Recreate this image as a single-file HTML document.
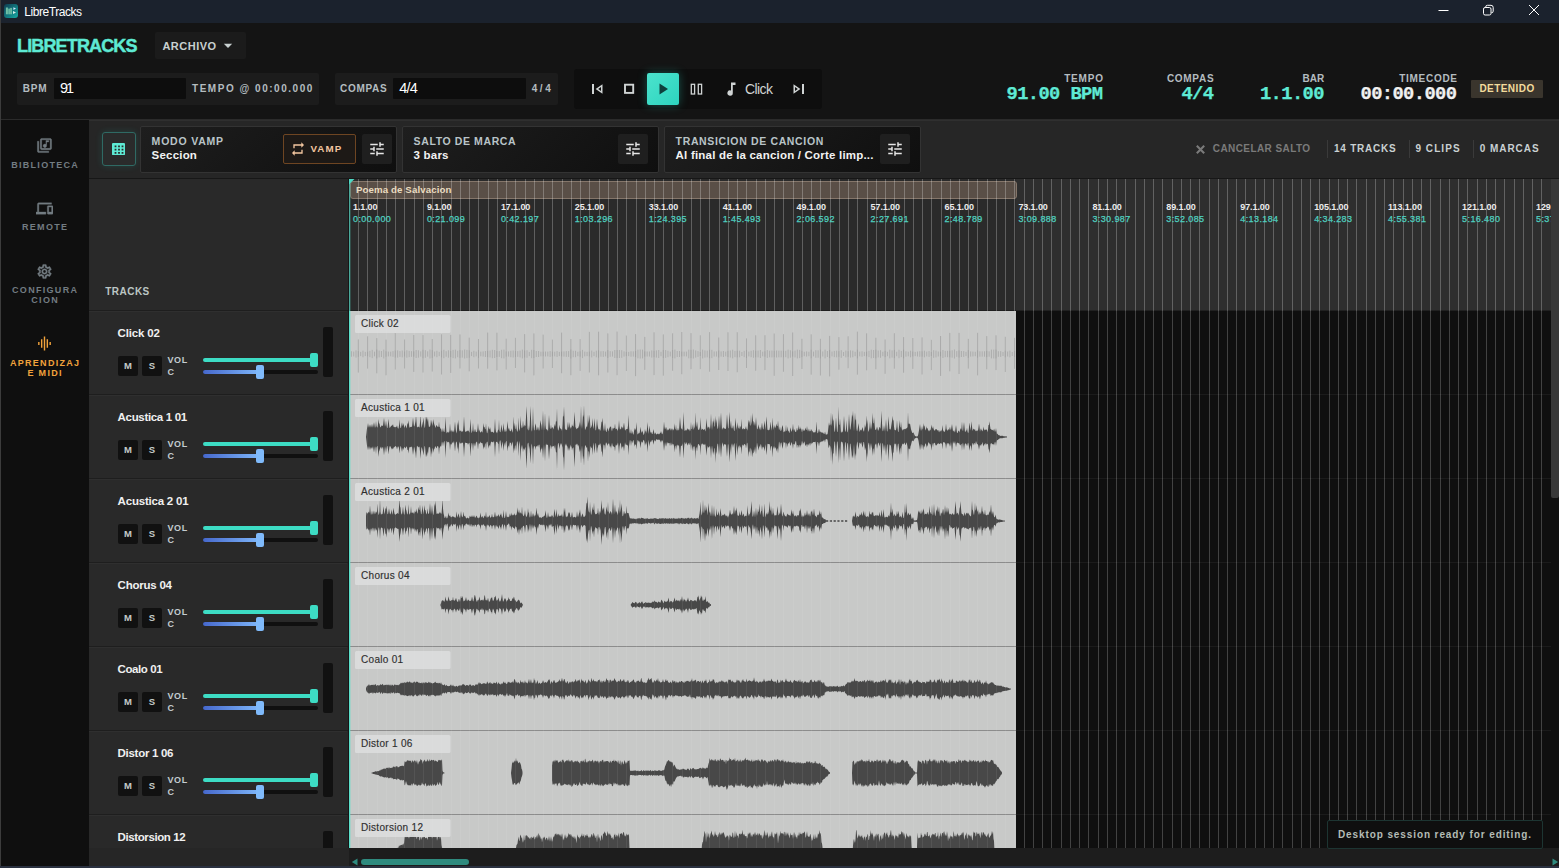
<!DOCTYPE html>
<html lang="es"><head><meta charset="utf-8"><title>LibreTracks</title>
<style>
*{box-sizing:border-box;margin:0;padding:0}
html,body{width:1559px;height:868px;overflow:hidden;background:#141414}
body{position:relative;font-family:"Liberation Sans", sans-serif;color:#e8e8e8}
div,span.t,svg{position:absolute}
span.t{white-space:nowrap;display:block}
.s{font-family:"Liberation Sans", sans-serif}
.m{font-family:"Liberation Mono", monospace}
</style></head>
<body>
<div style="left:0px;top:0px;width:1559px;height:23px;background:#1b222d"></div>
<svg style="left:4px;top:4px" width="14" height="14" viewBox="0 0 14 14"><defs><linearGradient id="ig" x1="0" y1="0" x2="1" y2="1"><stop offset="0" stop-color="#0f3b50"/><stop offset="0.55" stop-color="#127a80"/><stop offset="1" stop-color="#17aba3"/></linearGradient></defs><rect x="0" y="0" width="14" height="14" rx="3" fill="url(#ig)"/><rect x="1.900" y="3.500" width="2" height="6.800" fill="#6fc0a6"/><rect x="4.300" y="4.600" width="1.600" height="5.700" fill="#6fc0a6"/><rect x="6.200" y="3.900" width="1.700" height="6.400" fill="#6fc0a6"/><path d="M9.400 3.200 L12 4.600 L9.400 6Z" fill="#cfe4ff"/><path d="M9 7 L12 8.500 L9 10Z" fill="#d8f0ea"/></svg>
<span class="t s" style="top:5.64px;font-size:12px;line-height:12px;color:#ffffff;font-weight:400;letter-spacing:-0.453px;left:24.3px;">LibreTracks</span>
<svg style="left:1430px;top:0" width="129" height="23" viewBox="0 0 129 23" fill="none" stroke="#ffffff" stroke-width="1"><path d="M8.5 10.5 H18.5"/><rect x="53.500" y="7.500" width="7.500" height="7.500" rx="1.600"/><path d="M55.700 7.300 V7 a1.700 1.700 0 0 1 1.700 -1.700 H61 a2.200 2.200 0 0 1 2.200 2.200 V11.100 a1.700 1.700 0 0 1 -1.700 1.700 H61.300" fill="none"/><path d="M99 5 L109 15 M109 5 L99 15"/></svg>
<span class="t s" style="top:36.96px;font-size:18px;line-height:18px;color:#5eead4;font-weight:700;letter-spacing:-0.85px;left:17px;-webkit-text-stroke:0.45px #5eead4;">LIBRETRACKS</span>
<div style="left:155px;top:32px;width:91px;height:27px;background:#1b1b1b;border-radius:2px"></div>
<span class="t s" style="top:40.69px;font-size:11px;line-height:11px;color:#c8d0d0;font-weight:700;letter-spacing:0.496px;left:162.4px;">ARCHIVO</span>
<svg style="left:223px;top:43px" width="10" height="6" viewBox="0 0 10 6"><path d="M0.8 0.8 H9.2 L5 5Z" fill="#c8d0d0"/></svg>
<div style="left:17px;top:73px;width:302px;height:32px;background:#1c1c1c;border-radius:2px"></div>
<span class="t s" style="top:83.83px;font-size:10px;line-height:10px;color:#b4bcc0;font-weight:700;letter-spacing:0.889px;left:22.7px;">BPM</span>
<div style="left:54px;top:78px;width:132px;height:21px;background:#0d0d0d;border-radius:1px"></div>
<span class="t s" style="top:81.13px;font-size:14.5px;line-height:14.5px;color:#ffffff;font-weight:400;letter-spacing:-2.127px;left:60px;">91</span>
<span class="t s" style="top:83.83px;font-size:10px;line-height:10px;color:#b4bcc0;font-weight:700;letter-spacing:1.525px;left:192px;">TEMPO @ 00:00.000</span>
<div style="left:335px;top:73px;width:223px;height:32px;background:#1c1c1c;border-radius:2px"></div>
<span class="t s" style="top:83.83px;font-size:10px;line-height:10px;color:#b4bcc0;font-weight:700;letter-spacing:0.71px;left:340px;">COMPAS</span>
<div style="left:393px;top:78px;width:133px;height:21px;background:#0d0d0d;border-radius:1px"></div>
<span class="t s" style="top:81.13px;font-size:14.5px;line-height:14.5px;color:#ffffff;font-weight:400;letter-spacing:-0.878px;left:399.3px;">4/4</span>
<span class="t s" style="top:83.83px;font-size:10px;line-height:10px;color:#b4bcc0;font-weight:700;letter-spacing:2.55px;left:531.7px;">4/4</span>
<div style="left:574px;top:69px;width:248px;height:40px;background:#0e0e0e;border-radius:3px"></div>
<div style="left:647px;top:73px;width:32px;height:32px;background:linear-gradient(135deg,#4be3cd,#2dd4bf);border-radius:2px;box-shadow:0 0 10px rgba(45,212,191,.35)"></div>
<svg style="left:574px;top:69px" width="248" height="40" viewBox="0 0 248 40"><rect x="18" y="15" width="2" height="10" fill="#d0d4d4"/><path d="M28.5 15.2 V24.8 L21.6 20Z M27 18 L24.2 20 L27 22Z" fill="#d0d4d4" fill-rule="evenodd"/><rect x="51" y="15.700" width="8.200" height="8.200" fill="none" stroke="#d0d4d4" stroke-width="1.900"/><path d="M85.5 14.5 V25.5 L94 20Z" fill="#0e3f3c"/><rect x="117.300" y="15.300" width="3.300" height="9.700" fill="none" stroke="#d0d4d4" stroke-width="1.300"/><rect x="124.300" y="15.300" width="3.300" height="9.700" fill="none" stroke="#d0d4d4" stroke-width="1.300"/><path d="M157 13.5 V21.4 a2.7 2.7 0 1 0 1.8 2.5 V16 H161.5 V13.5Z" fill="#d0d4d4"/><rect x="228" y="15" width="2" height="10" fill="#d0d4d4"/><path d="M219.5 15.2 V24.8 L226.4 20Z M221 18 L223.8 20 L221 22Z" fill="#d0d4d4" fill-rule="evenodd"/></svg>
<span class="t s" style="top:81.65px;font-size:14px;line-height:14px;color:#d0d4d4;font-weight:400;letter-spacing:-0.583px;left:745px;">Click</span>
<span class="t s" style="top:73.53px;font-size:10px;line-height:10px;color:#b4bcc0;font-weight:700;letter-spacing:0.811px;right:455.19px;text-align:right;">TEMPO</span>
<span class="t m" style="top:84.79px;font-size:18.8px;line-height:18.8px;color:#5eead4;font-weight:700;letter-spacing:-0.613px;right:456.61px;text-align:right;-webkit-text-stroke:0.25px #5eead4;">91.00 BPM</span>
<span class="t s" style="top:73.53px;font-size:10px;line-height:10px;color:#b4bcc0;font-weight:700;letter-spacing:0.71px;right:344.69px;text-align:right;">COMPAS</span>
<span class="t m" style="top:84.79px;font-size:18.8px;line-height:18.8px;color:#5eead4;font-weight:700;letter-spacing:-0.613px;right:345.61px;text-align:right;-webkit-text-stroke:0.25px #5eead4;">4/4</span>
<span class="t s" style="top:73.53px;font-size:10px;line-height:10px;color:#b4bcc0;font-weight:700;letter-spacing:0.117px;right:234.58px;text-align:right;">BAR</span>
<span class="t m" style="top:84.79px;font-size:18.8px;line-height:18.8px;color:#5eead4;font-weight:700;letter-spacing:-0.613px;right:235.11px;text-align:right;-webkit-text-stroke:0.25px #5eead4;">1.1.00</span>
<span class="t s" style="top:73.53px;font-size:10px;line-height:10px;color:#b4bcc0;font-weight:700;letter-spacing:0.717px;right:101.28px;text-align:right;">TIMECODE</span>
<span class="t m" style="top:84.79px;font-size:18.8px;line-height:18.8px;color:#f0f0f0;font-weight:700;letter-spacing:-0.613px;right:102.61px;text-align:right;-webkit-text-stroke:0.25px #f0f0f0;">00:00.000</span>
<div style="left:1471px;top:80px;width:72px;height:18px;background:#3a352d;border-radius:1px"></div>
<span class="t s" style="top:83.83px;font-size:10px;line-height:10px;color:#f3dc9c;font-weight:700;letter-spacing:0.447px;left:1479.4px;">DETENIDO</span>
<div style="left:0px;top:119px;width:1559px;height:1px;background:#2b2b2b"></div>
<div style="left:0px;top:120px;width:89px;height:748px;background:#0f0f0f"></div>
<svg style="left:36px;top:137px" width="17" height="17" viewBox="0 0 24 24" fill="#737c82" stroke="#737c82" stroke-width="0.5"><path d="M20 2H8c-1.1 0-2 .9-2 2v12c0 1.1.9 2 2 2h12c1.1 0 2-.9 2-2V4c0-1.1-.9-2-2-2zm0 14H8V4h12v12zm-7.500-1c1.380 0 2.500-1.120 2.500-2.500V7h3V5h-4v5.510c-.420-.320-.930-.510-1.500-.510-1.380 0-2.500 1.120-2.500 2.500s1.120 2.500 2.500 2.500zM4 6H2v14c0 1.100.900 2 2 2h14v-2H4V6z"/></svg>
<span class="t s" style="top:160.58px;font-size:9px;line-height:9px;color:#737c82;font-weight:700;letter-spacing:1.3px;left:-54.85px;width:200px;text-align:center;">BIBLIOTECA</span>
<svg style="left:36px;top:200px" width="17" height="17" viewBox="0 0 24 24" fill="#737c82" stroke="#737c82" stroke-width="0.5"><path d="M4 6h18V4H4c-1.100 0-2 .900-2 2v11H0v3h14v-3H4V6zm19 2h-6c-.550 0-1 .450-1 1v10c0 .550.450 1 1 1h6c.550 0 1-.450 1-1V9c0-.550-.450-1-1-1zm-1 9h-4v-7h4v7z"/></svg>
<span class="t s" style="top:222.78px;font-size:9px;line-height:9px;color:#737c82;font-weight:700;letter-spacing:1.3px;left:-54.85px;width:200px;text-align:center;">REMOTE</span>
<svg style="left:36px;top:262.5px" width="17" height="17" viewBox="0 0 24 24" fill="#737c82" stroke="#737c82" stroke-width="0.5"><path d="M19.430 12.980c.040-.320.070-.640.070-.980 0-.340-.030-.660-.070-.980l2.110-1.650c.190-.150.240-.420.120-.640l-2-3.460c-.090-.160-.260-.250-.440-.250-.060 0-.120.010-.170.030l-2.490 1c-.520-.400-1.080-.730-1.690-.980l-.380-2.650C14.460 2.180 14.250 2 14 2h-4c-.250 0-.460.180-.490.420l-.380 2.650c-.610.250-1.170.590-1.690.980l-2.490-1c-.060-.020-.120-.030-.180-.030-.170 0-.340.090-.430.250l-2 3.460c-.130.220-.070.490.12.640l2.110 1.650c-.040.320-.070.650-.070.980 0 .330.030.660.070.980l-2.110 1.650c-.190.150-.240.420-.120.640l2 3.460c.090.160.260.250.440.250.060 0 .120-.010.170-.030l2.490-1c.520.400 1.080.730 1.690.980l.380 2.650c.030.240.240.420.490.420h4c.250 0 .460-.180.490-.420l.380-2.650c.610-.250 1.170-.590 1.690-.980l2.490 1c.060.020.120.030.180.030.170 0 .340-.090.430-.250l2-3.460c.120-.220.070-.490-.12-.640l-2.110-1.650zm-1.980-1.710c.040.310.050.520.050.730 0 .210-.020.430-.050.730l-.140 1.130.890.700 1.080.840-.700 1.210-1.270-.510-1.040-.420-.900.680c-.430.320-.840.560-1.250.730l-1.060.430-.160 1.130-.200 1.350h-1.400l-.190-1.350-.160-1.130-1.060-.430c-.430-.180-.830-.410-1.230-.710l-.910-.700-1.060.430-1.270.510-.700-1.210 1.080-.840.890-.700-.140-1.130c-.030-.310-.050-.540-.050-.740s.020-.430.050-.730l.140-1.130-.890-.700-1.080-.840.700-1.210 1.270.510 1.040.420.900-.680c.430-.320.840-.560 1.250-.730l1.060-.430.160-1.130.200-1.350h1.390l.190 1.350.160 1.130 1.060.430c.430.180.830.410 1.230.710l.910.700 1.060-.430 1.270-.510.700 1.210-1.070.850-.890.700.140 1.130zM12 8c-2.210 0-4 1.790-4 4s1.790 4 4 4 4-1.790 4-4-1.790-4-4-4zm0 6c-1.100 0-2-.900-2-2s.900-2 2-2 2 .900 2 2-.900 2-2 2z"/></svg>
<span class="t s" style="top:285.78px;font-size:9px;line-height:9px;color:#737c82;font-weight:700;letter-spacing:1.3px;left:-54.85px;width:200px;text-align:center;">CONFIGURA</span>
<span class="t s" style="top:296.38px;font-size:9px;line-height:9px;color:#737c82;font-weight:700;letter-spacing:1.3px;left:-54.85px;width:200px;text-align:center;">CION</span>
<svg style="left:36px;top:335px" width="17" height="17" viewBox="0 0 24 24" fill="#f2a33c"><path d="M7 18h2V6H7v12zm4 4h2V2h-2v20zm-8-8h2v-4H3v4zm12 4h2V6h-2v12zm4-8v4h2v-4h-2z"/></svg>
<span class="t s" style="top:358.78px;font-size:9px;line-height:9px;color:#f2a33c;font-weight:700;letter-spacing:1.3px;left:-54.85px;width:200px;text-align:center;">APRENDIZAJ</span>
<span class="t s" style="top:369.38px;font-size:9px;line-height:9px;color:#f2a33c;font-weight:700;letter-spacing:1.3px;left:-54.85px;width:200px;text-align:center;">E MIDI</span>
<div style="left:0px;top:0px;width:1px;height:868px;background:#3c3c3c"></div>
<div style="left:89px;top:120px;width:1470px;height:58px;background:#262626"></div>
<div style="left:89px;top:120px;width:1470px;height:1px;background:#2f2f2f"></div>
<div style="left:89px;top:178px;width:1470px;height:1px;background:#171717"></div>
<div style="left:102px;top:132px;width:34px;height:34px;background:#2a2b2b;border:1px solid #2f6a64;border-radius:3px;box-shadow:0 0 7px rgba(45,212,191,.16)"></div>
<svg style="left:112px;top:143px" width="13" height="12.200" viewBox="0 0 13 12.200" fill="#5eead4"><path d="M1 0h11a1 1 0 0 1 1 1v10.200a1 1 0 0 1 -1 1h-11a1 1 0 0 1 -1 -1v-10.200a1 1 0 0 1 1 -1z M2.60 2.50h1.800v1.700h-1.800zM2.60 5.80h1.800v1.700h-1.800zM2.60 9.10h1.800v1.700h-1.800zM6.10 2.50h1.800v1.700h-1.800zM6.10 5.80h1.800v1.700h-1.800zM6.10 9.10h1.800v1.700h-1.800zM9.60 2.50h1.800v1.700h-1.800zM9.60 5.80h1.800v1.700h-1.800zM9.60 9.10h1.800v1.700h-1.800z" fill-rule="evenodd"/></svg>
<div style="left:140px;top:126px;width:257px;height:47px;background:linear-gradient(135deg,#1e1e1e 0%,#0f0f0f 100%);border:1px solid #333;border-radius:2px"></div>
<span class="t s" style="top:136.41px;font-size:10.5px;line-height:10.5px;color:#b9c4c8;font-weight:700;letter-spacing:0.795px;left:151.6px;">MODO VAMP</span>
<span class="t s" style="top:149.57px;font-size:11.5px;line-height:11.5px;color:#f2f2f2;font-weight:700;letter-spacing:0.2px;left:151.6px;">Seccion</span>
<div style="left:362px;top:134px;width:30px;height:30px;background:#1f1f1f;border-radius:2px"></div>
<svg style="left:368px;top:140px" width="18" height="18" viewBox="0 0 24 24" fill="#e6e6e6"><path d="M3 17v2h6v-2H3zM3 5v2h10V5H3zm10 16v-2h8v-2h-8v-2h-2v6h2zM7 9v2H3v2h4v2h2V9H7zm14 4v-2H11v2h10zm-6-4h2V7h4V5h-4V3h-2v6z"/></svg>
<div style="left:283px;top:134px;width:73px;height:30px;background:#1d1916;border:1px solid #6e4522;border-radius:2px"></div>
<svg style="left:290px;top:141px" width="16" height="16" viewBox="0 0 24 24" fill="#f3c6a0"><path d="M7 7h10v3l4-4-4-4v3H5v6h2V7zm10 10H7v-3l-4 4 4 4v-3h12v-6h-2v4z"/></svg>
<span class="t s" style="top:143.80px;font-size:9.8px;line-height:9.8px;color:#f3c6a0;font-weight:700;letter-spacing:1.071px;left:310.4px;">VAMP</span>
<div style="left:402px;top:126px;width:257px;height:47px;background:linear-gradient(135deg,#1e1e1e 0%,#0f0f0f 100%);border:1px solid #333;border-radius:2px"></div>
<span class="t s" style="top:136.41px;font-size:10.5px;line-height:10.5px;color:#b9c4c8;font-weight:700;letter-spacing:0.607px;left:413.6px;">SALTO DE MARCA</span>
<span class="t s" style="top:149.57px;font-size:11.5px;line-height:11.5px;color:#f2f2f2;font-weight:700;letter-spacing:0.2px;left:413.6px;">3 bars</span>
<div style="left:618px;top:134px;width:30px;height:30px;background:#1f1f1f;border-radius:2px"></div>
<svg style="left:624px;top:140px" width="18" height="18" viewBox="0 0 24 24" fill="#e6e6e6"><path d="M3 17v2h6v-2H3zM3 5v2h10V5H3zm10 16v-2h8v-2h-8v-2h-2v6h2zM7 9v2H3v2h4v2h2V9H7zm14 4v-2H11v2h10zm-6-4h2V7h4V5h-4V3h-2v6z"/></svg>
<div style="left:664px;top:126px;width:257px;height:47px;background:linear-gradient(135deg,#1e1e1e 0%,#0f0f0f 100%);border:1px solid #333;border-radius:2px"></div>
<span class="t s" style="top:136.41px;font-size:10.5px;line-height:10.5px;color:#b9c4c8;font-weight:700;letter-spacing:0.647px;left:675.6px;">TRANSICION DE CANCION</span>
<span class="t s" style="top:149.57px;font-size:11.5px;line-height:11.5px;color:#f2f2f2;font-weight:700;letter-spacing:0.2px;left:675.6px;">Al final de la cancion / Corte limp...</span>
<div style="left:880px;top:134px;width:30px;height:30px;background:#1f1f1f;border-radius:2px"></div>
<svg style="left:886px;top:140px" width="18" height="18" viewBox="0 0 24 24" fill="#e6e6e6"><path d="M3 17v2h6v-2H3zM3 5v2h10V5H3zm10 16v-2h8v-2h-8v-2h-2v6h2zM7 9v2H3v2h4v2h2V9H7zm14 4v-2H11v2h10zm-6-4h2V7h4V5h-4V3h-2v6z"/></svg>
<svg style="left:1195px;top:144px" width="11" height="11" viewBox="0 0 11 11" stroke="#7a7a7a" stroke-width="2.1" fill="none"><path d="M1.800 1.800 L9.200 9.200 M9.200 1.800 L1.800 9.200"/></svg>
<span class="t s" style="top:143.94px;font-size:10px;line-height:10px;color:#7a7a7a;font-weight:700;letter-spacing:0.419px;left:1212.8px;">CANCELAR SALTO</span>
<div style="left:1327px;top:140px;width:1px;height:18px;background:#3a3a3a"></div>
<span class="t s" style="top:143.94px;font-size:10px;line-height:10px;color:#c9d0d2;font-weight:700;letter-spacing:0.779px;left:1333.9px;">14 TRACKS</span>
<div style="left:1409px;top:140px;width:1px;height:18px;background:#3a3a3a"></div>
<span class="t s" style="top:143.94px;font-size:10px;line-height:10px;color:#c9d0d2;font-weight:700;letter-spacing:1.069px;left:1415.4px;">9 CLIPS</span>
<div style="left:1473px;top:140px;width:1px;height:18px;background:#3a3a3a"></div>
<span class="t s" style="top:143.94px;font-size:10px;line-height:10px;color:#c9d0d2;font-weight:700;letter-spacing:0.939px;left:1479.8px;">0 MARCAS</span>
<div style="left:89px;top:179px;width:260px;height:689px;background:#292929"></div>
<div style="left:348px;top:179px;width:1px;height:669px;background:#161616"></div>
<span class="t s" style="top:286.84px;font-size:10px;line-height:10px;color:#bcc6c4;font-weight:700;letter-spacing:0.487px;left:105.2px;">TRACKS</span>
<div style="left:89px;top:310px;width:259px;height:1px;background:#1e1e1e"></div>
<div style="left:89px;top:311px;width:258px;height:1px;background:#2f2f2f"></div>
<span class="t s" style="top:327.57px;font-size:11.5px;line-height:11.5px;color:#f0f0f0;font-weight:700;letter-spacing:-0.153px;left:117.6px;">Click 02</span>
<div style="left:323px;top:327px;width:10px;height:50px;background:#111;border-radius:2px"></div>
<div style="left:118px;top:356px;width:20px;height:20px;background:#111;border-radius:2px"></div>
<span class="t s" style="top:361.46px;font-size:9.5px;line-height:9.5px;color:#c6ccc9;font-weight:700;left:118.00px;width:20px;text-align:center;">M</span>
<div style="left:142px;top:356px;width:20px;height:20px;background:#111;border-radius:2px"></div>
<span class="t s" style="top:361.46px;font-size:9.5px;line-height:9.5px;color:#c6ccc9;font-weight:700;left:142.00px;width:20px;text-align:center;">S</span>
<span class="t s" style="top:355.78px;font-size:9px;line-height:9px;color:#c4ccd0;font-weight:700;letter-spacing:0.6px;left:167.5px;">VOL</span>
<span class="t s" style="top:367.78px;font-size:9px;line-height:9px;color:#c4ccd0;font-weight:700;letter-spacing:0.6px;left:167.5px;">C</span>
<div style="left:202.5px;top:357.8px;width:115.5px;height:4.6px;background:#3ddcc4;border-radius:2.300px"></div>
<div style="left:310px;top:353px;width:8px;height:14px;background:#3ddcc4;border-radius:2px"></div>
<div style="left:202.5px;top:370px;width:115.5px;height:4.2px;background:#101010;border-radius:2.100px"></div>
<div style="left:202.5px;top:370px;width:58px;height:4.2px;background:linear-gradient(90deg,#4668cc,#7fb8fb);border-radius:2.100px"></div>
<div style="left:255.5px;top:365px;width:8.5px;height:14px;background:#7fbafb;border-radius:2px"></div>
<div style="left:89px;top:394px;width:259px;height:1px;background:#1e1e1e"></div>
<div style="left:89px;top:395px;width:258px;height:1px;background:#2f2f2f"></div>
<span class="t s" style="top:411.57px;font-size:11.5px;line-height:11.5px;color:#f0f0f0;font-weight:700;letter-spacing:-0.326px;left:117.6px;">Acustica 1 01</span>
<div style="left:323px;top:411px;width:10px;height:50px;background:#111;border-radius:2px"></div>
<div style="left:118px;top:440px;width:20px;height:20px;background:#111;border-radius:2px"></div>
<span class="t s" style="top:445.46px;font-size:9.5px;line-height:9.5px;color:#c6ccc9;font-weight:700;left:118.00px;width:20px;text-align:center;">M</span>
<div style="left:142px;top:440px;width:20px;height:20px;background:#111;border-radius:2px"></div>
<span class="t s" style="top:445.46px;font-size:9.5px;line-height:9.5px;color:#c6ccc9;font-weight:700;left:142.00px;width:20px;text-align:center;">S</span>
<span class="t s" style="top:439.78px;font-size:9px;line-height:9px;color:#c4ccd0;font-weight:700;letter-spacing:0.6px;left:167.5px;">VOL</span>
<span class="t s" style="top:451.78px;font-size:9px;line-height:9px;color:#c4ccd0;font-weight:700;letter-spacing:0.6px;left:167.5px;">C</span>
<div style="left:202.5px;top:441.8px;width:115.5px;height:4.6px;background:#3ddcc4;border-radius:2.300px"></div>
<div style="left:310px;top:437px;width:8px;height:14px;background:#3ddcc4;border-radius:2px"></div>
<div style="left:202.5px;top:454px;width:115.5px;height:4.2px;background:#101010;border-radius:2.100px"></div>
<div style="left:202.5px;top:454px;width:58px;height:4.2px;background:linear-gradient(90deg,#4668cc,#7fb8fb);border-radius:2.100px"></div>
<div style="left:255.5px;top:449px;width:8.5px;height:14px;background:#7fbafb;border-radius:2px"></div>
<div style="left:89px;top:478px;width:259px;height:1px;background:#1e1e1e"></div>
<div style="left:89px;top:479px;width:258px;height:1px;background:#2f2f2f"></div>
<span class="t s" style="top:495.57px;font-size:11.5px;line-height:11.5px;color:#f0f0f0;font-weight:700;letter-spacing:-0.209px;left:117.6px;">Acustica 2 01</span>
<div style="left:323px;top:495px;width:10px;height:50px;background:#111;border-radius:2px"></div>
<div style="left:118px;top:524px;width:20px;height:20px;background:#111;border-radius:2px"></div>
<span class="t s" style="top:529.46px;font-size:9.5px;line-height:9.5px;color:#c6ccc9;font-weight:700;left:118.00px;width:20px;text-align:center;">M</span>
<div style="left:142px;top:524px;width:20px;height:20px;background:#111;border-radius:2px"></div>
<span class="t s" style="top:529.46px;font-size:9.5px;line-height:9.5px;color:#c6ccc9;font-weight:700;left:142.00px;width:20px;text-align:center;">S</span>
<span class="t s" style="top:523.78px;font-size:9px;line-height:9px;color:#c4ccd0;font-weight:700;letter-spacing:0.6px;left:167.5px;">VOL</span>
<span class="t s" style="top:535.78px;font-size:9px;line-height:9px;color:#c4ccd0;font-weight:700;letter-spacing:0.6px;left:167.5px;">C</span>
<div style="left:202.5px;top:525.8px;width:115.5px;height:4.6px;background:#3ddcc4;border-radius:2.300px"></div>
<div style="left:310px;top:521px;width:8px;height:14px;background:#3ddcc4;border-radius:2px"></div>
<div style="left:202.5px;top:538px;width:115.5px;height:4.2px;background:#101010;border-radius:2.100px"></div>
<div style="left:202.5px;top:538px;width:58px;height:4.2px;background:linear-gradient(90deg,#4668cc,#7fb8fb);border-radius:2.100px"></div>
<div style="left:255.5px;top:533px;width:8.5px;height:14px;background:#7fbafb;border-radius:2px"></div>
<div style="left:89px;top:562px;width:259px;height:1px;background:#1e1e1e"></div>
<div style="left:89px;top:563px;width:258px;height:1px;background:#2f2f2f"></div>
<span class="t s" style="top:579.57px;font-size:11.5px;line-height:11.5px;color:#f0f0f0;font-weight:700;letter-spacing:-0.229px;left:117.6px;">Chorus 04</span>
<div style="left:323px;top:579px;width:10px;height:50px;background:#111;border-radius:2px"></div>
<div style="left:118px;top:608px;width:20px;height:20px;background:#111;border-radius:2px"></div>
<span class="t s" style="top:613.46px;font-size:9.5px;line-height:9.5px;color:#c6ccc9;font-weight:700;left:118.00px;width:20px;text-align:center;">M</span>
<div style="left:142px;top:608px;width:20px;height:20px;background:#111;border-radius:2px"></div>
<span class="t s" style="top:613.46px;font-size:9.5px;line-height:9.5px;color:#c6ccc9;font-weight:700;left:142.00px;width:20px;text-align:center;">S</span>
<span class="t s" style="top:607.78px;font-size:9px;line-height:9px;color:#c4ccd0;font-weight:700;letter-spacing:0.6px;left:167.5px;">VOL</span>
<span class="t s" style="top:619.78px;font-size:9px;line-height:9px;color:#c4ccd0;font-weight:700;letter-spacing:0.6px;left:167.5px;">C</span>
<div style="left:202.5px;top:609.8px;width:115.5px;height:4.6px;background:#3ddcc4;border-radius:2.300px"></div>
<div style="left:310px;top:605px;width:8px;height:14px;background:#3ddcc4;border-radius:2px"></div>
<div style="left:202.5px;top:622px;width:115.5px;height:4.2px;background:#101010;border-radius:2.100px"></div>
<div style="left:202.5px;top:622px;width:58px;height:4.2px;background:linear-gradient(90deg,#4668cc,#7fb8fb);border-radius:2.100px"></div>
<div style="left:255.5px;top:617px;width:8.5px;height:14px;background:#7fbafb;border-radius:2px"></div>
<div style="left:89px;top:646px;width:259px;height:1px;background:#1e1e1e"></div>
<div style="left:89px;top:647px;width:258px;height:1px;background:#2f2f2f"></div>
<span class="t s" style="top:663.57px;font-size:11.5px;line-height:11.5px;color:#f0f0f0;font-weight:700;letter-spacing:-0.418px;left:117.6px;">Coalo 01</span>
<div style="left:323px;top:663px;width:10px;height:50px;background:#111;border-radius:2px"></div>
<div style="left:118px;top:692px;width:20px;height:20px;background:#111;border-radius:2px"></div>
<span class="t s" style="top:697.46px;font-size:9.5px;line-height:9.5px;color:#c6ccc9;font-weight:700;left:118.00px;width:20px;text-align:center;">M</span>
<div style="left:142px;top:692px;width:20px;height:20px;background:#111;border-radius:2px"></div>
<span class="t s" style="top:697.46px;font-size:9.5px;line-height:9.5px;color:#c6ccc9;font-weight:700;left:142.00px;width:20px;text-align:center;">S</span>
<span class="t s" style="top:691.78px;font-size:9px;line-height:9px;color:#c4ccd0;font-weight:700;letter-spacing:0.6px;left:167.5px;">VOL</span>
<span class="t s" style="top:703.78px;font-size:9px;line-height:9px;color:#c4ccd0;font-weight:700;letter-spacing:0.6px;left:167.5px;">C</span>
<div style="left:202.5px;top:693.8px;width:115.5px;height:4.6px;background:#3ddcc4;border-radius:2.300px"></div>
<div style="left:310px;top:689px;width:8px;height:14px;background:#3ddcc4;border-radius:2px"></div>
<div style="left:202.5px;top:706px;width:115.5px;height:4.2px;background:#101010;border-radius:2.100px"></div>
<div style="left:202.5px;top:706px;width:58px;height:4.2px;background:linear-gradient(90deg,#4668cc,#7fb8fb);border-radius:2.100px"></div>
<div style="left:255.5px;top:701px;width:8.5px;height:14px;background:#7fbafb;border-radius:2px"></div>
<div style="left:89px;top:730px;width:259px;height:1px;background:#1e1e1e"></div>
<div style="left:89px;top:731px;width:258px;height:1px;background:#2f2f2f"></div>
<span class="t s" style="top:747.57px;font-size:11.5px;line-height:11.5px;color:#f0f0f0;font-weight:700;letter-spacing:-0.29px;left:117.6px;">Distor 1 06</span>
<div style="left:323px;top:747px;width:10px;height:50px;background:#111;border-radius:2px"></div>
<div style="left:118px;top:776px;width:20px;height:20px;background:#111;border-radius:2px"></div>
<span class="t s" style="top:781.46px;font-size:9.5px;line-height:9.5px;color:#c6ccc9;font-weight:700;left:118.00px;width:20px;text-align:center;">M</span>
<div style="left:142px;top:776px;width:20px;height:20px;background:#111;border-radius:2px"></div>
<span class="t s" style="top:781.46px;font-size:9.5px;line-height:9.5px;color:#c6ccc9;font-weight:700;left:142.00px;width:20px;text-align:center;">S</span>
<span class="t s" style="top:775.78px;font-size:9px;line-height:9px;color:#c4ccd0;font-weight:700;letter-spacing:0.6px;left:167.5px;">VOL</span>
<span class="t s" style="top:787.78px;font-size:9px;line-height:9px;color:#c4ccd0;font-weight:700;letter-spacing:0.6px;left:167.5px;">C</span>
<div style="left:202.5px;top:777.8px;width:115.5px;height:4.6px;background:#3ddcc4;border-radius:2.300px"></div>
<div style="left:310px;top:773px;width:8px;height:14px;background:#3ddcc4;border-radius:2px"></div>
<div style="left:202.5px;top:790px;width:115.5px;height:4.2px;background:#101010;border-radius:2.100px"></div>
<div style="left:202.5px;top:790px;width:58px;height:4.2px;background:linear-gradient(90deg,#4668cc,#7fb8fb);border-radius:2.100px"></div>
<div style="left:255.5px;top:785px;width:8.5px;height:14px;background:#7fbafb;border-radius:2px"></div>
<div style="left:89px;top:814px;width:259px;height:1px;background:#1e1e1e"></div>
<div style="left:89px;top:815px;width:258px;height:1px;background:#2f2f2f"></div>
<span class="t s" style="top:831.57px;font-size:11.5px;line-height:11.5px;color:#f0f0f0;font-weight:700;letter-spacing:-0.404px;left:117.6px;">Distorsion 12</span>
<div style="left:323px;top:831px;width:10px;height:50px;background:#111;border-radius:2px"></div>
<div style="left:118px;top:860px;width:20px;height:20px;background:#111;border-radius:2px"></div>
<span class="t s" style="top:865.46px;font-size:9.5px;line-height:9.5px;color:#c6ccc9;font-weight:700;left:118.00px;width:20px;text-align:center;">M</span>
<div style="left:142px;top:860px;width:20px;height:20px;background:#111;border-radius:2px"></div>
<span class="t s" style="top:865.46px;font-size:9.5px;line-height:9.5px;color:#c6ccc9;font-weight:700;left:142.00px;width:20px;text-align:center;">S</span>
<span class="t s" style="top:859.78px;font-size:9px;line-height:9px;color:#c4ccd0;font-weight:700;letter-spacing:0.6px;left:167.5px;">VOL</span>
<span class="t s" style="top:871.78px;font-size:9px;line-height:9px;color:#c4ccd0;font-weight:700;letter-spacing:0.6px;left:167.5px;">C</span>
<div style="left:202.5px;top:861.8px;width:115.5px;height:4.6px;background:#3ddcc4;border-radius:2.300px"></div>
<div style="left:310px;top:857px;width:8px;height:14px;background:#3ddcc4;border-radius:2px"></div>
<div style="left:202.5px;top:874px;width:115.5px;height:4.2px;background:#101010;border-radius:2.100px"></div>
<div style="left:202.5px;top:874px;width:58px;height:4.2px;background:linear-gradient(90deg,#4668cc,#7fb8fb);border-radius:2.100px"></div>
<div style="left:255.5px;top:869px;width:8.5px;height:14px;background:#7fbafb;border-radius:2px"></div>
<div style="left:349px;top:179px;width:1202px;height:132px;background:#2a2a2a"></div>
<div style="left:1016px;top:179px;width:535px;height:132px;background:#2e2e2e"></div>
<div style="left:349px;top:310px;width:1202px;height:1px;background:rgba(0,0,0,.28)"></div>
<div style="left:1016px;top:311px;width:535px;height:537px;background:#0f0f0f"></div>
<div style="left:1016px;top:394px;width:535px;height:1px;background:#1b1b1b"></div>
<div style="left:1016px;top:478px;width:535px;height:1px;background:#1b1b1b"></div>
<div style="left:1016px;top:562px;width:535px;height:1px;background:#1b1b1b"></div>
<div style="left:1016px;top:646px;width:535px;height:1px;background:#1b1b1b"></div>
<div style="left:1016px;top:730px;width:535px;height:1px;background:#1b1b1b"></div>
<div style="left:1016px;top:814px;width:535px;height:1px;background:#1b1b1b"></div>
<div style="left:350px;top:181px;width:667px;height:18px;background:#5a4f47;border:1px solid #85766a;border-radius:3px"></div>
<svg style="left:349px;top:179px" width="1202" height="669" viewBox="349 179 1202 669"><rect x="350" y="311" width="666" height="83" fill="#c8c9c8"/><rect x="350" y="394" width="666" height="1.300" fill="#8c8c8c"/><rect x="350" y="395" width="666" height="83" fill="#c8c9c8"/><rect x="350" y="478" width="666" height="1.300" fill="#8c8c8c"/><rect x="350" y="479" width="666" height="83" fill="#c8c9c8"/><rect x="350" y="562" width="666" height="1.300" fill="#8c8c8c"/><rect x="350" y="563" width="666" height="83" fill="#c8c9c8"/><rect x="350" y="646" width="666" height="1.300" fill="#8c8c8c"/><rect x="350" y="647" width="666" height="83" fill="#c8c9c8"/><rect x="350" y="730" width="666" height="1.300" fill="#8c8c8c"/><rect x="350" y="731" width="666" height="83" fill="#c8c9c8"/><rect x="350" y="814" width="666" height="1.300" fill="#8c8c8c"/><rect x="350" y="815" width="666" height="33" fill="#c8c9c8"/><path d="M351.41 351.2V356.8M353.72 351.6V356.4M356.03 350.4V357.6M358.34 351.1V356.9M360.65 351.9V356.1M362.96 350.7V357.3M365.27 351.9V356.1M367.58 351.8V356.2M369.89 350.9V357.1M372.21 349.9V358.1M374.52 351.7V356.3M376.83 349.6V358.4M379.14 350.6V357.4M381.45 351.0V357.0M383.76 349.6V358.4M386.07 351.3V356.7M388.38 351.6V356.4M390.69 351.7V356.3M393.00 351.2V356.8M395.31 350.5V357.5M397.62 350.4V357.6M399.93 351.1V356.9M402.24 350.6V357.4M404.55 351.5V356.5M406.86 350.3V357.7M409.17 350.9V357.1M411.48 351.2V356.8M413.80 351.3V356.7M416.11 350.0V358.0M418.42 350.3V357.7M420.73 351.4V356.6M423.04 349.8V358.2M425.35 350.2V357.8M427.66 351.3V356.7M429.97 349.5V358.5M432.28 350.1V357.9M434.59 351.6V356.4M436.90 350.8V357.2M439.21 351.9V356.1M441.52 350.6V357.4M443.83 349.8V358.2M446.14 351.2V356.8M448.45 350.3V357.7M450.76 350.9V357.1M453.07 349.9V358.1M455.39 349.6V358.4M457.70 350.8V357.2M460.01 350.2V357.8M462.32 350.4V357.6M464.63 349.5V358.5M466.94 349.9V358.1M469.25 350.3V357.7M471.56 351.9V356.1M473.87 350.8V357.2M476.18 351.6V356.4M478.49 350.1V357.9M480.80 351.7V356.3M483.11 351.4V356.6M485.42 351.0V357.0M487.73 350.9V357.1M490.04 350.6V357.4M492.35 349.8V358.2M494.66 350.0V358.0M496.98 351.0V357.0M499.29 351.1V356.9M501.60 349.8V358.2M503.91 349.6V358.4M506.22 351.4V356.6M508.53 351.4V356.6M510.84 350.8V357.2M513.15 350.5V357.5M515.46 351.0V357.0M517.77 351.1V356.9M520.08 350.6V357.4M522.39 349.6V358.4M524.70 350.5V357.5M527.01 350.3V357.7M529.32 351.9V356.1M531.63 349.8V358.2M533.94 350.0V358.0M536.25 351.0V357.0M538.57 351.0V357.0M540.88 351.7V356.3M543.19 351.8V356.2M545.50 351.5V356.5M547.81 351.6V356.4M550.12 351.1V356.9M552.43 351.6V356.4M554.74 351.7V356.3M557.05 351.1V356.9M559.36 351.9V356.1M561.67 351.6V356.4M563.98 351.4V356.6M566.29 351.1V356.9M568.60 351.1V356.9M570.91 349.5V358.5M573.22 350.8V357.2M575.53 350.8V357.2M577.84 351.8V356.2M580.16 351.3V356.7M582.47 349.9V358.1M584.78 351.6V356.4M587.09 351.9V356.1M589.40 351.6V356.4M591.71 350.6V357.4M594.02 351.9V356.1M596.33 350.7V357.3M598.64 350.3V357.7M600.95 351.3V356.7M603.26 351.1V356.9M605.57 351.6V356.4M607.88 350.1V357.9M610.19 351.2V356.8M612.50 351.4V356.6M614.81 350.0V358.0M617.12 350.0V358.0M619.43 350.0V358.0M621.74 350.2V357.8M624.06 351.4V356.6M626.37 351.9V356.1M628.68 351.9V356.1M630.99 351.3V356.7M633.30 351.4V356.6M635.61 350.9V357.1M637.92 349.7V358.3M640.23 349.5V358.5M642.54 349.6V358.4M644.85 351.4V356.6M647.16 351.5V356.5M649.47 351.5V356.5M651.78 350.4V357.6M654.09 350.8V357.2M656.40 350.4V357.6M658.71 350.0V358.0M661.02 351.8V356.2M663.33 350.0V358.0M665.65 350.1V357.9M667.96 350.8V357.2M670.27 351.6V356.4M672.58 350.0V358.0M674.89 349.6V358.4M677.20 351.0V357.0M679.51 351.0V357.0M681.82 351.6V356.4M684.13 351.7V356.3M686.44 351.6V356.4M688.75 349.7V358.3M691.06 349.9V358.1M693.37 349.5V358.5M695.68 350.4V357.6M697.99 351.1V356.9M700.30 352.0V356.0M702.61 349.6V358.4M704.92 350.4V357.6M707.24 350.7V357.3M709.55 349.8V358.2M711.86 349.9V358.1M714.17 351.5V356.5M716.48 351.4V356.6M718.79 350.5V357.5M721.10 351.4V356.6M723.41 351.0V357.0M725.72 351.7V356.3M728.03 350.9V357.1M730.34 350.5V357.5M732.65 349.7V358.3M734.96 350.9V357.1M737.27 350.7V357.3M739.58 350.7V357.3M741.89 352.0V356.0M744.20 350.9V357.1M746.51 350.0V358.0M748.83 351.6V356.4M751.14 350.8V357.2M753.45 350.2V357.8M755.76 350.7V357.3M758.07 350.6V357.4M760.38 350.0V358.0M762.69 351.7V356.3M765.00 351.3V356.7M767.31 350.1V357.9M769.62 350.7V357.3M771.93 350.6V357.4M774.24 350.9V357.1M776.55 350.5V357.5M778.86 350.7V357.3M781.17 350.7V357.3M783.48 350.7V357.3M785.79 350.8V357.2M788.10 349.6V358.4M790.42 350.3V357.7M792.73 351.4V356.6M795.04 350.6V357.4M797.35 349.6V358.4M799.66 349.9V358.1M801.97 350.9V357.1M804.28 351.8V356.2M806.59 351.4V356.6M808.90 351.8V356.2M811.21 349.8V358.2M813.52 351.6V356.4M815.83 350.2V357.8M818.14 350.3V357.7M820.45 349.6V358.4M822.76 351.5V356.5M825.07 349.6V358.4M827.38 351.0V357.0M829.69 349.9V358.1M832.00 351.6V356.4M834.32 350.9V357.1M836.63 350.7V357.3M838.94 351.2V356.8M841.25 350.2V357.8M843.56 352.0V356.0M845.87 350.6V357.4M848.18 351.2V356.8M850.49 350.4V357.6M852.80 350.7V357.3M855.11 351.8V356.2M857.42 349.6V358.4M859.73 351.7V356.3M862.04 351.3V356.7M864.35 351.9V356.1M866.66 351.7V356.3M868.97 350.9V357.1M871.28 349.7V358.3M873.59 350.0V358.0M875.91 349.7V358.3M878.22 350.6V357.4M880.53 350.2V357.8M882.84 351.8V356.2M885.15 350.9V357.1M887.46 351.8V356.2M889.77 349.7V358.3M892.08 350.4V357.6M894.39 349.9V358.1M896.70 351.8V356.2M899.01 349.8V358.2M901.32 350.9V357.1M903.63 349.7V358.3M905.94 351.3V356.7M908.25 351.7V356.3M910.56 350.7V357.3M912.87 351.6V356.4M915.18 351.9V356.1M917.50 351.5V356.5M919.81 351.2V356.8M922.12 351.3V356.7M924.43 350.7V357.3M926.74 351.6V356.4M929.05 351.1V356.9M931.36 352.0V356.0M933.67 350.2V357.8M935.98 350.6V357.4M938.29 351.5V356.5M940.60 351.7V356.3M942.91 350.0V358.0M945.22 350.9V357.1M947.53 350.8V357.2M949.84 350.7V357.3M952.15 350.3V357.7M954.46 349.5V358.5M956.77 351.1V356.9M959.09 350.4V357.6M961.40 351.0V357.0M963.71 351.1V356.9M966.02 351.9V356.1M968.33 350.1V357.9M970.64 351.4V356.6M972.95 351.6V356.4M975.26 351.8V356.2M977.57 350.3V357.7M979.88 351.3V356.7M982.19 351.4V356.6M984.50 351.3V356.7M986.81 350.9V357.1M989.12 351.3V356.7M991.43 349.6V358.4M993.74 349.6V358.4M996.05 349.6V358.4M998.36 351.2V356.8M1000.68 351.1V356.9M1002.99 352.0V356.0M1005.30 350.7V357.3M1007.61 351.5V356.5M1009.92 350.7V357.3M1012.23 352.0V356.0M1014.54 351.0V357.0" stroke="#909090" stroke-width="0.8" opacity="0.6" fill="none"/><path d="M358.34 339.4V372.6M367.58 336.3V368.6M376.83 338.1V373.3M386.07 339.6V375.3M395.31 333.1V369.5M404.55 339.5V368.5M413.80 335.0V371.9M423.04 335.1V372.5M432.28 339.0V371.6M441.52 334.3V374.5M450.76 334.9V372.9M460.01 334.4V368.5M469.25 337.6V371.3M478.49 339.0V368.5M487.73 332.6V368.7M496.98 332.7V370.4M506.22 338.7V369.5M515.46 337.8V368.0M524.70 334.1V372.4M533.94 333.4V375.4M543.19 334.6V368.5M552.43 339.6V368.0M561.67 332.6V373.2M570.91 339.0V375.2M580.16 339.1V370.9M589.40 331.9V372.5M598.64 331.7V375.3M607.88 333.4V372.5M617.12 331.6V375.2M626.37 335.6V371.0M635.61 334.1V376.1M644.85 336.9V369.9M654.09 332.3V375.1M663.33 334.4V375.7M672.58 333.3V370.8M681.82 332.0V374.2M691.06 333.1V369.2M700.30 335.3V369.1M709.55 332.1V371.7M718.79 337.5V370.0M728.03 332.3V371.0M737.27 332.2V372.3M746.51 338.4V368.0M755.76 335.3V370.8M765.00 335.2V370.1M774.24 333.5V375.8M783.48 334.1V371.8M792.73 332.5V376.0M801.97 338.8V369.0M811.21 334.3V374.7M820.45 338.8V375.5M829.69 335.9V376.4M838.94 337.1V369.7M848.18 336.3V368.2M857.42 331.6V374.7M866.66 333.4V370.3M875.91 337.8V369.3M885.15 339.5V373.8M894.39 333.2V368.7M903.63 337.1V372.7M912.87 338.0V368.9M922.12 337.4V374.5M931.36 339.8V370.1M940.60 336.0V375.9M949.84 332.9V371.3M959.09 332.9V374.0M968.33 338.9V368.6M977.57 332.8V375.4M986.81 336.1V369.3M996.05 335.3V370.1M1005.30 336.8V372.0M1014.54 337.8V368.8" stroke="#8e8e8e" stroke-width="0.7" opacity="0.8" fill="none"/><path d="M366,437 366.5,432.8 367,428.3 367.5,426 368,422.9 368.5,426.1 369,427.8 369.5,425.9 370,424.3 370.5,426 371,427.8 371.5,425.9 372,423.8 372.5,426.1 373,427.7 373.5,424.8 374,422.2 374.5,424.9 375,428 375.5,426.4 376,421 376.5,425.8 377,427.3 377.5,427.6 378,423.8 378.5,418.9 379,423.5 379.5,423.5 380,426.5 380.5,427.4 381,426.6 381.5,425.8 382,424.9 382.5,425.9 383,426 383.5,422 384,417.7 384.5,422.4 385,426.7 385.5,424.8 386,420.5 386.5,424.2 387,427.8 387.5,427.9 388,423.6 388.5,418.8 389,423.7 389.5,428 390,427.4 390.5,426.9 391,426 391.5,426 392,424.9 392.5,425.4 393,424.1 393.5,426.5 394,427.3 394.5,426.8 395,427.6 395.5,427 396,427 396.5,426.8 397,425.3 397.5,427.2 398,428.4 398.5,428.5 399,425.6 399.5,419.2 400,425.8 400.5,427.9 401,428 401.5,424.6 402,422.2 402.5,425.2 403,426 403.5,423.1 404,425.7 404.5,428.1 405,426.6 405.5,424.7 406,426.7 406.5,428.6 407,426 407.5,423.1 408,423.9 408.5,420.3 409,424.8 409.5,427.9 410,426.7 410.5,427.3 411,426.7 411.5,426.7 412,427 412.5,422.3 413,417.5 413.5,422.1 414,426.5 414.5,426.1 415,423.9 415.5,421.2 416,415.2 416.5,421.4 417,427.7 417.5,426.9 418,426.7 418.5,426.4 419,427.3 419.5,427.4 420,422.7 420.5,414.6 421,422.9 421.5,428.1 422,426 422.5,423.8 423,421.6 423.5,417.4 424,422.6 424.5,427.4 425,427.8 425.5,421.3 426,415.6 426.5,420.1 427,416.8 427.5,422.1 428,418.3 428.5,424.1 429,427.2 429.5,426.6 430,426.7 430.5,424.4 431,419.2 431.5,423.9 432,420 432.5,425.9 433,423.4 433.5,419 434,423.2 434.5,424.9 435,426.2 435.5,428.1 436,426.2 436.5,424.8 437,426.1 437.5,426.7 438,426.7 438.5,426.7 439,421.4 439.5,426.8 440,427.3 440.5,429.1 441,428.2 441.5,430.4 442,432.4 442.5,430.3 443,427.7 443.5,431.3 444,431.7 444.5,432 445,427.2 445.5,416.9 446,426.8 446.5,433.4 447,432.3 447.5,432.6 448,431.5 448.5,432.5 449,432.8 449.5,430.6 450,423.3 450.5,430.1 451,431.9 451.5,429.5 452,431.9 452.5,431.4 453,430.1 453.5,431.5 454,432.5 454.5,427 455,421.5 455.5,427 456,431.5 456.5,433.5 457,430 457.5,422 458,425.8 458.5,419.5 459,428.5 459.5,431.5 460,430.5 460.5,430.9 461,430.5 461.5,431.7 462,431.8 462.5,431.2 463,431.6 463.5,425.7 464,416.1 464.5,425.2 465,431.3 465.5,431.7 466,431.9 466.5,431.1 467,431.3 467.5,430.9 468,430 468.5,430.9 469,431.6 469.5,432.8 470,426.8 470.5,418.8 471,427.9 471.5,433.2 472,431.9 472.5,430.3 473,422.4 473.5,430.1 474,432.4 474.5,430.8 475,428.7 475.5,430.5 476,432.4 476.5,431.7 477,432.1 477.5,428.4 478,423 478.5,428 479,431.7 479.5,429.2 480,431.9 480.5,432.4 481,432.2 481.5,431.1 482,431.8 482.5,432.8 483,428 483.5,423.1 484,427.3 484.5,426.7 485,429.1 485.5,429.2 486,423.1 486.5,430 487,433.4 487.5,432.5 488,429.2 488.5,425.8 489,428.9 489.5,429.4 490,427.1 490.5,429.3 491,432.6 491.5,431.7 492,431.8 492.5,431.9 493,431.7 493.5,432.8 494,433.1 494.5,427.8 495,418.2 495.5,428.3 496,431.9 496.5,432.2 497,433.4 497.5,431.7 498,430 498.5,429.6 499,419.7 499.5,430.3 500,432.3 500.5,432 501,428.3 501.5,424.2 502,428.7 502.5,432.1 503,428.7 503.5,423 504,428.4 504.5,432.5 505,428.4 505.5,431.6 506,431.8 506.5,430.8 507,426.5 507.5,421.1 508,426.8 508.5,429.8 509,427.8 509.5,430.1 510,431.2 510.5,431.2 511,430.8 511.5,428.2 512,431.1 512.5,432.8 513,429.3 513.5,416.3 514,426.8 514.5,422.4 515,429 515.5,428.7 516,423.7 516.5,427.9 517,431.3 517.5,431.8 518,428.9 518.5,417.2 519,428.8 519.5,431.2 520,427.9 520.5,415.8 521,424.6 521.5,427.5 522,428.6 522.5,426.4 523,420.2 523.5,425.7 524,427.2 524.5,424.4 525,426 525.5,425.4 526,417.2 526.5,406 527,416.1 527.5,428.2 528,430.1 528.5,430.5 529,424.9 529.5,430.5 530,419.1 530.5,406 531,418.2 531.5,429.9 532,431.8 532.5,424.4 533,406.7 533.5,424.5 534,430.1 534.5,430.4 535,426.3 535.5,423.3 536,425.7 536.5,429.6 537,430.4 537.5,428.3 538,426.6 538.5,428.7 539,431 539.5,429.4 540,424.3 540.5,420.1 541,423.6 541.5,425.9 542,430.4 542.5,422.2 543,410.5 543.5,422.3 544,430.8 544.5,425.4 545,412.7 545.5,425.1 546,429.6 546.5,428.7 547,430.2 547.5,429.6 548,431.7 548.5,422.9 549,414.8 549.5,422.4 550,428.8 550.5,428.8 551,424.6 551.5,428.9 552,427.3 552.5,427.2 553,428 553.5,429.5 554,426.9 554.5,423.7 555,426.9 555.5,424.7 556,420.5 556.5,421.9 557,408.3 557.5,426.5 558,430.3 558.5,430.4 559,428.1 559.5,424.7 560,428 560.5,428.6 561,428.9 561.5,429.3 562,431 562.5,425.1 563,415.6 563.5,417 564,406.2 564.5,418.8 565,429.9 565.5,428.4 566,430.3 566.5,429.6 567,430.2 567.5,425.2 568,421.4 568.5,426.6 569,428.1 569.5,421.9 570,426.5 570.5,428.9 571,426.4 571.5,428 572,424.1 572.5,426.3 573,425.4 573.5,427.4 574,420.5 574.5,411.8 575,419.8 575.5,427.4 576,427.5 576.5,429.2 577,428.9 577.5,428 578,427.9 578.5,427.3 579,425.5 579.5,421.3 580,427.3 580.5,422.2 581,405.2 581.5,423.9 582,429.1 582.5,422.3 583,414.8 583.5,417.3 584,405.1 584.5,422.1 585,430.1 585.5,429.3 586,427.7 586.5,425.9 587,427.6 587.5,423.9 588,414.6 588.5,423.7 589,420.5 589.5,414.5 590,421.5 590.5,428.5 591,427.4 591.5,426.6 592,424.8 592.5,418 593,425.4 593.5,429.3 594,424.7 594.5,418 595,425 595.5,430.1 596,430.4 596.5,424.8 597,418.5 597.5,424.6 598,427.6 598.5,429.4 599,429.2 599.5,429 600,430.8 600.5,430.2 601,426.3 601.5,421.2 602,422.5 602.5,417.8 603,424.4 603.5,429 604,431.3 604.5,428.6 605,422.8 605.5,429.6 606,431.6 606.5,432.2 607,429.4 607.5,427.6 608,429.9 608.5,431.6 609,428.7 609.5,428.3 610,426.6 610.5,427.1 611,426.3 611.5,429.7 612,431.5 612.5,428.7 613,427.4 613.5,429 614,427.9 614.5,428 615,423.3 615.5,428.5 616,429.5 616.5,428.4 617,429.1 617.5,431.1 618,429.5 618.5,426.4 619,420 619.5,426.1 620,430.1 620.5,428.6 621,429.2 621.5,426.1 622,427.5 622.5,427.2 623,429.1 623.5,425.6 624,422.5 624.5,426.5 625,430.5 625.5,430.2 626,429.1 626.5,429.3 627,429.1 627.5,429.1 628,425.5 628.5,414.8 629,425.9 629.5,431.7 630,433.8 630.5,432.5 631,429.1 631.5,432.8 632,434 632.5,430.8 633,434 633.5,434.7 634,431.5 634.5,427.8 635,430.4 635.5,429.2 636,428.2 636.5,422.1 637,429.9 637.5,434.5 638,434.1 638.5,433.4 639,432.5 639.5,433.4 640,430.8 640.5,426.8 641,430.5 641.5,432.5 642,432.5 642.5,430.5 643,432.4 643.5,434.9 644,434.5 644.5,432.5 645,428.7 645.5,431.9 646,430.4 646.5,433.4 647,428.7 647.5,422.1 648,428.6 648.5,434 649,429.7 649.5,425.4 650,429.8 650.5,433 651,431.7 651.5,432.8 652,433.9 652.5,434.1 653,431.6 653.5,428.9 654,431.9 654.5,433.8 655,433.8 655.5,432.2 656,434.3 656.5,434.5 657,433.9 657.5,433.8 658,433.5 658.5,434 659,434.5 659.5,433.7 660,433.2 660.5,432.7 661,431.1 661.5,432.7 662,434.3 662.5,433.9 663,432.3 663.5,427.6 664,421.6 664.5,426.4 665,429.6 665.5,428.6 666,426.7 666.5,428.3 667,431 667.5,429 668,430.4 668.5,429.4 669,429.5 669.5,428.8 670,427.8 670.5,429.5 671,430.8 671.5,429 672,428.3 672.5,429.3 673,430.8 673.5,429.5 674,429.2 674.5,423.3 675,428.4 675.5,429.8 676,424.5 676.5,429.7 677,430.7 677.5,430 678,427.8 678.5,430 679,430.4 679.5,423.8 680,416.9 680.5,423.1 681,428.2 681.5,428.5 682,429.6 682.5,429.4 683,424 683.5,412.1 684,423.9 684.5,430.6 685,430.9 685.5,429.5 686,430.9 686.5,429.9 687,429.5 687.5,428.1 688,430.1 688.5,429.6 689,428.8 689.5,430.1 690,431.6 690.5,429.3 691,421.5 691.5,429 692,429 692.5,423.9 693,429.9 693.5,428.7 694,422.7 694.5,428.8 695,426.7 695.5,412 696,427.2 696.5,425.4 697,421.3 697.5,425 698,429.6 698.5,429.8 699,430 699.5,428.7 700,427 700.5,416.9 701,427.1 701.5,430.3 702,429 702.5,428.7 703,429.5 703.5,429.9 704,429.6 704.5,428.8 705,430.2 705.5,431.6 706,425.1 706.5,418.3 707,425 707.5,428.8 708,426.3 708.5,427.7 709,426.6 709.5,428 710,429.4 710.5,424.3 711,413.4 711.5,423.4 712,430.2 712.5,424.9 713,420.2 713.5,422.9 714,417.8 714.5,426.5 715,426.5 715.5,415.7 716,423.3 716.5,419.1 717,425.6 717.5,428.7 718,428.7 718.5,422.6 719,415.5 719.5,421.9 720,429.5 720.5,420.1 721,412.5 721.5,421.4 722,429.9 722.5,428.6 723,428.2 723.5,426.9 724,429.1 724.5,428.3 725,428.5 725.5,429.1 726,428.7 726.5,422.1 727,414 727.5,420.7 728,427.7 728.5,428.4 729,420.8 729.5,411.8 730,420.4 730.5,428 731,420.5 731.5,427.6 732,428.8 732.5,427.8 733,425.1 733.5,427 734,430.6 734.5,431.2 735,424.3 735.5,417.7 736,424.5 736.5,429.9 737,426.4 737.5,421.9 738,427.4 738.5,428.8 739,425.1 739.5,428 740,429.2 740.5,426.1 741,427.1 741.5,418.7 742,428.7 742.5,428.8 743,429.7 743.5,427.8 744,429 744.5,428.9 745,429.6 745.5,428 746,425.9 746.5,429.1 747,428.7 747.5,430.8 748,424.7 748.5,419.4 749,423 749.5,420.2 750,425.8 750.5,425.2 751,414.7 751.5,424.9 752,421.4 752.5,412.7 753,421.2 753.5,421.5 754,425.7 754.5,421.5 755,426.3 755.5,423.1 756,416.9 756.5,423.1 757,428.9 757.5,429.3 758,427.1 758.5,424.3 759,427.6 759.5,429.8 760,426.5 760.5,428.7 761,430.4 761.5,426.1 762,422.4 762.5,426.5 763,429 763.5,429.4 764,425 764.5,420.8 765,425.4 765.5,430.1 766,422.6 766.5,416.3 767,423.2 767.5,430.3 768,429.4 768.5,430.4 769,430 769.5,429.7 770,427.1 770.5,421.5 771,426.1 771.5,430.7 772,426.5 772.5,417.6 773,426.6 773.5,430.1 774,424.3 774.5,427.9 775,425.2 775.5,428.5 776,426.5 776.5,423.6 777,426.1 777.5,426.2 778,420.6 778.5,425.4 779,430.1 779.5,429.2 780,426.2 780.5,430.7 781,431.1 781.5,429.7 782,427.1 782.5,424.9 783,427.2 783.5,432.3 784,431.9 784.5,431 785,432.1 785.5,430.3 786,424.8 786.5,430.7 787,430.9 787.5,426.3 788,430.8 788.5,430.7 789,431.9 789.5,433.2 790,430.2 790.5,427.2 791,430 791.5,431.9 792,430.5 792.5,428.5 793,423.4 793.5,428.8 794,430.9 794.5,428.7 795,431.6 795.5,431.7 796,432.3 796.5,429.7 797,427.5 797.5,430.6 798,429.9 798.5,424.6 799,429.6 799.5,429.1 800,426.3 800.5,428.9 801,428.3 801.5,430.1 802,432.5 802.5,430 803,428.6 803.5,430.6 804,431.1 804.5,430.4 805,429.6 805.5,427.5 806,429.7 806.5,429.9 807,426 807.5,429.6 808,431.7 808.5,428.4 809,431.4 809.5,431.1 810,428.7 810.5,431.3 811,431 811.5,428.8 812,431.1 812.5,430.8 813,432.6 813.5,432.4 814,431.7 814.5,432.5 815,432.4 815.5,431.9 816,429.4 816.5,421.3 817,430.1 817.5,433.2 818,433 818.5,431.1 819,428.5 819.5,430.9 820,432.5 820.5,431.3 821,432.3 821.5,432.6 822,432.5 822.5,432.7 823,432.6 823.5,433.2 824,434.2 824.5,433.7 825,431.4 825.5,433.5 826,435.1 826.5,434.6 827,434.1 827.5,434.4 828,430.9 828.5,426.3 829,422.2 829.5,425.3 830,425.6 830.5,423.9 831,412 831.5,426.2 832,423.3 832.5,413.2 833,421.5 833.5,419.1 834,427.1 834.5,432.3 835,431 835.5,424.1 836,417.2 836.5,424 837,431.4 837.5,432.3 838,425.8 838.5,406.5 839,424.8 839.5,424.8 840,418.3 840.5,425.8 841,433.2 841.5,431.9 842,431.4 842.5,432.4 843,430.6 843.5,423.8 844,415.8 844.5,423.1 845,431 845.5,432 846,428.8 846.5,419.9 847,429 847.5,432.5 848,431.4 848.5,422.1 849,413.7 849.5,422 850,430 850.5,428.8 851,425 851.5,421.1 852,414.4 852.5,416.9 853,410.7 853.5,421.4 854,431.3 854.5,421.6 855,412.6 855.5,420.7 856,418.7 856.5,428.8 857,431.5 857.5,430.1 858,426.7 858.5,423.1 859,427.6 859.5,432 860,431 860.5,429.8 861,429.7 861.5,430.8 862,428.6 862.5,427.1 863,429.4 863.5,431.1 864,431.8 864.5,428 865,423.9 865.5,428.1 866,425.6 866.5,415.3 867,424.3 867.5,419.2 868,429.2 868.5,432 869,430.6 869.5,427.1 870,420.9 870.5,426.9 871,429.8 871.5,426.9 872,422.8 872.5,412.7 873,423.1 873.5,423.5 874,416.9 874.5,422.8 875,428.8 875.5,429.9 876,430.1 876.5,428.6 877,426.4 877.5,428.3 878,430.7 878.5,430.2 879,428.7 879.5,426.7 880,427.6 880.5,429.1 881,421.5 881.5,410.7 882,423.1 882.5,430.3 883,431.4 883.5,428.8 884,424.9 884.5,428.2 885,431.8 885.5,425.3 886,419.1 886.5,425.7 887,431.7 887.5,431 888,424.3 888.5,416.2 889,423.4 889.5,429.4 890,428.7 890.5,429.9 891,427.7 891.5,424.3 892,421 892.5,415.8 893,421 893.5,419.5 894,426.5 894.5,429.7 895,430.1 895.5,430.5 896,429.8 896.5,426.9 897,420.1 897.5,427 898,431.6 898.5,432.3 899,426.5 899.5,420.1 900,426.7 900.5,427.8 901,421.6 901.5,427.1 902,429.8 902.5,430.8 903,428.7 903.5,429.7 904,429.5 904.5,428.7 905,429.3 905.5,428.5 906,429.4 906.5,428.1 907,427.9 907.5,426.9 908,412 908.5,424.6 909,423.1 909.5,424.6 910,423.5 910.5,426.6 911,429.2 911.5,430.8 912,432.2 912.5,432.9 913,433 913.5,432.2 914,433.8 914.5,435.1 915,435.9 915.5,436.3 916,436.3 916.5,436.4 917,436.5 917.5,436.2 918,435.5 918.5,433.1 919,430.3 919.5,427.1 920,423.9 920.5,427.9 921,431.1 921.5,429.2 922,425.9 922.5,428.8 923,429.7 923.5,423 924,426.8 924.5,425.2 925,428.2 925.5,430.5 926,429.3 926.5,426.3 927,428.5 927.5,427.9 928,429.8 928.5,430.6 929,431.4 929.5,430.7 930,429.6 930.5,430.4 931,427.8 931.5,424.6 932,427.5 932.5,428.7 933,426 933.5,428.5 934,430 934.5,430.5 935,430.7 935.5,428.7 936,429.4 936.5,428.9 937,429.8 937.5,430.8 938,430.1 938.5,430.4 939,432.5 939.5,431.6 940,430 940.5,431.2 941,431.5 941.5,430.4 942,429.4 942.5,425 943,429.9 943.5,431 944,431.7 944.5,431.9 945,430.9 945.5,428.7 946,423.4 946.5,428.4 947,430.2 947.5,430.8 948,429.5 948.5,429 949,430.5 949.5,428.6 950,426.7 950.5,429.3 951,430 951.5,426.9 952,423.9 952.5,427.8 953,431.2 953.5,431.2 954,430.1 954.5,431.5 955,432.5 955.5,428.6 956,424.9 956.5,428.6 957,433.1 957.5,432.9 958,431.8 958.5,430.4 959,430.9 959.5,432.4 960,430 960.5,428.1 961,430.1 961.5,428 962,421.4 962.5,429.6 963,431.4 963.5,426.3 964,422.1 964.5,427 965,432 965.5,431.7 966,430.4 966.5,430.6 967,427.8 967.5,431.2 968,433.1 968.5,432.5 969,426.9 969.5,422.4 970,426.6 970.5,430.6 971,426.8 971.5,421.3 972,426.4 972.5,430.9 973,429.6 973.5,428.5 974,429.4 974.5,429.7 975,429 975.5,430.9 976,431.2 976.5,430.9 977,429.8 977.5,431 978,430.4 978.5,427.5 979,423.5 979.5,427.1 980,431.7 980.5,429.4 981,428.3 981.5,430.1 982,430.6 982.5,431.4 983,429.6 983.5,426.6 984,429.7 984.5,430.5 985,428.8 985.5,430 986,430 986.5,429.2 987,429.9 987.5,432.2 988,429.7 988.5,424.9 989,424.9 989.5,421.3 990,425.8 990.5,429 991,428.9 991.5,430.1 992,429.5 992.5,430.3 993,429.9 993.5,430.9 994,428.5 994.5,430.1 995,432 995.5,430.9 996,427.9 996.5,431.2 997,434.2 997.5,433.5 998,434.4 998.5,435.2 999,434.9 999.5,435.4 1000,435.6 1000.5,436 1001,435.9 1001.5,435.7 1002,435.8 1002.5,435.7 1003,435.9 1003.5,436.2 1004,436.2 1004.5,436.3 1005,436.4 1005.5,436.3 1006,436.3 1006.5,436.5 1007,436.5 1007,437.4 1006.5,437.5 1006,437.6 1005.5,437.7 1005,437.6 1004.5,437.8 1004,438 1003.5,437.7 1003,438 1002.5,438.3 1002,438.2 1001.5,438.3 1001,438.2 1000.5,438.3 1000,438.2 999.5,438.6 999,439 998.5,439.2 998,439.8 997.5,440.2 997,439.9 996.5,442.4 996,446.1 995.5,442.8 995,441.6 994.5,443.4 994,445.4 993.5,444.1 993,444.2 992.5,443.9 992,444.4 991.5,443 991,443.2 990.5,443.9 990,448.8 989.5,453.3 989,449.9 988.5,448.7 988,444.5 987.5,443.7 987,443.9 986.5,444.7 986,443.1 985.5,443.4 985,445.5 984.5,443.7 984,444.5 983.5,446.6 983,445 982.5,442.1 982,443.8 981.5,444.2 981,445.9 980.5,445.2 980,444.5 979.5,447.1 979,449.7 978.5,446.9 978,444.5 977.5,444.2 977,444.1 976.5,442.7 976,441 975.5,443.3 975,445 974.5,443 974,442.9 973.5,445.6 973,443.6 972.5,443.1 972,445.8 971.5,451.3 971,446.2 970.5,445 970,447.1 969.5,450.8 969,447.1 968.5,443.7 968,442.6 967.5,444.6 967,446.3 966.5,444.5 966,443.7 965.5,443.4 965,443.4 964.5,445.9 964,450.3 963.5,446 963,442.5 962.5,444.3 962,450.9 961.5,444.2 961,444 960.5,445.6 960,444.9 959.5,444.3 959,442.7 958.5,443.5 958,443.1 957.5,442.8 957,442.4 956.5,444.6 956,447.2 955.5,444 955,441 954.5,443.1 954,443.7 953.5,442.7 953,441.1 952.5,447.7 952,452.1 951.5,446.8 951,442.1 950.5,445.1 950,446.8 949.5,444.8 949,443.4 948.5,443.1 948,444.7 947.5,443.2 947,442.8 946.5,445.6 946,448.9 945.5,444.3 945,443 944.5,442.4 944,442 943.5,441.9 943,442.9 942.5,449.5 942,444.2 941.5,443.6 941,443.1 940.5,443.3 940,443.8 939.5,444.2 939,443.7 938.5,443 938,444 937.5,443.6 937,444.8 936.5,445.7 936,444.4 935.5,445.7 935,442.9 934.5,442.8 934,443.4 933.5,443.3 933,447.5 932.5,442.7 932,445.8 931.5,450.7 931,446.8 930.5,443.7 930,444.7 929.5,443.5 929,443.1 928.5,442.1 928,443.8 927.5,446.8 927,445 926.5,448 926,444.1 925.5,443.3 925,444.7 924.5,447.5 924,445.6 923.5,450.6 923,444.4 922.5,445.6 922,449.5 921.5,445.5 921,443.4 920.5,447.7 920,450.2 919.5,446.5 919,444.1 918.5,440.8 918,438.8 917.5,437.9 917,437.8 916.5,437.7 916,437.7 915.5,438.2 915,438.3 914.5,439.1 914,440.1 913.5,441.6 913,440.7 912.5,440.8 912,440.8 911.5,442.8 911,445.1 910.5,446.2 910,449.8 909.5,448.2 909,449.4 908.5,448 908,462.2 907.5,447.1 907,443.9 906.5,442.2 906,444 905.5,445.2 905,444.2 904.5,442.4 904,443.2 903.5,444.5 903,444 902.5,443.6 902,445.3 901.5,446.8 901,454.9 900.5,447.3 900,449 899.5,455.1 899,448.6 898.5,443.9 898,443.4 897.5,446.9 897,453 896.5,447.4 896,443 895.5,444.4 895,443.9 894.5,443.4 894,446.8 893.5,452.4 893,452.8 892.5,461.9 892,454.3 891.5,450.4 891,446.3 890.5,444.8 890,445.6 889.5,444.1 889,450.8 888.5,461.2 888,450.8 887.5,444.1 887,445.1 886.5,450.3 886,456 885.5,449.9 885,444.2 884.5,447.2 884,451.3 883.5,447.2 883,443.9 882.5,442.7 882,451.3 881.5,462.3 881,451 880.5,442.4 880,444.1 879.5,446.4 879,444.2 878.5,442.4 878,443.3 877.5,446.2 877,449.1 876.5,445.1 876,443.3 875.5,444.6 875,444.7 874.5,449.6 874,455.1 873.5,449.1 873,448.3 872.5,456 872,448.6 871.5,446.1 871,443 870.5,445.8 870,450.9 869.5,447.1 869,442.6 868.5,443.3 868,445.3 867.5,457.7 867,452.5 866.5,462.3 866,450.7 865.5,447.3 865,450.8 864.5,446.2 864,442 863.5,441.9 863,445.6 862.5,447.8 862,445.6 861.5,443.2 861,441.9 860.5,444.3 860,442.9 859.5,442.6 859,446 858.5,449.6 858,446.2 857.5,441.4 857,443.1 856.5,446.6 856,456.3 855.5,453.1 855,460.2 854.5,452.8 854,444 853.5,451.4 853,458.8 852.5,455 852,458.2 851.5,452 851,448 850.5,444 850,443.5 849.5,451.9 849,460.5 848.5,452.5 848,443.7 847.5,442.7 847,446 846.5,454.4 846,446.2 845.5,441.7 845,443.1 844.5,452.7 844,461.8 843.5,452.3 843,444.7 842.5,441.9 842,442.4 841.5,441.7 841,441.6 840.5,450.8 840,461.1 839.5,450.8 839,446.9 838.5,463.4 838,446.4 837.5,441.6 837,441.7 836.5,450 836,457.2 835.5,450 835,442.1 834.5,441.3 834,446.8 833.5,453.9 833,453.1 832.5,465 832,452.7 831.5,447.2 831,462 830.5,447.5 830,445.6 829.5,445 829,447.4 828.5,447.7 828,443.1 827.5,439.4 827,439.6 826.5,439 826,438.9 825.5,439.8 825,442.6 824.5,440.4 824,439.4 823.5,440.7 823,441.4 822.5,441.6 822,440.7 821.5,442 821,441.6 820.5,442.6 820,441.7 819.5,443.4 819,446.4 818.5,443.8 818,442.1 817.5,442 817,445.2 816.5,454.3 816,444.9 815.5,441.6 815,442.1 814.5,441.9 814,442.3 813.5,441.9 813,442.1 812.5,443.6 812,442.7 811.5,444.5 811,442.5 810.5,443.8 810,446 809.5,443.6 809,443.2 808.5,445.8 808,444 807.5,444.7 807,447.4 806.5,444.2 806,444.5 805.5,446.2 805,444.4 804.5,441.3 804,442.8 803.5,442.7 803,445 802.5,442.5 802,440.8 801.5,443.9 801,445.6 800.5,445.3 800,447.9 799.5,445.3 799,444.6 798.5,448.1 798,445.1 797.5,444.9 797,448.4 796.5,444.8 796,440.8 795.5,441.5 795,443.2 794.5,444.9 794,443.7 793.5,444.3 793,448.9 792.5,445.2 792,443.3 791.5,442 791,444.3 790.5,446 790,444.6 789.5,441.6 789,442.9 788.5,443.4 788,443.4 787.5,447.3 787,443.8 786.5,442.9 786,449.1 785.5,443.8 785,442 784.5,443 784,442.3 783.5,442.3 783,446.3 782.5,449 782,446.1 781.5,442.7 781,442.5 780.5,444.1 780,447.9 779.5,442.8 779,441.6 778.5,447.7 778,453.5 777.5,448.8 777,448.3 776.5,451.7 776,448.8 775.5,447.1 775,448.8 774.5,446 774,449.6 773.5,445.9 773,448.7 772.5,457.4 772,447.7 771.5,445.7 771,446.4 770.5,451.5 770,445.8 769.5,444 769,444 768.5,444.1 768,444.2 767.5,443.6 767,449.9 766.5,455.3 766,449.2 765.5,444.3 765,447.7 764.5,451.2 764,448.2 763.5,446.9 763,446.5 762.5,447.5 762,450.1 761.5,447.1 761,444.3 760.5,444.5 760,448.1 759.5,445.5 759,447.5 758.5,450.4 758,447.4 757.5,445.2 757,442.6 756.5,448.6 756,454.4 755.5,449.5 755,446.2 754.5,452.4 754,448.9 753.5,453.5 753,452.4 752.5,457.6 752,451.6 751.5,448.6 751,456.7 750.5,449.1 750,447.4 749.5,452.7 749,451.1 748.5,457.2 748,450 747.5,443.6 747,442.6 746.5,445.7 746,448.5 745.5,445 745,444.6 744.5,444 744,444.2 743.5,446.1 743,445.1 742.5,444.4 742,447.1 741.5,454.5 741,446.7 740.5,447.7 740,445.2 739.5,445.7 739,448.9 738.5,445.6 738,447.7 737.5,455.4 737,448.6 736.5,442.7 736,451.8 735.5,460.9 735,452 734.5,443 734,444 733.5,445.3 733,448.1 732.5,445.2 732,443.3 731.5,445.2 731,455.3 730.5,445.9 730,452.6 729.5,462.4 729,453.3 728.5,445.4 728,443.5 727.5,450.3 727,457 726.5,450.9 726,443.9 725.5,444.6 725,445.2 724.5,444.1 724,444.1 723.5,447.1 723,444.7 722.5,442.3 722,444.8 721.5,451 721,457.8 720.5,450.9 720,442.7 719.5,449.9 719,455.3 718.5,450.1 718,443.4 717.5,444 717,446.9 716.5,454.2 716,451.2 715.5,463 715,449.1 714.5,447.7 714,455.7 713.5,451.1 713,454.1 712.5,449.2 712,445.6 711.5,449.8 711,458.6 710.5,449.7 710,445.8 709.5,446.5 709,447.6 708.5,447.1 708,447.9 707.5,445.6 707,449.8 706.5,455.7 706,450 705.5,445.2 705,443.4 704.5,445.1 704,444.6 703.5,444.8 703,444 702.5,443.3 702,444.7 701.5,443.4 701,446.2 700.5,455.5 700,446 699.5,445.4 699,444.5 698.5,444 698,444.2 697.5,447.4 697,451.8 696.5,447.5 696,447.3 695.5,460.1 695,447.2 694.5,445.7 694,451.4 693.5,446.3 693,446.9 692.5,451.3 692,445.8 691.5,444.2 691,450.4 690.5,444.2 690,442.3 689.5,444.2 689,445.2 688.5,443 688,443.6 687.5,445.8 687,444.4 686.5,441.9 686,443.6 685.5,444.4 685,442.1 684.5,443 684,449 683.5,458.8 683,448.4 682.5,443.3 682,445.7 681.5,445.9 681,445.2 680.5,450.5 680,457.7 679.5,451.3 679,445.8 678.5,444.9 678,446.6 677.5,444.9 677,444.4 676.5,447 676,449.9 675.5,445.5 675,445.9 674.5,452.5 674,446 673.5,444.5 673,443.8 672.5,443.8 672,445.8 671.5,444.6 671,442.3 670.5,443.7 670,446.3 669.5,443.1 669,443.1 668.5,442.7 668,443.7 667.5,442.9 667,441.7 666.5,444.7 666,446.8 665.5,444.5 665,442.1 664.5,446.8 664,450.9 663.5,445.9 663,441.7 662.5,440.7 662,440 661.5,440.9 661,442.7 660.5,441.4 660,440.2 659.5,439.9 659,439.2 658.5,439.9 658,439.5 657.5,440 657,439.6 656.5,438.9 656,440 655.5,441.8 655,440.2 654.5,440.3 654,441.8 653.5,444.7 653,441.9 652.5,439.9 652,439.8 651.5,441.2 651,442.1 650.5,441.2 650,443 649.5,446.4 649,442.7 648.5,439.8 648,445.3 647.5,452.2 647,445.4 646.5,441.3 646,444.8 645.5,442.8 645,446.1 644.5,442.1 644,440.2 643.5,439.8 643,441.3 642.5,443 642,441.7 641.5,441.6 641,444.1 640.5,448.2 640,444 639.5,441.1 639,441.9 638.5,440.9 638,440.2 637.5,440.3 637,444 636.5,449.5 636,445.1 635.5,444.8 635,444 634.5,446.7 634,443.2 633.5,439.7 633,440.7 632.5,443.4 632,440.6 631.5,441.7 631,446 630.5,441.6 630,439.5 629.5,442.9 629,446.2 628.5,455.2 628,445.7 627.5,445.6 627,444.5 626.5,444.8 626,445.1 625.5,444.2 625,442.3 624.5,446.9 624,451.4 623.5,447.8 623,445.6 622.5,447.7 622,446.6 621.5,449.6 621,444.1 620.5,442.5 620,444.2 619.5,446.7 619,454.3 618.5,447.6 618,442.6 617.5,444.1 617,445.5 616.5,445.5 616,444.3 615.5,446.3 615,451.5 614.5,447.1 614,446.9 613.5,446.1 613,446.8 612.5,445 612,442.8 611.5,445.4 611,448.8 610.5,445.5 610,447.3 609.5,445.1 609,443 608.5,443.8 608,444.1 607.5,445.9 607,444.1 606.5,442.9 606,442.3 605.5,445 605,450.3 604.5,445 604,445.4 603.5,444.1 603,450 602.5,457.6 602,452.1 601.5,451.2 601,446.6 600.5,443.9 600,443.3 599.5,444.7 599,445.3 598.5,444.4 598,446.7 597.5,448.6 597,453.5 596.5,449.6 596,443.7 595.5,443.1 595,448.5 594.5,453.8 594,447.9 593.5,442.5 593,445.9 592.5,455.2 592,447.9 591.5,448.2 591,446.4 590.5,446.4 590,451.1 589.5,458 589,451.2 588.5,451.5 588,462 587.5,451.4 587,446.6 586.5,448.3 586,446.5 585.5,444.9 585,445.9 584.5,450.4 584,466.2 583.5,455.4 583,459.7 582.5,451.9 582,445.3 581.5,451.5 581,464.3 580.5,451.8 580,448.9 579.5,452.5 579,447.5 578.5,444.7 578,446.3 577.5,444.6 577,443.4 576.5,444.3 576,445.3 575.5,444.3 575,456.5 574.5,467.3 574,456.6 573.5,446.8 573,448.5 572.5,448 572,450.7 571.5,445.8 571,447.8 570.5,444.4 570,447 569.5,451 569,447.3 568.5,449 568,451 567.5,447.1 567,445.8 566.5,445.2 566,443.3 565.5,445.9 565,443.8 564.5,457 564,470.4 563.5,457.9 563,456 562.5,447.6 562,445.8 561.5,443 561,445.1 560.5,442.9 560,446.1 559.5,449.2 559,445.3 558.5,443.1 558,443.2 557.5,448.5 557,470.1 556.5,452 556,452.7 555.5,448.5 555,444.5 554.5,449.1 554,445.8 553.5,446.4 553,445.8 552.5,447.1 552,445.9 551.5,447 551,449.5 550.5,444.8 550,446.5 549.5,451.9 549,459.6 548.5,451.7 548,445 547.5,444.9 547,444.2 546.5,445.2 546,443.3 545.5,449.9 545,461.4 544.5,450.8 544,444.6 543.5,451.6 543,458.5 542.5,451.1 542,446.9 541.5,448.9 541,449.4 540.5,453.2 540,448.8 539.5,444.9 539,444.5 538.5,445.5 538,447.5 537.5,444.9 537,446.2 536.5,446.3 536,446.8 535.5,450.1 535,446.3 534.5,446.4 534,445.9 533.5,449.5 533,465.2 532.5,450 532,445.2 531.5,443.4 531,453.3 530.5,463.4 530,454.1 529.5,445.8 529,449.4 528.5,443.2 528,442.5 527.5,444.7 527,457.3 526.5,468.7 526,457.4 525.5,447 525,448 524.5,450.4 524,448.2 523.5,449.1 523,452.3 522.5,447.6 522,444.7 521.5,446.7 521,449.5 520.5,460.9 520,446.5 519.5,441 519,444.3 518.5,456.2 518,444.3 517.5,441.5 517,441.4 516.5,446.3 516,451.2 515.5,445.8 515,445.3 514.5,451.3 514,447.6 513.5,453.4 513,444.9 512.5,441.6 512,443.4 511.5,446.6 511,443 510.5,442.9 510,442.1 509.5,444.6 509,448 508.5,445.3 508,446.5 507.5,451.4 507,446.4 506.5,440.7 506,441.4 505.5,443.2 505,447 504.5,442.5 504,445.6 503.5,450.9 503,445.2 502.5,441.6 502,444.6 501.5,448.9 501,444.7 500.5,440.8 500,440.2 499.5,442.5 499,454.4 498.5,443.9 498,443.5 497.5,442.4 497,441.6 496.5,442 496,442.1 495.5,446.8 495,457.2 494.5,446.8 494,440.8 493.5,442.1 493,442.4 492.5,441.9 492,442.3 491.5,441.4 491,442.1 490.5,444.3 490,447 489.5,444.9 489,445.5 488.5,448.7 488,445.5 487.5,441.7 487,441.7 486.5,442.9 486,450.2 485.5,443.1 485,444.3 484.5,447.9 484,446.6 483.5,449.6 483,446 482.5,443.5 482,442.8 481.5,443 481,443.3 480.5,441.6 480,443 479.5,444.3 479,442.4 478.5,444.8 478,449.7 477.5,445 477,441.3 476.5,442.3 476,442.3 475.5,444.4 475,446.7 474.5,444.9 474,442.4 473.5,445.3 473,451.1 472.5,445.2 472,442.7 471.5,443.4 471,448 470.5,456.8 470,447.6 469.5,442.8 469,443.3 468.5,443.4 468,444.9 467.5,443.2 467,443 466.5,443.1 466,442.9 465.5,442.4 465,442.9 464.5,448.8 464,457.3 463.5,448.1 463,442.9 462.5,442.7 462,442.6 461.5,442.9 461,443.8 460.5,443 460,443.7 459.5,441.4 459,444.8 458.5,454 458,446.7 457.5,449.5 457,443.2 456.5,441.6 456,441.9 455.5,446.4 455,451.7 454.5,446.5 454,441.1 453.5,442.2 453,443.6 452.5,441.9 452,443.2 451.5,445.1 451,443.6 450.5,445 450,450.3 449.5,443.9 449,441.7 448.5,441.9 448,442.4 447.5,442.2 447,441.4 446.5,441 446,446.6 445.5,458 445,446.9 444.5,440.9 444,441.6 443.5,443 443,446.5 442.5,443.1 442,441.4 441.5,445 441,446.9 440.5,445.6 440,447.2 439.5,448.2 439,454.8 438.5,447.7 438,446 437.5,445.9 437,447.3 436.5,448.6 436,447.6 435.5,446.1 435,447.1 434.5,448.8 434,449.3 433.5,452.7 433,449.2 432.5,447.7 432,454.5 431.5,450.7 431,457.8 430.5,450.3 430,447 429.5,447.5 429,446.6 428.5,449 428,453.9 427.5,451.3 427,456.8 426.5,453.9 426,457.6 425.5,452.5 425,446.3 424.5,446.3 424,451.4 423.5,455.6 423,452.1 422.5,450.1 422,448 421.5,446.9 421,451.6 420.5,459 420,451.5 419.5,446.5 419,446.9 418.5,447.5 418,446.4 417.5,446.5 417,445.6 416.5,451.6 416,458.8 415.5,452.9 415,450.7 414.5,447.9 414,446.8 413.5,451.5 413,455.1 412.5,450.8 412,446.5 411.5,446.8 411,447.5 410.5,447.1 410,446.8 409.5,447.2 409,449.1 408.5,453.5 408,450 407.5,449.9 407,447.1 406.5,446.2 406,447.4 405.5,448.6 405,447.4 404.5,446.7 404,447.8 403.5,450.3 403,447.5 402.5,449.3 402,452.1 401.5,449.5 401,446.8 400.5,446.1 400,448.9 399.5,453.5 399,448.1 398.5,446.8 398,446.3 397.5,447.5 397,449.4 396.5,447.2 396,446.4 395.5,445.9 395,446.3 394.5,447.3 394,446.9 393.5,447.9 393,449.1 392.5,448.3 392,449.8 391.5,448.5 391,447.8 390.5,446.5 390,446 389.5,446.8 389,449.9 388.5,454.4 388,449.4 387.5,446 387,446.2 386.5,449.2 386,453.1 385.5,448.8 385,446.3 384.5,450.7 384,455.2 383.5,450.7 383,446.8 382.5,447.5 382,449 381.5,448.2 381,446.6 380.5,447.6 380,448.4 379.5,450.3 379,451.5 378.5,456.9 378,450.9 377.5,445.7 377,446.6 376.5,447.7 376,453.9 375.5,448 375,446.3 374.5,449.2 374,452.5 373.5,449.6 373,446.2 372.5,447.8 372,449.1 371.5,447.9 371,446.9 370.5,448.2 370,449.9 369.5,448 369,445.9 368.5,448.1 368,450.2 367.5,447.8 367,445.8 366.5,441.3 366,437Z" fill="#484848"/><path d="M366,516.1 366.5,511.9 367,512.9 367.5,513.8 368,512.6 368.5,511.5 369,513.3 369.5,511.6 370,505.2 370.5,511.6 371,514.9 371.5,513.8 372,510.5 372.5,513.5 373,514.8 373.5,512.3 374,510.4 374.5,513 375,514.6 375.5,512.7 376,511.2 376.5,512.9 377,511.2 377.5,503.5 378,511.2 378.5,514.8 379,514.6 379.5,511.4 380,498.9 380.5,511.7 381,514.9 381.5,514.1 382,513.8 382.5,514.2 383,510.5 383.5,506.2 384,510.4 384.5,514.5 385,512 385.5,507.7 386,509.3 386.5,505.4 387,510.1 387.5,514.1 388,514.3 388.5,511.4 389,508.3 389.5,511.5 390,514.5 390.5,513.9 391,512.7 391.5,509.2 392,513.1 392.5,514.8 393,511.1 393.5,507.8 394,511.3 394.5,513.8 395,514.4 395.5,514.7 396,514.3 396.5,513.8 397,513.8 397.5,512.7 398,513.6 398.5,514 399,506.6 399.5,498.8 400,506.4 400.5,507.7 401,512.8 401.5,514.3 402,514.5 402.5,510.7 403,506.4 403.5,511.2 404,514.6 404.5,514.6 405,509.8 405.5,504.8 406,509.5 406.5,510.8 407,514 407.5,514.4 408,511.9 408.5,504.2 409,512.5 409.5,514.8 410,513.7 410.5,512.1 411,506 411.5,512.2 412,513.3 412.5,512.8 413,512 413.5,513.1 414,513.9 414.5,512.6 415,510.2 415.5,512.2 416,512.1 416.5,508.6 417,512.3 417.5,513.8 418,510.4 418.5,506.8 419,510.1 419.5,509.8 420,504.2 420.5,510.2 421,514.3 421.5,514 422,510.3 422.5,505.3 423,510.5 423.5,514.5 424,509.7 424.5,505.1 425,510.3 425.5,510.1 426,512.9 426.5,514.6 427,512.8 427.5,508.2 428,512.8 428.5,513.9 429,513.7 429.5,508.8 430,503 430.5,509.1 431,514.5 431.5,510.4 432,504.9 432.5,509.9 433,514.2 433.5,515 434,510.6 434.5,503.4 435,506.2 435.5,500.7 436,508 436.5,513.8 437,513.8 437.5,513.4 438,513.5 438.5,513.8 439,513.5 439.5,512.8 440,511.6 440.5,513.2 441,513.4 441.5,513.7 442,507.6 442.5,498.7 443,508.3 443.5,513.2 444,515.2 444.5,517.8 445,518 445.5,517 446,515.6 446.5,517.9 447,518.6 447.5,517.6 448,515.6 448.5,512.5 449,515.4 449.5,516.3 450,514.9 450.5,516.4 451,517.6 451.5,517 452,516.7 452.5,516 453,516.9 453.5,516.6 454,516.7 454.5,517.2 455,517.7 455.5,517.8 456,516.2 456.5,511.3 457,515.7 457.5,517.6 458,515 458.5,513.2 459,515.4 459.5,516.9 460,518.3 460.5,514.7 461,511.1 461.5,515 462,517 462.5,517.2 463,515.4 463.5,511.6 464,515.8 464.5,516.6 465,515.4 465.5,517.1 466,517.9 466.5,518.5 467,518.2 467.5,517.3 468,518.3 468.5,518.2 469,518.4 469.5,516.6 470,515.6 470.5,516.9 471,516.7 471.5,516.7 472,514.9 472.5,516.4 473,517.3 473.5,516.5 474,515 474.5,516.6 475,517.8 475.5,517.5 476,516.4 476.5,515.4 477,516.5 477.5,517.7 478,518.3 478.5,518.3 479,517.3 479.5,517.9 480,515.9 480.5,512.5 481,515.9 481.5,517.6 482,516.9 482.5,515.7 483,517.7 483.5,518.2 484,516.6 484.5,515.3 485,517.1 485.5,515.9 486,511.4 486.5,516.4 487,518 487.5,517 488,515.9 488.5,517.2 489,516.4 489.5,514.7 490,516.8 490.5,518.1 491,517.2 491.5,516.5 492,513.4 492.5,516.6 493,517.5 493.5,516.7 494,517.4 494.5,514.7 495,511.5 495.5,515.2 496,517.6 496.5,516.1 497,515.3 497.5,516.6 498,515.5 498.5,514 499,515.9 499.5,517 500,515.2 500.5,514.8 501,512.9 501.5,515.3 502,517.3 502.5,518.1 503,515.6 503.5,509.8 504,515.8 504.5,517.9 505,518 505.5,515.1 506,511 506.5,514.9 507,517.4 507.5,516.8 508,516.8 508.5,516.8 509,517.5 509.5,515.3 510,513.3 510.5,515.7 511,515.8 511.5,512.4 512,515.4 512.5,515.3 513,514.2 513.5,514.9 514,515.5 514.5,513 515,514.8 515.5,515.8 516,514.7 516.5,514.8 517,512.1 517.5,507.2 518,512.6 518.5,512.6 519,509.2 519.5,512.2 520,513.8 520.5,512 521,513.6 521.5,513.5 522,506.3 522.5,513.5 523,515.2 523.5,516.3 524,515.8 524.5,513.8 525,510.1 525.5,513.9 526,516.2 526.5,517.1 527,516.1 527.5,513.7 528,508.1 528.5,513.1 529,511.9 529.5,516.5 530,517.8 530.5,515.5 531,510.3 531.5,515.3 532,517.4 532.5,515.1 533,512.9 533.5,514.6 534,516.8 534.5,515.9 535,514.6 535.5,516.1 536,511.9 536.5,507.6 537,512.4 537.5,515.7 538,513.1 538.5,515.5 539,516.9 539.5,517.4 540,517.8 540.5,516.9 541,518 541.5,518.2 542,516.8 542.5,517.3 543,516.4 543.5,516.7 544,515.8 544.5,516 545,514.5 545.5,510.3 546,514.1 546.5,517.1 547,518.2 547.5,515.9 548,512.1 548.5,515.5 549,517.3 549.5,516.5 550,516.2 550.5,516.4 551,516.9 551.5,515.9 552,514.4 552.5,516 553,516.4 553.5,517.8 554,512.8 554.5,508.8 555,513.1 555.5,516.9 556,514.3 556.5,508.9 557,514.2 557.5,517.1 558,516.2 558.5,513.2 559,516.2 559.5,516 560,515.3 560.5,515.7 561,515.8 561.5,515.4 562,513.3 562.5,515.9 563,517.3 563.5,515 564,507.6 564.5,512.6 565,507.7 565.5,513.9 566,517.3 566.5,516.9 567,515.8 567.5,516.9 568,515 568.5,512 569,513.3 569.5,512.1 570,514.6 570.5,517.2 571,517 571.5,514.9 572,511.7 572.5,515 573,518 573.5,517 574,516.9 574.5,516.7 575,517.1 575.5,517.6 576,517.4 576.5,515.9 577,511 577.5,515.2 578,517.3 578.5,515.6 579,513.6 579.5,512.2 580,509.2 580.5,513.1 581,517.6 581.5,516 582,515 582.5,513.2 583,514.8 583.5,517.1 584,516.8 584.5,516.8 585,516.2 585.5,515 586,508.3 586.5,502.5 587,503.7 587.5,496.5 588,506.8 588.5,510.4 589,512.2 589.5,512.5 590,501.5 590.5,510.1 591,514.8 591.5,514.3 592,510.7 592.5,506.4 593,510.2 593.5,509.6 594,502.4 594.5,511 595,513.5 595.5,514.2 596,514.3 596.5,513.9 597,513.6 597.5,512.7 598,507.4 598.5,512.6 599,515.2 599.5,512.5 600,510.8 600.5,513.6 601,507.3 601.5,500.1 602,507.7 602.5,511 603,507.5 603.5,509.8 604,506.6 604.5,513 605,514.5 605.5,514.5 606,510.5 606.5,506.3 607,509.9 607.5,512.2 608,501.4 608.5,511.2 609,512.1 609.5,514 610,512.8 610.5,510.7 611,512.1 611.5,512.7 612,515.1 612.5,507.8 613,498.6 613.5,507.1 614,514.8 614.5,509.5 615,504.2 615.5,510.5 616,513.1 616.5,510.4 617,512.8 617.5,515.3 618,512 618.5,506.5 619,513.8 619.5,510.5 620,499.7 620.5,512.4 621,508.7 621.5,503.2 622,509.1 622.5,516.1 623,516.3 623.5,513.8 624,510.4 624.5,512.7 625,514.6 625.5,513.3 626,513 626.5,505.5 627,513.4 627.5,512.8 628,512.9 628.5,512.9 629,515 629.5,516.9 630,518.5 630.5,518.4 631,517.7 631.5,518.4 632,519 632.5,518.4 633,518.4 633.5,518.5 634,518.7 634.5,518.9 635,518.6 635.5,518.9 636,519.5 636.5,518.8 637,518.6 637.5,518.4 638,518.5 638.5,518.5 639,517.7 639.5,518.3 640,518.8 640.5,518.4 641,518.2 641.5,517.5 642,518.1 642.5,518 643,518.3 643.5,518.3 644,518.8 644.5,518.9 645,518.2 645.5,518.7 646,518.8 646.5,518.6 647,518.6 647.5,518.3 648,518.5 648.5,519.1 649,519.1 649.5,518.9 650,518.5 650.5,518.7 651,518.5 651.5,518.8 652,518.5 652.5,518.7 653,518.7 653.5,518.6 654,518.2 654.5,517.9 655,518.2 655.5,518.3 656,518.3 656.5,518.4 657,519.1 657.5,518.8 658,519.2 658.5,518.9 659,518.5 659.5,518.6 660,518.1 660.5,518.8 661,518.5 661.5,518.3 662,518.6 662.5,518.3 663,518.3 663.5,518.2 664,518.5 664.5,518.8 665,518.3 665.5,518.1 666,518.8 666.5,518.8 667,518.3 667.5,518.5 668,518.9 668.5,518.5 669,518.4 669.5,518 670,518.4 670.5,518.9 671,518.2 671.5,518.3 672,518.6 672.5,518.4 673,518.7 673.5,517.8 674,518.4 674.5,518.5 675,518.4 675.5,518.8 676,518.7 676.5,518.7 677,518.3 677.5,518.5 678,519.3 678.5,518.1 679,517.7 679.5,518.4 680,518.8 680.5,518.6 681,518 681.5,518 682,517.8 682.5,518.3 683,518.4 683.5,518.5 684,518.3 684.5,518.8 685,518.6 685.5,518 686,518.5 686.5,518.4 687,518.4 687.5,518.1 688,517.8 688.5,518.1 689,517.6 689.5,518.7 690,518.4 690.5,518.2 691,518.1 691.5,517.5 692,518.1 692.5,518.5 693,518.6 693.5,518.6 694,518.7 694.5,518.1 695,518 695.5,518.8 696,518.4 696.5,518.5 697,517.8 697.5,518 698,518.6 698.5,518.9 699,516.5 699.5,513.8 700,510.1 700.5,501.6 701,511 701.5,515.5 702,514.1 702.5,510.4 703,499.6 703.5,511.3 704,513.5 704.5,509.4 705,504.5 705.5,509.8 706,511.1 706.5,506 707,510.8 707.5,515.4 708,509 708.5,502.8 709,509.4 709.5,513.2 710,511.2 710.5,513.8 711,516.4 711.5,512.8 712,504.6 712.5,512.6 713,516.7 713.5,513.2 714,505.6 714.5,513.8 715,516.6 715.5,516.8 716,514.7 716.5,508.3 717,514.8 717.5,515.2 718,514 718.5,511 719,513.9 719.5,516.4 720,512.8 720.5,507.9 721,512.6 721.5,516.3 722,516 722.5,514.6 723,515.5 723.5,514.6 724,515.4 724.5,513.6 725,514.3 725.5,515.4 726,516.4 726.5,515.7 727,515.3 727.5,516.5 728,517.7 728.5,516.1 729,515.2 729.5,512.8 730,509.5 730.5,512.6 731,514.5 731.5,514.5 732,514.3 732.5,512.9 733,514.9 733.5,510.8 734,505.7 734.5,510.9 735,514.2 735.5,509.6 736,511.6 736.5,507.2 737,511.6 737.5,515 738,515.7 738.5,515.7 739,515.4 739.5,510.9 740,514.7 740.5,515.5 741,513 741.5,510.1 742,513.1 742.5,516.3 743,514.4 743.5,513.6 744,515.3 744.5,517 745,515.9 745.5,515.4 746,516.2 746.5,516.1 747,512.9 747.5,505.3 748,512.5 748.5,515.1 749,516.1 749.5,514 750,513.8 750.5,511.8 751,507.6 751.5,501.1 752,509 752.5,516.1 753,517.1 753.5,514.1 754,510.3 754.5,513.4 755,517.6 755.5,512.8 756,507.5 756.5,512.7 757,516 757.5,512.8 758,508.6 758.5,512.3 759,511.2 759.5,503.5 760,511.5 760.5,515 761,511.6 761.5,510.7 762,504.8 762.5,511.9 763,516.9 763.5,516.5 764,512 764.5,503.2 765,512.9 765.5,517.5 766,515.3 766.5,512.4 767,514.5 767.5,514.2 768,511.4 768.5,514.2 769,509.6 769.5,500.9 770,509.6 770.5,511.2 771,506 771.5,511 772,515.2 772.5,512.9 773,507.3 773.5,512.4 774,514.1 774.5,515.8 775,515.3 775.5,515.2 776,515.6 776.5,514.9 777,510.7 777.5,506.1 778,511.4 778.5,515.6 779,514.8 779.5,512.3 780,514.7 780.5,510 781,503.5 781.5,509.4 782,515.6 782.5,516.6 783,513.5 783.5,511.6 784,514.1 784.5,515 785,516 785.5,516.2 786,516.6 786.5,516.4 787,514.3 787.5,513.5 788,514.9 788.5,514.6 789,515.5 789.5,515 790,515.7 790.5,515.7 791,513.2 791.5,509.3 792,512.8 792.5,514.6 793,510.2 793.5,513.8 794,514.9 794.5,516.4 795,515.7 795.5,515.5 796,515.6 796.5,516.4 797,516.8 797.5,514.9 798,514.9 798.5,515.8 799,514.8 799.5,510.3 800,511.1 800.5,508.1 801,512.1 801.5,515.6 802,517.4 802.5,516.1 803,515 803.5,516.5 804,516.7 804.5,514.5 805,512.2 805.5,515.2 806,515.5 806.5,513.7 807,510 807.5,513.6 808,515.9 808.5,514.4 809,512.9 809.5,514.6 810,516.8 810.5,514.9 811,511 811.5,512.3 812,510.1 812.5,513.2 813,515.5 813.5,512.5 814,508.3 814.5,512.6 815,516.1 815.5,515.6 816,516.4 816.5,517.5 817,516 817.5,514.6 818,515 818.5,515.2 819,513.7 819.5,510 820,514.2 820.5,513.9 821,511.2 821.5,514.8 822,517.9 822.5,517.3 823,517.8 823.5,518.4 824,519.4 824.5,519.1 825,518.9 825.5,519.6 826,520.6 826,521.4 825.5,522.5 825,523.2 824.5,523 824,523 823.5,523.3 823,524.1 822.5,524.1 822,524 821.5,527.4 821,529.7 820.5,527.4 820,527.5 819.5,532 819,528.4 818.5,525.5 818,525.9 817.5,527.7 817,526.5 816.5,524.5 816,525.1 815.5,526.3 815,525.8 814.5,529 814,534.1 813.5,530 813,527.4 812.5,529.8 812,534.3 811.5,531.1 811,530.9 810.5,527.3 810,525.9 809.5,528 809,528.9 808.5,527.9 808,525.6 807.5,528.4 807,533.3 806.5,527.8 806,524.4 805.5,526.5 805,529.5 804.5,527.5 804,525.5 803.5,526.8 803,527 802.5,526.4 802,524.7 801.5,525.2 801,528.9 800.5,533.1 800,530.4 799.5,530.8 799,527.2 798.5,526.3 798,526.2 797.5,526.3 797,525.3 796.5,526 796,526 795.5,526.5 795,526.4 794.5,526.3 794,526 793.5,528.1 793,532.4 792.5,527.6 792,530 791.5,533.1 791,530.2 790.5,525.8 790,525.8 789.5,526.7 789,525.2 788.5,525.3 788,526.3 787.5,528.1 787,527.1 786.5,526.1 786,527.1 785.5,525.8 785,526 784.5,525.3 784,526.6 783.5,531 783,526.2 782.5,525.2 782,524.6 781.5,533.3 781,541.3 780.5,533.1 780,527.6 779.5,530.3 779,527.7 778.5,525.6 778,532.2 777.5,539.3 777,531.9 776.5,526.4 776,525.9 775.5,526.4 775,525.3 774.5,525.6 774,527.5 773.5,529 773,533.3 772.5,528.7 772,526.2 771.5,531.6 771,537.1 770.5,531.8 770,531.5 769.5,538.9 769,531.3 768.5,529 768,531.4 767.5,529.1 767,527.1 766.5,528.6 766,526.7 765.5,525.5 765,529.6 764.5,537.5 764,529.6 763.5,526.3 763,525.1 762.5,532 762,539.6 761.5,532.5 761,530.3 760.5,526.8 760,530.5 759.5,537.3 759,530.4 758.5,530.3 758,534.7 757.5,530.2 757,526.6 756.5,529.7 756,534.2 755.5,528.9 755,525.8 754.5,528.2 754,530 753.5,528 753,524.3 752.5,525.9 752,531.9 751.5,539.2 751,533.2 750.5,529.2 750,527.3 749.5,527.5 749,526.1 748.5,524.9 748,529.3 747.5,536.4 747,530.6 746.5,526 746,526.7 745.5,526.8 745,526.4 744.5,525.7 744,527 743.5,528.5 743,527.1 742.5,525.2 742,529.4 741.5,533.4 741,529.9 740.5,526.6 740,527.2 739.5,532.4 739,526.7 738.5,526.2 738,525.4 737.5,526 737,529.7 736.5,535.5 736,531 735.5,533.7 735,528.8 734.5,531.6 734,535 733.5,531.6 733,527.4 732.5,529 732,527.5 731.5,526.2 731,525.8 730.5,528.5 730,530.9 729.5,528.4 729,526.8 728.5,525.7 728,525.8 727.5,525.4 727,526.5 726.5,526.8 726,525.5 725.5,525.2 725,527.9 724.5,528.7 724,527 723.5,525.9 723,526.5 722.5,527.8 722,526.9 721.5,524.6 721,530.8 720.5,537.3 720,530.6 719.5,525.6 719,528.4 718.5,530.6 718,528 717.5,525.8 717,527.1 716.5,532.8 716,527 715.5,525.9 715,526.7 714.5,528.8 714,534.9 713.5,527.5 713,524.9 712.5,528.4 712,539.2 711.5,529.6 711,525.6 710.5,528.6 710,530.6 709.5,528.3 709,531.8 708.5,537 708,530.9 707.5,527.8 707,531.7 706.5,536.8 706,532.7 705.5,534.7 705,541.4 704.5,534.9 704,529.2 703.5,529.1 703,539.9 702.5,529 702,527.3 701.5,526.3 701,532.8 700.5,542.8 700,532.5 699.5,528.8 699,526 698.5,523.1 698,523.4 697.5,523.4 697,524.2 696.5,523.7 696,523.4 695.5,523.7 695,523.1 694.5,523.8 694,523.3 693.5,523.6 693,523.1 692.5,523.5 692,523.7 691.5,524.5 691,523.9 690.5,523.6 690,523.2 689.5,523.4 689,524.4 688.5,523.9 688,524.2 687.5,523.6 687,523.6 686.5,523.1 686,523.8 685.5,523.9 685,523.7 684.5,523.9 684,523.8 683.5,523.5 683,523.6 682.5,523.9 682,524.2 681.5,523.4 681,523.2 680.5,523.4 680,523.1 679.5,523.9 679,524.5 678.5,523.8 678,522.9 677.5,523.5 677,523.7 676.5,522.9 676,523.2 675.5,523.3 675,523.6 674.5,523.4 674,523.4 673.5,524 673,523.3 672.5,523.9 672,523.4 671.5,523.8 671,523.6 670.5,523.5 670,523.6 669.5,524 669,523.6 668.5,523.6 668,523.5 667.5,523.4 667,523.7 666.5,523.2 666,523.1 665.5,523.9 665,523.5 664.5,523.2 664,523.3 663.5,524 663,523.7 662.5,523.6 662,523.5 661.5,523.8 661,523.8 660.5,524.1 660,524 659.5,523.7 659,523.5 658.5,523.1 658,523.9 657.5,523.7 657,523.3 656.5,523.7 656,523.6 655.5,522.8 655,523.8 654.5,524.4 654,523.7 653.5,522.7 653,522.8 652.5,522.9 652,523.5 651.5,523.1 651,523.5 650.5,523.4 650,523.5 649.5,523.1 649,523 648.5,522.4 648,523.4 647.5,523.7 647,523.5 646.5,523.5 646,523 645.5,523.2 645,523.9 644.5,523.4 644,523.4 643.5,523.8 643,523.6 642.5,524 642,523.9 641.5,524.4 641,524 640.5,523.8 640,523.5 639.5,523.7 639,524.6 638.5,523.6 638,523.4 637.5,523.6 637,523.3 636.5,523.4 636,523.2 635.5,523.2 635,523.4 634.5,523 634,522.9 633.5,523.5 633,523.4 632.5,523.4 632,523.1 631.5,523.7 631,524.2 630.5,523.6 630,523.4 629.5,524.3 629,527.4 628.5,527.9 628,528.9 627.5,528.3 627,528.1 626.5,534.7 626,527.9 625.5,526 625,525.9 624.5,529.1 624,530.9 623.5,528.2 623,525.7 622.5,527.5 622,534.8 621.5,542.8 621,534.5 620.5,530.4 620,544 619.5,529.5 619,527.3 618.5,535.8 618,528.4 617.5,527.3 617,528.5 616.5,531.6 616,529.3 615.5,532 615,538.2 614.5,531.2 614,527.6 613.5,533.6 613,543.2 612.5,533.8 612,526.4 611.5,528.7 611,530.1 610.5,531.2 610,529.2 609.5,527.8 609,528.8 608.5,530.4 608,540.7 607.5,531.3 607,533.2 606.5,538.5 606,532.4 605.5,527.2 605,526.8 604.5,529.6 604,535.9 603.5,533.6 603,537.5 602.5,532.2 602,536.6 601.5,544.9 601,536.4 600.5,528.1 600,530.8 599.5,527.5 599,526.7 598.5,527.8 598,535.4 597.5,528.4 597,528.7 596.5,528.1 596,528.3 595.5,526.7 595,528.5 594.5,531.1 594,537.6 593.5,532.1 593,530.6 592.5,534.5 592,530.5 591.5,526.9 591,525.7 590.5,530.4 590,541.7 589.5,530.5 589,529.4 588.5,531.6 588,534.5 587.5,543.5 587,538.1 586.5,541.7 586,535.3 585.5,525.7 585,525.7 584.5,525.1 584,525.1 583.5,525.5 583,526.2 582.5,527.6 582,526.2 581.5,524.8 581,525.7 580.5,529 580,533.3 579.5,529.9 579,528.5 578.5,526.6 578,524.4 577.5,526.6 577,531 576.5,526.8 576,525.3 575.5,525 575,525.2 574.5,525.4 574,524.9 573.5,524.7 573,525 572.5,527.1 572,530.3 571.5,527.8 571,524.6 570.5,525.2 570,527.3 569.5,530.8 569,529.1 568.5,531 568,527.8 567.5,525.2 567,526.5 566.5,524.9 566,525.7 565.5,527.3 565,532.5 564.5,529 564,533.8 563.5,527.9 563,525.5 562.5,526.4 562,530.5 561.5,526.3 561,525.8 560.5,525.2 560,526.9 559.5,524.9 559,526.2 558.5,529.7 558,526.5 557.5,523.7 557,528.5 556.5,533.7 556,528.6 555.5,524.2 555,530.1 554.5,535.3 554,530.4 553.5,525.9 553,526 552.5,526.5 552,527.6 551.5,525.3 551,523.4 550.5,524.9 550,525.8 549.5,525.2 549,524.2 548.5,526.9 548,529.7 547.5,527.2 547,525.8 546.5,525.1 546,528.2 545.5,532.2 545,528 544.5,525.4 544,524.4 543.5,524.8 543,525.5 542.5,525.2 542,524.2 541.5,525 541,525.3 540.5,525.1 540,524.4 539.5,524 539,524.2 538.5,526.4 538,528.7 537.5,526.3 537,530 536.5,535 536,529.4 535.5,526.4 535,527.5 534.5,525.9 534,524.9 533.5,527.2 533,529 532.5,527 532,524.2 531.5,527.1 531,532.3 530.5,526.8 530,523.8 529.5,526.5 529,531.2 528.5,528.2 528,533 527.5,527.7 527,525 526.5,525.2 526,524.7 525.5,528.7 525,532.9 524.5,528.6 524,525.9 523.5,525.7 523,526.2 522.5,527.7 522,534.5 521.5,527.2 521,528.3 520.5,531 520,528.5 519.5,530.2 519,535.2 518.5,530.2 518,528.9 517.5,533.4 517,529.8 516.5,527.3 516,527 515.5,525.9 515,527.9 514.5,529.4 514,528 513.5,527.7 513,527.8 512.5,526.5 512,526.7 511.5,530.6 511,526.5 510.5,525.7 510,527.9 509.5,525.2 509,523.5 508.5,523.4 508,524.4 507.5,525.1 507,524.7 506.5,527.3 506,531 505.5,527.5 505,525.3 504.5,524.2 504,525.9 503.5,530 503,525.3 502.5,523.7 502,525 501.5,527 501,529.9 500.5,527.5 500,526.7 499.5,524.7 499,527 498.5,529.1 498,527.4 497.5,525.9 497,527 496.5,525.9 496,524.6 495.5,526.8 495,530 494.5,527.1 494,524.7 493.5,525.4 493,525.5 492.5,526.3 492,529.6 491.5,526.1 491,525.6 490.5,524.8 490,525.8 489.5,527.5 489,525.9 488.5,524.7 488,525.9 487.5,524.9 487,524.2 486.5,527.1 486,531 485.5,527.1 485,525.5 484.5,526.1 484,525.3 483.5,524.3 483,524.3 482.5,525.8 482,524.8 481.5,524.7 481,526 480.5,529.5 480,526.2 479.5,525.2 479,524.6 478.5,524.5 478,524.1 477.5,525 477,525.1 476.5,527.5 476,525.1 475.5,525 475,524.3 474.5,525.8 474,527 473.5,525.3 473,524.7 472.5,525.7 472,527.6 471.5,524.8 471,523.8 470.5,525.4 470,526.8 469.5,525.1 469,523.9 468.5,525.4 468,524.1 467.5,524.7 467,524.5 466.5,523.3 466,523.9 465.5,524.3 465,526.5 464.5,525.1 464,525.5 463.5,530.5 463,525.9 462.5,524.3 462,523.8 461.5,527 461,530.4 460.5,526.8 460,524.5 459.5,525.1 459,527.1 458.5,530 458,527.2 457.5,525.2 457,525.8 456.5,532 456,526 455.5,523.6 455,524.3 454.5,524.8 454,524.4 453.5,523.8 453,525.3 452.5,526.5 452,525.6 451.5,524 451,524.4 450.5,525.8 450,527 449.5,526 449,527.4 448.5,531.6 448,527.3 447.5,523.5 447,524 446.5,524.7 446,526.9 445.5,524 445,524.4 444.5,524.9 444,527.1 443.5,529.3 443,532.9 442.5,539.7 442,533.1 441.5,528.3 441,527.4 440.5,529 440,530.9 439.5,528.7 439,528.5 438.5,528.1 438,528.6 437.5,528.3 437,528.2 436.5,527.1 436,533.1 435.5,540.3 435,535.5 434.5,539.3 434,532.2 433.5,528 433,528.2 432.5,533.2 432,539.4 431.5,532.7 431,527.3 430.5,534 430,541.5 429.5,534.2 429,528.3 428.5,528 428,528.8 427.5,534.2 427,529.1 426.5,528.1 426,529.2 425.5,531.5 425,531.9 424.5,535.7 424,531.4 423.5,527.9 423,532.9 422.5,539.5 422,533.1 421.5,528.2 421,527.3 420.5,531.7 420,536.8 419.5,532.1 419,532.2 418.5,535.9 418,531.9 417.5,529 417,529.2 416.5,532.4 416,529.3 415.5,529.6 415,531.9 414.5,529.4 414,527.7 413.5,529 413,529.7 412.5,528.5 412,527.4 411.5,529.8 411,534.8 410.5,528.9 410,527.6 409.5,527 409,529.4 408.5,537.4 408,529.5 407.5,526.9 407,528.3 406.5,531.6 406,530.8 405.5,534.7 405,530.7 404.5,527.6 404,527.9 403.5,531.6 403,535.8 402.5,531.8 402,528.6 401.5,527.9 401,529.8 400.5,533.2 400,535.4 399.5,542 399,535.4 398.5,528.9 398,528.7 397.5,529.1 397,528.2 396.5,528.3 396,527.8 395.5,527.2 395,528.1 394.5,528.2 394,531.6 393.5,535.4 393,531.3 392.5,527.8 392,529.6 391.5,533.6 391,529.1 390.5,528.2 390,528.4 389.5,530 389,533.2 388.5,530.2 388,528.4 387.5,528.5 387,532.2 386.5,537.8 386,533.3 385.5,534.6 385,529.7 384.5,527.5 384,532.1 383.5,536.6 383,532 382.5,527.9 382,528.2 381.5,527.4 381,527.6 380.5,530.5 380,539.6 379.5,530.5 379,527.3 378.5,528.1 378,530.9 377.5,537.9 377,530.8 376.5,528.9 376,531.1 375.5,528.9 375,527.6 374.5,529.7 374,531.9 373.5,529.1 373,527.6 372.5,528.4 372,531.8 371.5,529.3 371,528.3 370.5,530.1 370,535.8 369.5,530.7 369,528.7 368.5,530.8 368,528.9 367.5,528.2 367,529.1 366.5,529.7 366,525.7Z" fill="#484848"/><path d="M852,521 852.5,517.7 853,515.8 853.5,515.8 854,517.3 854.5,516.5 855,515.3 855.5,511.5 856,514.6 856.5,517.9 857,516.2 857.5,516.1 858,516.3 858.5,517.2 859,516.2 859.5,515.3 860,513.4 860.5,515.3 861,515 861.5,511.7 862,514.5 862.5,516.1 863,513.5 863.5,510.4 864,513.9 864.5,515.8 865,511 865.5,515.9 866,516.5 866.5,516.8 867,517 867.5,515.8 868,516.6 868.5,517.4 869,515.1 869.5,510.5 870,514.3 870.5,513.8 871,514.9 871.5,513.9 872,511.9 872.5,513 873,511.6 873.5,515 874,516.2 874.5,515.9 875,515.6 875.5,515.3 876,515.5 876.5,515.8 877,514.6 877.5,515.6 878,515.7 878.5,515.8 879,515.6 879.5,511.7 880,515.1 880.5,517 881,514.6 881.5,509.5 882,513.4 882.5,517.4 883,513.4 883.5,508.9 884,513.9 884.5,517.8 885,517.1 885.5,517.4 886,516.5 886.5,516.9 887,516.7 887.5,517.4 888,516.7 888.5,514.8 889,516.6 889.5,515.9 890,513.3 890.5,511.1 891,502.3 891.5,512 892,512.9 892.5,508.2 893,513.1 893.5,516.1 894,515.5 894.5,513.5 895,514.9 895.5,516.1 896,516.2 896.5,514 897,510.7 897.5,514.3 898,514.2 898.5,510.8 899,513.7 899.5,517.2 900,516.9 900.5,515.4 901,517.1 901.5,517.7 902,515.7 902.5,511.8 903,515.5 903.5,518.2 904,517.4 904.5,511.5 905,503.3 905.5,511.9 906,513 906.5,502.7 907,512.1 907.5,515.7 908,514.1 908.5,512.6 909,514.3 909.5,514.9 910,514.8 910.5,512.9 911,515.3 911.5,518.5 912,519 912.5,518.3 913,517 913.5,518.5 914,520.5 914.5,520.4 915,520.2 915.5,520.4 916,520.2 916.5,519.9 917,520.2 917.5,517.4 918,512.9 918.5,510.2 919,512.5 919.5,512.5 920,510.3 920.5,513.2 921,514.1 921.5,512.8 922,509.2 922.5,513 923,511 923.5,508.2 924,510.8 924.5,514.8 925,514.3 925.5,513.8 926,513.7 926.5,514.4 927,513.3 927.5,511.8 928,514.4 928.5,514.5 929,511.4 929.5,505.8 930,512.1 930.5,512.5 931,514.2 931.5,513.4 932,504.5 932.5,513.9 933,515.7 933.5,511.5 934,503.4 934.5,511.4 935,515.4 935.5,516 936,512.1 936.5,509.2 937,511.3 937.5,505.7 938,512.5 938.5,510.8 939,506.7 939.5,511.7 940,516.6 940.5,515.1 941,512.3 941.5,513 942,514 942.5,511.3 943,508.4 943.5,510.6 944,515.2 944.5,511.9 945,505.1 945.5,510.4 946,513 946.5,510.5 947,506.7 947.5,510.9 948,512.9 948.5,507.4 949,512.8 949.5,514.6 950,514 950.5,513.8 951,514 951.5,515.1 952,513.9 952.5,513 953,514.1 953.5,514.7 954,514.6 954.5,514.3 955,507.4 955.5,501.1 956,507.7 956.5,513.4 957,513.7 957.5,512.6 958,513.6 958.5,515.6 959,513.1 959.5,508.6 960,507 960.5,501 961,507.9 961.5,513.5 962,513.7 962.5,514.6 963,514.1 963.5,516.3 964,515 964.5,512.2 965,513.7 965.5,515.9 966,513.6 966.5,513.2 967,512.6 967.5,513.3 968,514.2 968.5,512.4 969,514.2 969.5,514.9 970,515.8 970.5,516.2 971,516.3 971.5,509.5 972,500.7 972.5,509.5 973,510.4 973.5,513.4 974,515.3 974.5,510.8 975,502.5 975.5,510.8 976,509.5 976.5,504.9 977,510.6 977.5,512.1 978,509.1 978.5,513.2 979,514.9 979.5,513.1 980,511.4 980.5,513.6 981,514 981.5,510.5 982,505.7 982.5,511.5 983,511.5 983.5,513.5 984,514.8 984.5,513.7 985,509.2 985.5,514.5 986,515.1 986.5,515.6 987,514.7 987.5,514.4 988,515 988.5,514.7 989,513.3 989.5,510.9 990,513 990.5,509.9 991,504.3 991.5,510.7 992,514.8 992.5,512.8 993,510.9 993.5,513.6 994,516.4 994.5,517.6 995,516.7 995.5,514.6 996,516.9 996.5,518.7 997,519.2 997.5,519.3 998,519.4 998.5,519.7 999,519.5 999.5,519.5 1000,519.6 1000.5,519.8 1001,519.8 1001.5,519.9 1002,520.1 1002.5,520.2 1003,520.4 1003.5,520.4 1004,520.5 1004.5,520.6 1005,520.7 1005,521.4 1004.5,521.5 1004,521.5 1003.5,521.6 1003,521.8 1002.5,521.8 1002,521.9 1001.5,522 1001,521.9 1000.5,522.1 1000,522.3 999.5,522.5 999,522.2 998.5,522.3 998,522.6 997.5,522.7 997,523.2 996.5,523.3 996,524.7 995.5,526.8 995,525.2 994.5,524.8 994,525.3 993.5,527.9 993,530.8 992.5,528.6 992,526.7 991.5,530.7 991,536.8 990.5,530 990,528.6 989.5,531.3 989,528.2 988.5,526.9 988,526.4 987.5,526.7 987,527.7 986.5,528 986,528.8 985.5,528 985,531.5 984.5,527.5 984,527.6 983.5,528.2 983,530.1 982.5,530.3 982,536.8 981.5,529.5 981,525.5 980.5,528 980,530.3 979.5,528.9 979,527 978.5,528.3 978,531.6 977.5,528.9 977,531.3 976.5,537.2 976,531.7 975.5,529.9 975,536.9 974.5,530.2 974,526.8 973.5,526.9 973,530.9 972.5,530.5 972,539 971.5,530.6 971,526.9 970.5,528.2 970,528.1 969.5,527.9 969,528.8 968.5,529.8 968,528.7 967.5,528.7 967,529 966.5,528.6 966,527.6 965.5,528 965,527.7 964.5,529.1 964,526.7 963.5,527.5 963,526.9 962.5,528.1 962,528.3 961.5,528.8 961,534.6 960.5,541.7 960,536 959.5,534.5 959,529.3 958.5,527.1 958,528.3 957.5,530.1 957,528 956.5,526.1 956,533.3 955.5,540.1 955,534.1 954.5,526.8 954,527.7 953.5,527.9 953,528 952.5,529 952,527.9 951.5,526.8 951,528.3 950.5,526.9 950,525.5 949.5,524.8 949,529.2 948.5,537.3 948,530.5 947.5,531 947,537.2 946.5,531.7 946,527.2 945.5,531.5 945,539.4 944.5,532.1 944,528.3 943.5,529.3 943,532.1 942.5,529.2 942,525.7 941.5,527.6 941,530.7 940.5,528.1 940,525.6 939.5,530.9 939,536.7 938.5,531.2 938,528.9 937.5,535.7 937,530.9 936.5,533.1 936,528.6 935.5,525.5 935,527.5 934.5,530.6 934,538.5 933.5,530.6 933,525.5 932.5,528.6 932,537.4 931.5,528.8 931,527.6 930.5,529.3 930,529 929.5,533.5 929,529.4 928.5,527.2 928,528 927.5,530.4 927,527.2 926.5,527.1 926,526.4 925.5,527.3 925,528 924.5,527.7 924,531.3 923.5,534.6 923,530.6 922.5,527.8 922,531.2 921.5,527.5 921,526.7 920.5,530.8 920,533.6 919.5,530.3 919,529.7 918.5,531.8 918,528.5 917.5,523.7 917,521.7 916.5,522.1 916,521.8 915.5,521.7 915,521.9 914.5,521.7 914,521.6 913.5,523.3 913,524.5 912.5,523.8 912,523.9 911.5,523.8 911,526.7 910.5,529.7 910,527.3 909.5,525.2 909,527.3 908.5,528.7 908,527.1 907.5,526 907,529.9 906.5,541.1 906,530 905.5,528.8 905,535.8 904.5,529.2 904,524 903.5,524.1 903,527 902.5,529.9 902,527.3 901.5,525.8 901,525.7 900.5,526.8 900,525.7 899.5,524.7 899,527.4 898.5,529.9 898,527.6 897.5,528.9 897,532.1 896.5,529.1 896,525.7 895.5,524.7 895,527.2 894.5,528.6 894,527.5 893.5,525.4 893,528.4 892.5,531.5 892,527.9 891.5,529.8 891,540.5 890.5,531.2 890,529.5 889.5,527.2 889,525.4 888.5,527 888,526.1 887.5,525.4 887,525.8 886.5,524.6 886,525.5 885.5,524.8 885,524.5 884.5,525 884,528.7 883.5,532.9 883,528.6 882.5,526.1 882,526.9 881.5,531.3 881,527.5 880.5,525.5 880,527.5 879.5,532 879,527.5 878.5,525.6 878,525.1 877.5,526.2 877,527.8 876.5,526.2 876,525.7 875.5,526.5 875,525.4 874.5,524.7 874,525.3 873.5,527.5 873,530.8 872.5,528.6 872,529.9 871.5,527.6 871,527.1 870.5,527.9 870,527.7 869.5,532.1 869,528.1 868.5,525.6 868,526.5 867.5,526 867,526.9 866.5,525.8 866,525.8 865.5,526.5 865,530.5 864.5,526.7 864,527.9 863.5,532.5 863,528.3 862.5,526 862,527.3 861.5,529.8 861,526.9 860.5,527.1 860,528.6 859.5,526.5 859,524.8 858.5,524.4 858,525.7 857.5,525.9 857,525.3 856.5,524.9 856,526.6 855.5,530 855,527 854.5,525.6 854,525.9 853.5,525.2 853,526.5 852.5,523.9 852,521Z" fill="#484848"/><path d="M440.5,604.3 441,603.2 441.5,601.2 442,600.4 442.5,600.1 443,601.1 443.5,600.3 444,601.8 444.5,601.5 445,599.8 445.5,596.5 446,599.4 446.5,600.9 447,600.2 447.5,601.4 448,599.2 448.5,596.3 449,598.6 449.5,600.7 450,600.5 450.5,601 451,600.8 451.5,599.9 452,600.2 452.5,599.9 453,596.6 453.5,600.6 454,600.1 454.5,600.9 455,600.2 455.5,599.3 456,597.7 456.5,599.6 457,601.2 457.5,601.6 458,602.2 458.5,599.7 459,598.7 459.5,600.2 460,601.9 460.5,598.7 461,595.6 461.5,598.1 462,597.9 462.5,595.8 463,598.8 463.5,601.4 464,601.1 464.5,600.6 465,600.7 465.5,599 466,596.9 466.5,599.3 467,601.6 467.5,600.4 468,599.6 468.5,599.7 469,600.5 469.5,600.7 470,601.2 470.5,600.4 471,601 471.5,599.3 472,596.8 472.5,598.8 473,601.5 473.5,601 474,598.4 474.5,595.5 475,594.9 475.5,597 476,599.6 476.5,601.2 477,601.9 477.5,600.4 478,599.8 478.5,600.5 479,598.5 479.5,596.5 480,599.6 480.5,600.9 481,599.9 481.5,599.8 482,600.6 482.5,600.3 483,599.2 483.5,600.9 484,598.8 484.5,594.9 485,596 485.5,599.7 486,600.5 486.5,599.4 487,600.9 487.5,599.7 488,597.7 488.5,599.8 489,601.9 489.5,601.5 490,601 490.5,599.1 491,598 491.5,598 492,596.5 492.5,599.5 493,601.3 493.5,600.4 494,599.6 494.5,596.9 495,597 495.5,595.4 496,598 496.5,600.7 497,600.3 497.5,600.3 498,598.9 498.5,597.6 499,599.8 499.5,601.4 500,601.4 500.5,600.9 501,599.5 501.5,597.2 502,594 502.5,597.9 503,602 503.5,601.1 504,600.2 504.5,598.1 505,599.3 505.5,598.1 506,600.4 506.5,602.1 507,599.8 507.5,600.8 508,599.7 508.5,596.9 509,599.3 509.5,598.7 510,600.7 510.5,600.9 511,601.1 511.5,601.1 512,599.6 512.5,597.7 513,599.4 513.5,597.8 514,596.4 514.5,598.7 515,600.7 515.5,600.1 516,601.4 516.5,602 517,601.4 517.5,601 518,599.9 518.5,599.4 519,600.5 519.5,600.2 520,602.1 520.5,603.5 521,602.7 521.5,602.4 522,603.2 522.5,604.3 523,604.8 523,605.2 522.5,605.6 522,606.9 521.5,607.7 521,607.4 520.5,607 520,608.2 519.5,609.7 519,609.5 518.5,610.8 518,610.4 517.5,609.2 517,608.3 516.5,608 516,608.9 515.5,609.8 515,610.3 514.5,612 514,613.4 513.5,612.4 513,610.9 512.5,612 512,610.8 511.5,608.7 511,608.6 510.5,609.1 510,609.1 509.5,610.6 509,610.9 508.5,613.1 508,610.6 507.5,609.1 507,609.7 506.5,607.6 506,609.8 505.5,611.7 505,611 504.5,612.4 504,610 503.5,609 503,608 502.5,611.5 502,614.7 501.5,611.9 501,609.5 500.5,609 500,608.6 499.5,607.9 499,609.8 498.5,613 498,610.1 497.5,609 497,609.6 496.5,608.9 496,612.3 495.5,614.7 495,613.1 494.5,612.8 494,610.4 493.5,609.6 493,608.4 492.5,610.3 492,613.9 491.5,612 491,612 490.5,610.6 490,609.3 489.5,608.6 489,609 488.5,611.2 488,612.8 487.5,610.5 487,609.8 486.5,611.2 486,609.6 485.5,609.9 485,613.9 484.5,614.3 484,610.4 483.5,609 483,610.7 482.5,609.6 482,608.1 481.5,609.6 481,610.3 480.5,609.3 480,610 479.5,613.1 479,611.2 478.5,609.8 478,610.7 477.5,609.4 477,608.7 476.5,608.8 476,611.4 475.5,612.9 475,615.8 474.5,615 474,612 473.5,608.7 473,609 472.5,610.8 472,613.4 471.5,611.6 471,609 470.5,609.2 470,608.8 469.5,609.4 469,609.5 468.5,609.7 468,610.3 467.5,609.3 467,608.4 466.5,610.3 466,612.7 465.5,610.3 465,609.4 464.5,609.4 464,608.6 463.5,608.4 463,612.2 462.5,615.2 462,612.5 461.5,611.4 461,614.3 460.5,610.8 460,608 459.5,609.4 459,611.1 458.5,610.5 458,610.3 457.5,609.1 457,609.3 456.5,610.6 456,612.5 455.5,610.6 455,609.3 454.5,608.6 454,609.7 453.5,609.4 453,613.1 452.5,610.2 452,610 451.5,610.4 451,609.7 450.5,608.8 450,609.2 449.5,609.5 449,611.1 448.5,614.6 448,610.7 447.5,608.4 447,609.5 446.5,608.7 446,609.8 445.5,613.2 445,610.1 444.5,608.6 444,608.7 443.5,609.7 443,608.8 442.5,608.9 442,609.6 441.5,609.3 441,606.8 440.5,605.7Z" fill="#484848"/><path d="M630.5,605 631,604.2 631.5,603.4 632,602.8 632.5,601.9 633,602.5 633.5,602.9 634,603.1 634.5,603.4 635,602.4 635.5,602 636,601.8 636.5,602.4 637,603.4 637.5,603.5 638,603.5 638.5,602.9 639,602.5 639.5,602.1 640,603 640.5,603.4 641,602.6 641.5,602 642,601.2 642.5,602.1 643,603.5 643.5,603.7 644,603.3 644.5,602.8 645,603 645.5,602.1 646,602.2 646.5,602.8 647,603.2 647.5,602.8 648,602.4 648.5,602.6 649,602.9 649.5,602.5 650,603.2 650.5,602.9 651,602.4 651.5,602.8 652,602.5 652.5,601.7 653,601.3 653.5,602.3 654,601.6 654.5,600.2 655,601.4 655.5,601.8 656,602.1 656.5,601.7 657,602.5 657.5,603 658,602 658.5,601.6 659,601.7 659.5,602.2 660,602.6 660.5,602.8 661,600.8 661.5,599.4 662,600.4 662.5,601.1 663,602.4 663.5,603.2 664,601.9 664.5,600.5 665,601.4 665.5,601.5 666,602.2 666.5,601.8 667,600.9 667.5,601.6 668,599.9 668.5,597.4 669,600 669.5,602.6 670,601.9 670.5,600.7 671,601.4 671.5,601.1 672,601.5 672.5,602.4 673,602.2 673.5,601.2 674,599.8 674.5,597.5 675,599.4 675.5,601.6 676,600.8 676.5,599.6 677,600.8 677.5,600.7 678,600.3 678.5,601 679,599.9 679.5,601.1 680,601.7 680.5,598.8 681,600.7 681.5,598.9 682,596.1 682.5,599.3 683,601.7 683.5,600.2 684,598.4 684.5,599.7 685,600 685.5,600.6 686,602 686.5,601.1 687,600.1 687.5,599.5 688,597.2 688.5,599.5 689,601.2 689.5,601.2 690,601.1 690.5,599.8 691,599.9 691.5,600.3 692,600.3 692.5,601.3 693,601.1 693.5,601.2 694,600.4 694.5,600.5 695,600.1 695.5,600.6 696,601.1 696.5,601.8 697,599.5 697.5,596.6 698,597.3 698.5,595.3 699,598.9 699.5,601 700,598.6 700.5,598.2 701,595.1 701.5,597.5 702,596.1 702.5,600.2 703,601.1 703.5,600.5 704,599.1 704.5,600 705,599.7 705.5,596 706,600.3 706.5,602.1 707,602 707.5,600.8 708,602.1 708.5,602.9 709,602.2 709.5,603.1 710,604 710.5,604.1 711,604.4 711,605.6 710.5,605.9 710,606 709.5,606.7 709,607.4 708.5,607.1 708,608.1 707.5,609 707,608.3 706.5,607.7 706,609.3 705.5,613.3 705,611.2 704.5,610.5 704,611.3 703.5,609.9 703,609 702.5,610.1 702,613.8 701.5,612.4 701,615 700.5,612.2 700,611.7 699.5,609.9 699,611.4 698.5,614.8 698,613.1 697.5,614 697,610.6 696.5,608.1 696,608.2 695.5,609.3 695,608.7 694.5,609.1 694,609.8 693.5,609.1 693,609.4 692.5,608.8 692,609.5 691.5,609.7 691,609.7 690.5,610.2 690,608.8 689.5,608.8 689,608.3 688.5,609.9 688,612.9 687.5,610.5 687,609.5 686.5,608.7 686,608.5 685.5,609.5 685,610.3 684.5,610.4 684,611.8 683.5,610.1 683,608.9 682.5,611.5 682,613.5 681.5,611.6 681,609.5 680.5,611.1 680,608.4 679.5,608.9 679,609.9 678.5,609 678,609.3 677.5,609 677,609 676.5,610.3 676,609.4 675.5,608 675,610.6 674.5,612.5 674,610.3 673.5,608.6 673,607.9 672.5,607.7 672,608.3 671.5,608.9 671,608.8 670.5,609.3 670,608.1 669.5,607.3 669,610.3 668.5,612.9 668,610.4 667.5,608.3 667,608.9 666.5,608 666,607.7 665.5,608.5 665,608.5 664.5,609.7 664,608.2 663.5,606.8 663,608.1 662.5,608.9 662,609.6 661.5,610.6 661,608.9 660.5,607.1 660,607.1 659.5,607.8 659,607.7 658.5,608.4 658,608.2 657.5,607.4 657,607.4 656.5,608 656,607.9 655.5,608.2 655,608.4 654.5,609.6 654,608.1 653.5,607.5 653,608.6 652.5,608.3 652,607.7 651.5,607.2 651,607.5 650.5,607 650,606.8 649.5,607.4 649,607.3 648.5,607.4 648,607.6 647.5,607.2 647,606.8 646.5,607.2 646,607.7 645.5,607.3 645,607.4 644.5,606.6 644,606.7 643.5,606.6 643,607.3 642.5,608.3 642,609 641.5,608.3 641,607.1 640.5,606.4 640,606.8 639.5,607.7 639,607.3 638.5,607.1 638,607 637.5,606.5 637,606.3 636.5,607.2 636,608 635.5,607.4 635,606.9 634.5,606.4 634,606.8 633.5,607.1 633,606.9 632.5,607.9 632,606.9 631.5,606.6 631,605.4 630.5,605Z" fill="#484848"/><path d="M366,688.1 366.5,687 367,686 367.5,685.4 368,685.7 368.5,685 369,684.1 369.5,685.2 370,685.8 370.5,685.1 371,685.3 371.5,684.8 372,685.1 372.5,685 373,684.4 373.5,684.8 374,685.5 374.5,684.7 375,684.6 375.5,684.1 376,685 376.5,686 377,685.6 377.5,685 378,684.9 378.5,685.5 379,685.8 379.5,685.2 380,685 380.5,684 381,684.7 381.5,685.1 382,684.6 382.5,683.8 383,684.5 383.5,685.2 384,685.5 384.5,684.9 385,684.7 385.5,685.1 386,684.8 386.5,684.9 387,684.3 387.5,684.9 388,685.3 388.5,684.3 389,685.4 389.5,685.2 390,684.3 390.5,685 391,685.9 391.5,685.2 392,684.2 392.5,685.1 393,685.3 393.5,685.9 394,685.1 394.5,684.3 395,685.1 395.5,684.8 396,684.8 396.5,685.2 397,684.8 397.5,685 398,685.2 398.5,685.2 399,684.5 399.5,684.5 400,683.9 400.5,683.2 401,682.6 401.5,683 402,683.4 402.5,682.7 403,682.6 403.5,683.2 404,682.3 404.5,682.4 405,682.3 405.5,682.8 406,683 406.5,682.3 407,681.8 407.5,681.4 408,682.4 408.5,682.2 409,682.1 409.5,681.5 410,681.5 410.5,682.7 411,682.3 411.5,682.6 412,683.3 412.5,683.1 413,682.1 413.5,682.8 414,681.6 414.5,681.8 415,681.7 415.5,682.9 416,682.2 416.5,681.4 417,681.8 417.5,681.7 418,682.3 418.5,683.2 419,681.8 419.5,683.3 420,683.1 420.5,683 421,683.2 421.5,682.2 422,683.6 422.5,683.2 423,681.9 423.5,683.3 424,682 424.5,682.9 425,683.4 425.5,682 426,682.2 426.5,682.4 427,682.9 427.5,683.1 428,682.7 428.5,681.5 429,683 429.5,682.5 430,681.7 430.5,682.7 431,683.6 431.5,682.8 432,683 432.5,683.8 433,682.9 433.5,683 434,683.3 434.5,682.2 435,682.3 435.5,681.5 436,683.3 436.5,682.8 437,683 437.5,683.2 438,682.4 438.5,683.2 439,683.5 439.5,682.7 440,682.9 440.5,684.1 441,682 441.5,683.5 442,684.4 442.5,684.4 443,685 443.5,685.2 444,684.9 444.5,684.1 445,685 445.5,686.1 446,685.6 446.5,684.8 447,685.7 447.5,685.9 448,686 448.5,686.3 449,686 449.5,686.1 450,685.8 450.5,685.1 451,684.3 451.5,685.5 452,685.9 452.5,685.7 453,684.6 453.5,685.8 454,686.5 454.5,685.9 455,686.5 455.5,686.5 456,686.2 456.5,685.8 457,686.1 457.5,687 458,686.3 458.5,685.6 459,685.9 459.5,685 460,685.9 460.5,685.5 461,684.8 461.5,685.8 462,685.2 462.5,684.1 463,684.5 463.5,683.7 464,684.9 464.5,684.5 465,685.6 465.5,686 466,685.3 466.5,685 467,685.3 467.5,685 468,685.4 468.5,685.9 469,685.1 469.5,684.4 470,684.8 470.5,684.2 471,685.3 471.5,685.9 472,685.4 472.5,685.4 473,684.9 473.5,685.2 474,685.4 474.5,685.9 475,685.5 475.5,684.6 476,684.3 476.5,684.6 477,684.8 477.5,684.7 478,683.6 478.5,683.4 479,681.8 479.5,683.2 480,683.8 480.5,682.7 481,683.7 481.5,684.2 482,684.1 482.5,683.8 483,683.2 483.5,683.4 484,683 484.5,683.6 485,683.3 485.5,683.8 486,684.2 486.5,683.4 487,682.1 487.5,681.4 488,683.4 488.5,683.6 489,683.2 489.5,682.9 490,681.7 490.5,682.8 491,684.1 491.5,683 492,683.5 492.5,683.7 493,684 493.5,682.7 494,682.5 494.5,683 495,682.8 495.5,683.5 496,683.1 496.5,681.4 497,682.8 497.5,684.6 498,683.6 498.5,682.1 499,683.4 499.5,683.9 500,683.5 500.5,684.5 501,684.5 501.5,683.6 502,683.3 502.5,684.1 503,682.4 503.5,681.3 504,683 504.5,683 505,681.4 505.5,683.2 506,683.3 506.5,683.9 507,684 507.5,682.8 508,681.4 508.5,682.6 509,681.6 509.5,682.7 510,682.3 510.5,682.9 511,682.8 511.5,681.9 512,682.8 512.5,681.1 513,682.7 513.5,682.6 514,680.2 514.5,678.8 515,679.8 515.5,681.4 516,683 516.5,682.2 517,681.4 517.5,683.5 518,682.4 518.5,681.9 519,682.9 519.5,683.9 520,682.4 520.5,679.7 521,681.9 521.5,681.8 522,683 522.5,682.1 523,681.2 523.5,682.8 524,683.6 524.5,682.2 525,680.1 525.5,682.6 526,682.3 526.5,683.1 527,682.3 527.5,683.8 528,682.4 528.5,680.9 529,678.8 529.5,681.4 530,683.6 530.5,681 531,678.9 531.5,681.9 532,683.5 532.5,682.3 533,683 533.5,681.9 534,677.7 534.5,680.7 535,679.6 535.5,682.7 536,683.9 536.5,682.7 537,681.8 537.5,680.1 538,682.6 538.5,684.1 539,683.1 539.5,682.5 540,683.1 540.5,684 541,683.6 541.5,682.7 542,682.9 542.5,681.8 543,680.2 543.5,681.3 544,683.1 544.5,682.4 545,682.6 545.5,681.8 546,682.4 546.5,682.8 547,682.6 547.5,681.6 548,681 548.5,679.5 549,679.9 549.5,679 550,681.5 550.5,684.5 551,682.4 551.5,680.8 552,682.6 552.5,682.9 553,682.1 553.5,681.1 554,679.7 554.5,680.7 555,682.3 555.5,683.1 556,682.4 556.5,682.7 557,682.1 557.5,681.7 558,682.6 558.5,680.8 559,681.1 559.5,679 560,681 560.5,681.2 561,681.7 561.5,679.7 562,677.7 562.5,680.1 563,681.8 563.5,680.7 564,678.9 564.5,679.1 565,680.7 565.5,682.4 566,682.4 566.5,683.3 567,681.5 567.5,681 568,682.2 568.5,684 569,683 569.5,681.5 570,683 570.5,681.6 571,682.7 571.5,681.5 572,682.1 572.5,681.2 573,681.6 573.5,682.8 574,681.2 574.5,681.4 575,681.3 575.5,678.7 576,680.2 576.5,681.7 577,681.6 577.5,681 578,679.8 578.5,680.6 579,680.7 579.5,679 580,681.5 580.5,683.5 581,680.8 581.5,678.5 582,681.1 582.5,681.1 583,679.7 583.5,681.7 584,681.6 584.5,682.7 585,681.8 585.5,679.8 586,681.8 586.5,684 587,682.4 587.5,682.7 588,680.9 588.5,679.1 589,680.7 589.5,680.8 590,681.9 590.5,682.5 591,680.5 591.5,677.8 592,680 592.5,681.5 593,680.7 593.5,679 594,680.7 594.5,681.6 595,681.1 595.5,681.1 596,682.1 596.5,680.9 597,682.6 597.5,681.3 598,680.5 598.5,679.9 599,680.3 599.5,678.9 600,681.1 600.5,682.8 601,680.2 601.5,681.6 602,683.2 602.5,681.5 603,681 603.5,681.6 604,680.1 604.5,682.3 605,681.9 605.5,681.6 606,679.8 606.5,678 607,679.8 607.5,680.5 608,679.7 608.5,681 609,683.4 609.5,681 610,679.3 610.5,680.1 611,680.5 611.5,682.1 612,680.3 612.5,681.1 613,680.5 613.5,681 614,679.4 614.5,678 615,679.5 615.5,680.2 616,681.1 616.5,682.6 617,681.2 617.5,682.2 618,681.2 618.5,680.4 619,681.4 619.5,681.5 620,680.2 620.5,678.7 621,680.1 621.5,681.7 622,681.1 622.5,680.5 623,681.1 623.5,679.8 624,678.9 624.5,680.9 625,682.2 625.5,682.3 626,681.4 626.5,681.4 627,682.3 627.5,680.6 628,679.9 628.5,681.1 629,682.8 629.5,683 630,682.2 630.5,681.8 631,682.2 631.5,681.1 632,681.6 632.5,680.7 633,680.1 633.5,679.3 634,680.3 634.5,682.3 635,681.9 635.5,682.6 636,682.7 636.5,681.1 637,681.5 637.5,680.4 638,681.2 638.5,680.3 639,681.2 639.5,681.7 640,682.2 640.5,680.9 641,678.6 641.5,678.1 642,681.7 642.5,681.6 643,682 643.5,682.7 644,682.5 644.5,682.2 645,682.5 645.5,682.7 646,683.2 646.5,682.6 647,682.2 647.5,680.2 648,679.4 648.5,677.4 649,679.7 649.5,680.3 650,678.8 650.5,679.6 651,678.4 651.5,678 652,680.9 652.5,682.6 653,682.6 653.5,682.4 654,680.9 654.5,680.1 655,681.1 655.5,681.8 656,680.7 656.5,679.2 657,681.2 657.5,679.9 658,678 658.5,681.1 659,682 659.5,680.6 660,682.6 660.5,682.5 661,682 661.5,682.2 662,682.3 662.5,681.1 663,679 663.5,681.3 664,681.9 664.5,682.2 665,681.6 665.5,680.1 666,679 666.5,680.9 667,681 667.5,680 668,681.8 668.5,682.5 669,682.4 669.5,683 670,682.6 670.5,681.4 671,681.9 671.5,683.4 672,681.9 672.5,680.6 673,680.1 673.5,682 674,681.8 674.5,681.3 675,680.8 675.5,683.5 676,681 676.5,682.2 677,682.8 677.5,682.6 678,682.1 678.5,682.9 679,681.7 679.5,681.6 680,681.6 680.5,682.4 681,681.1 681.5,680.9 682,681.1 682.5,681.9 683,681.8 683.5,682.2 684,683.2 684.5,682.5 685,680.8 685.5,681.9 686,681.8 686.5,681.1 687,680.7 687.5,680.9 688,680.7 688.5,681.8 689,680.4 689.5,682 690,681.9 690.5,681.3 691,680.4 691.5,680.3 692,677.9 692.5,681.6 693,681.3 693.5,681.2 694,680.3 694.5,680.7 695,680.6 695.5,679.6 696,680.2 696.5,682.7 697,682.1 697.5,681 698,681.1 698.5,681 699,681.2 699.5,681.9 700,682.1 700.5,680.4 701,681.7 701.5,683.6 702,681.6 702.5,680.3 703,682.1 703.5,683 704,682.3 704.5,680.4 705,681.3 705.5,680.8 706,678.9 706.5,681.2 707,683.3 707.5,683.2 708,682.5 708.5,682.1 709,682 709.5,678.9 710,681.1 710.5,681.5 711,682.1 711.5,680.6 712,681.4 712.5,680.5 713,678.8 713.5,680 714,679.3 714.5,681.8 715,682.4 715.5,683 716,683.5 716.5,682.1 717,681.9 717.5,682.7 718,682.9 718.5,682 719,681.5 719.5,681.5 720,681.8 720.5,681.7 721,681.2 721.5,680.1 722,682 722.5,681 723,680.5 723.5,682.1 724,681.8 724.5,682.3 725,682.8 725.5,681.7 726,681.8 726.5,681.5 727,681.6 727.5,683.9 728,680.9 728.5,679.2 729,680 729.5,679.5 730,680.2 730.5,679.2 731,681.1 731.5,681.6 732,681.9 732.5,680.2 733,681.6 733.5,682 734,682.5 734.5,682.8 735,681.8 735.5,682.4 736,682.5 736.5,680.7 737,679.2 737.5,680.5 738,681 738.5,680.6 739,679.7 739.5,681.6 740,681.5 740.5,682.6 741,682.9 741.5,681.7 742,679.9 742.5,680.7 743,678.7 743.5,680.8 744,681 744.5,681.6 745,681.7 745.5,682.1 746,681.2 746.5,678.5 747,680.7 747.5,682.1 748,681.3 748.5,680.5 749,681.1 749.5,680.1 750,680.8 750.5,681 751,681.2 751.5,681.2 752,682.1 752.5,680.8 753,680.8 753.5,680.2 754,677.3 754.5,679.8 755,682 755.5,681.4 756,681.9 756.5,680.5 757,681.9 757.5,681.4 758,681.8 758.5,682.9 759,682.7 759.5,681.3 760,682 760.5,681.4 761,681.4 761.5,682.9 762,681.1 762.5,681.6 763,681.9 763.5,680.5 764,678.4 764.5,680.5 765,681.2 765.5,682.2 766,680.8 766.5,681.1 767,682 767.5,680.5 768,681.2 768.5,680.6 769,680.4 769.5,680.8 770,681 770.5,681.3 771,679.8 771.5,678.4 772,680.5 772.5,680.9 773,680.8 773.5,681.9 774,681.6 774.5,681.4 775,682 775.5,680.9 776,682.3 776.5,683.4 777,680.7 777.5,679.3 778,680.5 778.5,683.1 779,682.8 779.5,682.1 780,682.9 780.5,680.7 781,679.6 781.5,681.7 782,680.7 782.5,679.7 783,681.4 783.5,681.7 784,682.3 784.5,682.3 785,681.5 785.5,680 786,678.3 786.5,680.5 787,681 787.5,681.3 788,682 788.5,681.6 789,681.7 789.5,681.8 790,681.5 790.5,679.8 791,681.3 791.5,682.6 792,682.1 792.5,683.2 793,682.3 793.5,681 794,680.6 794.5,679.7 795,680.5 795.5,681.2 796,680.8 796.5,681.7 797,680.5 797.5,681.9 798,681.8 798.5,679.8 799,681.7 799.5,681.7 800,679.1 800.5,681.6 801,682.6 801.5,681.8 802,681 802.5,681.2 803,683.6 803.5,682.8 804,682.2 804.5,681.9 805,680.9 805.5,681.8 806,681.7 806.5,683 807,682 807.5,682.5 808,682.4 808.5,682.5 809,682.7 809.5,681.9 810,680.8 810.5,679.8 811,680.2 811.5,679.3 812,681 812.5,682 813,682.2 813.5,682.1 814,681.4 814.5,679.8 815,681 815.5,681.8 816,682 816.5,680.9 817,682.4 817.5,680.9 818,679.7 818.5,680.2 819,681.8 819.5,680.7 820,679.4 820.5,680.7 821,682.6 821.5,682.2 822,681.8 822.5,683.2 823,683.7 823.5,682.5 824,682 824.5,684.2 825,685.4 825.5,685.6 826,686.5 826.5,686.3 827,686.6 827.5,686.7 828,686.4 828.5,686.7 829,686.7 829.5,686.1 830,686.4 830.5,686.3 831,685.9 831.5,686.4 832,686.6 832.5,686.6 833,686.5 833.5,686 834,686.3 834.5,686.4 835,686.3 835.5,686.8 836,686.3 836.5,686.6 837,686.2 837.5,685.4 838,686.4 838.5,686.9 839,686.7 839.5,686.5 840,686.6 840.5,686.5 841,686.4 841.5,685.8 842,686.3 842.5,686.3 843,685.9 843.5,685.3 844,685.9 844.5,686.4 845,685.4 845.5,684.8 846,684 846.5,683.7 847,683.6 847.5,682.3 848,682.1 848.5,682.2 849,683 849.5,682.5 850,681.9 850.5,682.8 851,682.3 851.5,681.6 852,680.4 852.5,681.3 853,681.8 853.5,681.3 854,680.3 854.5,678 855,680.5 855.5,681.5 856,680.2 856.5,681.3 857,680.8 857.5,681.3 858,680.7 858.5,682 859,682.3 859.5,681.5 860,681.1 860.5,681.1 861,681.6 861.5,682.1 862,681.8 862.5,681 863,680.6 863.5,682 864,680.4 864.5,679.9 865,680.8 865.5,682.7 866,681.4 866.5,681.6 867,680.8 867.5,679.6 868,680.8 868.5,681.2 869,680.6 869.5,680.9 870,679.2 870.5,681.5 871,681.5 871.5,679.7 872,681.9 872.5,681 873,679.8 873.5,681.6 874,683.5 874.5,682.7 875,682.1 875.5,681.9 876,681.6 876.5,681.8 877,681.4 877.5,682.7 878,682.5 878.5,681.5 879,681.7 879.5,682.2 880,682.2 880.5,681.1 881,680.1 881.5,681.9 882,681.5 882.5,681 883,680 883.5,680.7 884,679.8 884.5,681.4 885,680.7 885.5,678.6 886,681.5 886.5,682.2 887,682.7 887.5,682.8 888,681.8 888.5,680.8 889,679.2 889.5,680.5 890,679.2 890.5,680.7 891,678.9 891.5,681.7 892,683.5 892.5,681.3 893,683.1 893.5,683.3 894,682.1 894.5,682.4 895,682.7 895.5,679.8 896,682.4 896.5,684.3 897,683.1 897.5,681.4 898,682.8 898.5,681 899,678.7 899.5,681.1 900,685.1 900.5,682.2 901,678.9 901.5,681.8 902,682.3 902.5,680.7 903,682.6 903.5,682.9 904,680.6 904.5,682.4 905,681.3 905.5,682.7 906,684.9 906.5,682.9 907,681.9 907.5,682.9 908,683.7 908.5,682.6 909,680.4 909.5,680 910,678.5 910.5,680.9 911,681.3 911.5,680.4 912,682.3 912.5,684 913,683.3 913.5,682.5 914,682.3 914.5,681.6 915,682.6 915.5,682 916,681.6 916.5,680.1 917,680.8 917.5,679.4 918,680.9 918.5,682 919,681.2 919.5,682.1 920,682.4 920.5,682 921,682.8 921.5,683.1 922,682.9 922.5,681.6 923,682 923.5,682.2 924,682 924.5,682 925,682.5 925.5,683.7 926,682.7 926.5,681.7 927,680.7 927.5,682 928,682.3 928.5,681.6 929,681.8 929.5,681.5 930,678.9 930.5,680.2 931,679.9 931.5,682 932,682.4 932.5,682.2 933,681.8 933.5,681.9 934,680.2 934.5,679.2 935,681.1 935.5,682.1 936,682.7 936.5,682.8 937,680.8 937.5,679.3 938,680.9 938.5,679.4 939,679.9 939.5,678.4 940,680.4 940.5,682.3 941,680.8 941.5,678.2 942,680.7 942.5,680.7 943,682.7 943.5,683.3 944,681.7 944.5,680.3 945,681.8 945.5,683.5 946,682.4 946.5,681.3 947,682.2 947.5,682 948,683 948.5,682.5 949,680.6 949.5,679.1 950,681.7 950.5,682.6 951,679 951.5,681.6 952,680.5 952.5,678.6 953,680.6 953.5,682.9 954,683 954.5,682.5 955,683 955.5,683 956,680.7 956.5,680.5 957,681.6 957.5,681.4 958,681.7 958.5,681.7 959,681.3 959.5,680.1 960,681.3 960.5,681.7 961,680 961.5,681.5 962,681.1 962.5,680.6 963,679.3 963.5,680.9 964,682.1 964.5,680.2 965,680.7 965.5,681.1 966,681.4 966.5,681.8 967,682.4 967.5,682.3 968,682.9 968.5,681.5 969,679.4 969.5,680.7 970,678.8 970.5,681.6 971,682.2 971.5,679.8 972,682 972.5,683.2 973,682.6 973.5,682.9 974,681.3 974.5,679.7 975,681.7 975.5,682.8 976,681.3 976.5,682 977,681.2 977.5,679 978,681 978.5,681.4 979,682.2 979.5,680.3 980,679.5 980.5,682.1 981,682.8 981.5,684.2 982,683.2 982.5,682 983,683.2 983.5,684.7 984,682.7 984.5,682.4 985,682.6 985.5,682.7 986,680.3 986.5,682.6 987,683.6 987.5,683.3 988,684.1 988.5,684.4 989,683.3 989.5,683.7 990,683.3 990.5,683.1 991,682.1 991.5,682.6 992,682.2 992.5,682.7 993,682.3 993.5,683.5 994,683.8 994.5,684.6 995,685 995.5,684.9 996,685.1 996.5,685.8 997,685.6 997.5,685.6 998,685.8 998.5,685.5 999,685.7 999.5,685.8 1000,685.7 1000.5,685.9 1001,685.3 1001.5,686 1002,686.3 1002.5,686.8 1003,686.4 1003.5,686.5 1004,687.1 1004.5,687 1005,687.3 1005.5,687.4 1006,687.2 1006.5,687.2 1007,687.5 1007.5,687.6 1008,687.8 1008.5,687.9 1009,688.1 1009.5,688.4 1010,688.4 1010.5,688.5 1011,688.7 1011,689.5 1010.5,689.6 1010,689.6 1009.5,689.9 1009,690.1 1008.5,690.2 1008,690.3 1007.5,690.5 1007,690.6 1006.5,690.8 1006,690.9 1005.5,690.7 1005,690.7 1004.5,690.9 1004,690.9 1003.5,691.1 1003,691.6 1002.5,691.3 1002,691.6 1001.5,692 1001,692.6 1000.5,692.2 1000,692.2 999.5,692.3 999,692.2 998.5,692.5 998,692.3 997.5,692.9 997,692.5 996.5,693.3 996,693.1 995.5,693.1 995,693.5 994.5,693.2 994,694 993.5,694.7 993,695.7 992.5,695.2 992,695.3 991.5,695.1 991,695.9 990.5,695.5 990,693.5 989.5,694.1 989,694.7 988.5,693.8 988,694.4 987.5,694.7 987,694.2 986.5,695.3 986,697.4 985.5,695.8 985,694.4 984.5,695.5 984,694.5 983.5,693.2 983,695.2 982.5,696.3 982,695.5 981.5,695 981,695.2 980.5,697 980,699.4 979.5,698.1 979,695.7 978.5,696.7 978,696.8 977.5,698 977,696.3 976.5,696.2 976,696.6 975.5,695.3 975,696.9 974.5,699.2 974,696.7 973.5,695.1 973,695.4 972.5,694.9 972,695.6 971.5,698.1 971,696 970.5,695.5 970,699.5 969.5,698 969,698.5 968.5,696.8 968,695 967.5,695.8 967,695.7 966.5,696.1 966,696.9 965.5,695.3 965,697 964.5,697.8 964,696.8 963.5,697 963,698.9 962.5,697.2 962,696.8 961.5,696.5 961,696.2 960.5,696 960,696.4 959.5,696.4 959,696.9 958.5,696.2 958,696.2 957.5,696.5 957,695.6 956.5,696 956,695.3 955.5,694.3 955,695.3 954.5,695.5 954,695.2 953.5,696.1 953,697.2 952.5,699.8 952,697.5 951.5,696.9 951,699.3 950.5,696.1 950,696.6 949.5,699 949,696.9 948.5,695.5 948,695.5 947.5,696 947,696 946.5,696.4 946,695.5 945.5,695.3 945,696.4 944.5,697.7 944,696.4 943.5,694.5 943,695.8 942.5,697.2 942,697.5 941.5,700.4 941,697.7 940.5,696.7 940,697.7 939.5,700.3 939,698.7 938.5,699.5 938,698 937.5,698.7 937,696.8 936.5,693.4 936,695 935.5,696.1 935,697.7 934.5,699.6 934,697.1 933.5,695 933,695.6 932.5,695 932,695.5 931.5,695.6 931,698 930.5,697.7 930,700 929.5,697.5 929,695.7 928.5,696.4 928,696 927.5,696 927,697.2 926.5,695.5 926,693.6 925.5,694.6 925,695.8 924.5,696 924,696.1 923.5,696.1 923,695.8 922.5,696.5 922,696 921.5,693.9 921,694.9 920.5,696.1 920,695 919.5,694.9 919,696.8 918.5,695.5 918,695.4 917.5,698.2 917,697.1 916.5,698.7 916,696.4 915.5,696 915,695.2 914.5,696.4 914,695.4 913.5,695.5 913,695 912.5,694.3 912,696 911.5,698 911,695.7 910.5,697.3 910,698.9 909.5,697.4 909,697.6 908.5,695.6 908,693.8 907.5,695.5 907,695.9 906.5,694.4 906,694.7 905.5,694.5 905,696.5 904.5,695.4 904,697.9 903.5,695 903,695.6 902.5,697.5 902,695.4 901.5,696.5 901,699.9 900.5,697.2 900,695.7 899.5,697 899,698.4 898.5,696.8 898,695.7 897.5,696.7 897,696 896.5,693.6 896,695.7 895.5,697.6 895,695.3 894.5,695.2 894,696 893.5,695 893,695 892.5,696.8 892,695.5 891.5,696.1 891,699 890.5,697.6 890,698.4 889.5,697.4 889,698.9 888.5,696 888,693.2 887.5,694.6 887,695.3 886.5,693.9 886,696.6 885.5,699.9 885,696.8 884.5,695.8 884,698.5 883.5,697.5 883,697.9 882.5,696.8 882,696.4 881.5,696.7 881,698.2 880.5,696.1 880,695.5 879.5,695.7 879,695.5 878.5,695.3 878,696.6 877.5,695.9 877,696.7 876.5,696.3 876,696.7 875.5,696.9 875,696 874.5,696 874,696.3 873.5,696.8 873,699 872.5,696.8 872,696.7 871.5,698.7 871,697 870.5,696.4 870,699 869.5,697.2 869,697.3 868.5,695.5 868,697 867.5,698.2 867,696.3 866.5,696.2 866,696.6 865.5,697 865,697.3 864.5,698.3 864,696.9 863.5,695.9 863,697 862.5,696.7 862,696 861.5,696.2 861,696.4 860.5,696.3 860,697.1 859.5,696.6 859,696.6 858.5,695.9 858,696.1 857.5,696.9 857,697.3 856.5,696.8 856,697.6 855.5,696.1 855,698.1 854.5,699 854,697.4 853.5,696.6 853,696.5 852.5,696.8 852,697.4 851.5,696.2 851,694.9 850.5,695.9 850,696 849.5,695.2 849,695.2 848.5,694.9 848,695.9 847.5,695.6 847,695.2 846.5,693.9 846,693.8 845.5,693.2 845,692.8 844.5,691.1 844,691.5 843.5,692.3 843,691.7 842.5,691.8 842,692 841.5,692.6 841,691.8 840.5,691.2 840,691.3 839.5,691.5 839,691.4 838.5,691.3 838,691.6 837.5,692.4 837,691.6 836.5,691.1 836,691.7 835.5,691.3 835,691 834.5,691.2 834,691.2 833.5,692 833,691.2 832.5,691.2 832,691.6 831.5,691.6 831,692.1 830.5,691.7 830,691.5 829.5,692 829,691.6 828.5,691.1 828,691.5 827.5,691.2 827,691.6 826.5,691.8 826,691.6 825.5,692.7 825,691.9 824.5,694.4 824,695.4 823.5,695.3 823,694.9 822.5,695.9 822,696.6 821.5,695.6 821,696.1 820.5,697.1 820,698.6 819.5,697 819,696.9 818.5,698.5 818,698.5 817.5,697.2 817,695.5 816.5,696.2 816,695.8 815.5,694.1 815,696.3 814.5,698.2 814,696.7 813.5,694.6 813,695.5 812.5,696 812,697.4 811.5,698.3 811,697.5 810.5,697.9 810,696.9 809.5,694.8 809,696.8 808.5,696.7 808,695.1 807.5,695.5 807,695.5 806.5,695.7 806,696.5 805.5,696.5 805,697.1 804.5,696.7 804,695.9 803.5,695.2 803,694.5 802.5,696.1 802,696.7 801.5,695.6 801,695.9 800.5,697 800,699.4 799.5,696.7 799,696.3 798.5,698.5 798,696.9 797.5,695.2 797,697.1 796.5,696.6 796,697.7 795.5,697 795,697.4 794.5,698.9 794,697.1 793.5,696.6 793,695.6 792.5,695.3 792,696 791.5,695.1 791,695.9 790.5,697.8 790,696.7 789.5,695.9 789,696.3 788.5,695.8 788,695.9 787.5,695.9 787,695.7 786.5,697.5 786,698.8 785.5,697.6 785,696.3 784.5,696.2 784,695.2 783.5,694.1 783,696.5 782.5,698.5 782,696.5 781.5,697.5 781,698.7 780.5,697.4 780,696.1 779.5,696.9 779,697.2 778.5,697.2 778,698 777.5,699.1 777,697.6 776.5,695.1 776,695.9 775.5,697.3 775,696.6 774.5,696.8 774,696.3 773.5,696.6 773,697.1 772.5,696 772,697.7 771.5,699.8 771,697.6 770.5,696.6 770,697 769.5,697.5 769,697.7 768.5,696.9 768,697.1 767.5,697.4 767,696.1 766.5,697.5 766,697.7 765.5,696.2 765,695.7 764.5,698.3 764,699.3 763.5,697.2 763,697.2 762.5,697 762,696.8 761.5,695.5 761,698.1 760.5,696.6 760,696.2 759.5,695.8 759,696.1 758.5,693.9 758,696.4 757.5,696.7 757,697.2 756.5,697.8 756,696.5 755.5,696.9 755,695.3 754.5,696.1 754,699.8 753.5,697.6 753,697.5 752.5,696.7 752,695.3 751.5,695 751,695.8 750.5,697.2 750,696.9 749.5,698.3 749,697.2 748.5,697.2 748,696 747.5,696.1 747,697.3 746.5,699.4 746,696.7 745.5,695.9 745,696.8 744.5,696.1 744,697.3 743.5,697.5 743,699 742.5,697.8 742,698.3 741.5,696.8 741,696.2 740.5,695.4 740,696.1 739.5,696.9 739,699.2 738.5,698 738,697.6 737.5,697.4 737,699.3 736.5,697.6 736,695.6 735.5,696.9 735,696.3 734.5,695.6 734,696.3 733.5,696 733,696.9 732.5,697.4 732,696.5 731.5,696.5 731,696.6 730.5,698.4 730,697.9 729.5,698.5 729,697.9 728.5,698.5 728,696 727.5,695.8 727,695.7 726.5,696.5 726,695.9 725.5,696.3 725,695.7 724.5,696.5 724,696.2 723.5,696.1 723,697.5 722.5,696.3 722,697.3 721.5,698.7 721,697 720.5,696.2 720,696.1 719.5,695.9 719,696.7 718.5,695.6 718,694.4 717.5,696 717,696.2 716.5,695.7 716,694.5 715.5,695.4 715,695.6 714.5,696.3 714,698.7 713.5,698 713,700.1 712.5,698.1 712,697.2 711.5,698 711,696.1 710.5,694.9 710,696.4 709.5,699.8 709,697 708.5,695.1 708,695.5 707.5,694.7 707,695.5 706.5,697.1 706,698.8 705.5,697.2 705,696.6 704.5,698.4 704,696 703.5,695.8 703,696.7 702.5,698.5 702,697.7 701.5,696.9 701,697.3 700.5,698 700,696.1 699.5,696.4 699,696.7 698.5,696.7 698,696.2 697.5,696.8 697,696.1 696.5,696.2 696,698.3 695.5,699.1 695,698.1 694.5,697.6 694,697.7 693.5,697.6 693,696.9 692.5,697 692,699.7 691.5,697.2 691,697.3 690.5,697.2 690,694.3 689.5,695.7 689,697.2 688.5,696.1 688,697.1 687.5,696.7 687,696.6 686.5,696.3 686,696.3 685.5,695.6 685,695 684.5,695.3 684,696.3 683.5,695.6 683,696.3 682.5,695.8 682,696.5 681.5,697.2 681,696.1 680.5,696.1 680,696.2 679.5,696.3 679,696.3 678.5,696.4 678,695.8 677.5,695.9 677,695.3 676.5,695.8 676,695.4 675.5,695 675,695.9 674.5,696.6 674,695.7 673.5,695.9 673,698 672.5,696.2 672,695.3 671.5,694.9 671,695.6 670.5,696.5 670,696.3 669.5,694.8 669,695.5 668.5,694.9 668,696.6 667.5,698.2 667,696.6 666.5,697.6 666,700.4 665.5,698.7 665,696.2 664.5,695.7 664,695.3 663.5,697.5 663,699.3 662.5,697.3 662,695.2 661.5,695.9 661,695.8 660.5,695.5 660,695.4 659.5,697.4 659,695.4 658.5,696.1 658,698.9 657.5,697.4 657,696.9 656.5,698.5 656,696.9 655.5,696.3 655,695.9 654.5,698.1 654,697.1 653.5,695.1 653,695.4 652.5,694.1 652,697.1 651.5,699.8 651,699.3 650.5,698.3 650,699.4 649.5,696.9 649,697.1 648.5,700.1 648,697.6 647.5,698.1 647,696.2 646.5,696.5 646,696.3 645.5,696.1 645,695.8 644.5,695.9 644,695.8 643.5,695.4 643,694.4 642.5,696.4 642,696.4 641.5,700.1 641,699.2 640.5,696.2 640,695.4 639.5,696.1 639,696.1 638.5,697.7 638,697.3 637.5,697.6 637,696.8 636.5,696.2 636,694.8 635.5,695.4 635,696 634.5,696.9 634,698.3 633.5,699.3 633,698.1 632.5,697 632,696.6 631.5,697.1 631,695.9 630.5,695 630,695.8 629.5,695.7 629,694.8 628.5,696.7 628,698.5 627.5,697.1 627,694.9 626.5,695.9 626,696.9 625.5,695.8 625,697.2 624.5,696.9 624,698.8 623.5,697.3 623,696.7 622.5,695.9 622,697.3 621.5,696.4 621,698.1 620.5,698.7 620,697.7 619.5,697 619,697.7 618.5,697.8 618,697.7 617.5,697.4 617,696.5 616.5,695.9 616,696.4 615.5,697.6 615,698.7 614.5,699.8 614,698.6 613.5,697.1 613,697.4 612.5,696.3 612,696.7 611.5,696 611,697.5 610.5,696.4 610,697.9 609.5,696.7 609,695.5 608.5,697.4 608,698.1 607.5,697.7 607,697.6 606.5,699.4 606,697.9 605.5,696.2 605,697 604.5,695.8 604,698 603.5,697.7 603,697.2 602.5,695.7 602,697.1 601.5,697.6 601,695.6 600.5,695.7 600,697 599.5,698.4 599,697.6 598.5,698.2 598,697.6 597.5,697.2 597,695.4 596.5,695.3 596,695.9 595.5,695.8 595,694.9 594.5,696.4 594,697.4 593.5,699.7 593,697.3 592.5,696.9 592,698.2 591.5,699.8 591,698 590.5,695.3 590,695.8 589.5,697.6 589,697.6 588.5,700.2 588,697.6 587.5,694.8 587,695.5 586.5,695 586,695.3 585.5,697.8 585,695.2 584.5,695 584,696.3 583.5,696.6 583,698.5 582.5,697.3 582,697.2 581.5,698.6 581,696.4 580.5,695.1 580,696.8 579.5,699.5 579,697.6 578.5,697.1 578,698.2 577.5,696.2 577,695.7 576.5,696.3 576,696.9 575.5,698.7 575,696.7 574.5,694.8 574,696.4 573.5,694.5 573,695.8 572.5,696.9 572,696.2 571.5,695.3 571,695.3 570.5,694.1 570,695.3 569.5,696.4 569,695.5 568.5,695.8 568,696 567.5,697 567,696.7 566.5,695.1 566,695.6 565.5,695.1 565,696.6 564.5,699 564,699.8 563.5,697.3 563,696.3 562.5,696.1 562,699.7 561.5,698 561,696.2 560.5,696.5 560,696.5 559.5,699.3 559,696.7 558.5,696.7 558,695.8 557.5,695.8 557,695.9 556.5,695.4 556,695.6 555.5,694.8 555,695 554.5,696.2 554,698.5 553.5,696.6 553,695.8 552.5,695.3 552,694.5 551.5,697.1 551,695.4 550.5,695.4 550,696.2 549.5,698.7 549,697.8 548.5,699.2 548,697.5 547.5,696.6 547,695.9 546.5,695.6 546,695.6 545.5,696.4 545,695.7 544.5,695.5 544,695.1 543.5,696.2 543,697.9 542.5,696.2 542,695.1 541.5,695.3 541,694.3 540.5,694.8 540,694.4 539.5,695.6 539,694.9 538.5,694.8 538,696.3 537.5,698.4 537,696.2 536.5,695.3 536,694.6 535.5,695.3 535,698.4 534.5,697.4 534,700.3 533.5,697 533,695 532.5,695.8 532,695.3 531.5,696.3 531,699.4 530.5,696.8 530,694.7 529.5,696.6 529,699.2 528.5,696.6 528,695 527.5,694.7 527,695.6 526.5,694.9 526,695.7 525.5,695.2 525,697.5 524.5,695.1 524,695.6 523.5,695.8 523,696.8 522.5,695.9 522,695.8 521.5,696.3 521,696.3 520.5,698.1 520,695.6 519.5,695.2 519,695.5 518.5,696 518,695.2 517.5,693.9 517,694.8 516.5,695.8 516,694.9 515.5,695.1 515,697.2 514.5,699.4 514,697.4 513.5,695.5 513,696.2 512.5,696.1 512,695.3 511.5,695.8 511,695.2 510.5,695.1 510,694.6 509.5,694.2 509,696.2 508.5,695.2 508,696.2 507.5,694.9 507,692.7 506.5,694.5 506,694.7 505.5,695.8 505,696.9 504.5,695.7 504,694.8 503.5,696.2 503,694.8 502.5,694.1 502,695 501.5,694.7 501,694.6 500.5,693.7 500,694.6 499.5,694 499,695.1 498.5,696.4 498,694.6 497.5,694.5 497,695.6 496.5,697.1 496,695.4 495.5,694.4 495,695 494.5,695 494,695.6 493.5,695.3 493,694.3 492.5,694.5 492,694.4 491.5,695.1 491,694.2 490.5,694.5 490,695.8 489.5,694.8 489,694.4 488.5,694.3 488,695.1 487.5,696 487,695.4 486.5,694.4 486,693.5 485.5,693.7 485,694.6 484.5,694.9 484,695.7 483.5,695.3 483,695.2 482.5,694.7 482,693.9 481.5,694.2 481,694.7 480.5,695.3 480,694 479.5,695.1 479,696 478.5,694.7 478,694.5 477.5,694.3 477,693.4 476.5,693.2 476,693.4 475.5,693.4 475,692.3 474.5,692.2 474,692.7 473.5,692.8 473,693.3 472.5,692.7 472,692.6 471.5,692.5 471,692.7 470.5,694 470,693.1 469.5,693.4 469,692.7 468.5,691.7 468,692.4 467.5,692.9 467,692.8 466.5,693.2 466,692.9 465.5,692.3 465,692.8 464.5,693.7 464,693.4 463.5,694.6 463,693.5 462.5,693.4 462,692.1 461.5,692.5 461,693.4 460.5,692.4 460,692.4 459.5,692.9 459,692.4 458.5,692.4 458,692.1 457.5,691.5 457,691.9 456.5,692.2 456,691.7 455.5,691.8 455,691.4 454.5,692.2 454,691.8 453.5,692.3 453,693.3 452.5,692.2 452,692.1 451.5,692.8 451,693.9 450.5,692.9 450,692.2 449.5,692 449,692 448.5,692 448,692.3 447.5,691.7 447,692.9 446.5,693.8 446,692.9 445.5,692.2 445,692.7 444.5,693.7 444,692.9 443.5,692.4 443,693.4 442.5,693.6 442,693.3 441.5,695.2 441,696.2 440.5,694.6 440,694.8 439.5,695.4 439,695.7 438.5,695.2 438,695.8 437.5,695.4 437,695.3 436.5,695.7 436,695.5 435.5,696.8 435,695.6 434.5,696 434,695.3 433.5,694.7 433,695.3 432.5,694.9 432,694.6 431.5,695.2 431,695.2 430.5,695.2 430,696.9 429.5,695.3 429,695.7 428.5,696.5 428,695.6 427.5,694.8 427,695.3 426.5,695.9 426,695.8 425.5,695 425,694.4 424.5,695.1 424,694.6 423.5,694.5 423,696 422.5,694.1 422,695.3 421.5,696 421,695.2 420.5,695 420,694 419.5,694.8 419,696.2 418.5,694.9 418,695.4 417.5,696.5 417,695.7 416.5,696.3 416,695 415.5,694.2 415,695.3 414.5,695.2 414,695.6 413.5,696.8 413,696.1 412.5,696.5 412,694.9 411.5,695.5 411,695.2 410.5,695.4 410,696.6 409.5,695.2 409,695.2 408.5,695.8 408,696 407.5,696.3 407,695.8 406.5,696.1 406,695.1 405.5,695.2 405,695.8 404.5,695.7 404,694.8 403.5,695.2 403,695.4 402.5,695 402,694.4 401.5,694.9 401,695.4 400.5,694.7 400,693.8 399.5,693.3 399,693.3 398.5,693.1 398,692.9 397.5,692.6 397,693.2 396.5,692.9 396,693.2 395.5,692.4 395,693.4 394.5,693.8 394,692.6 393.5,692.3 393,692.7 392.5,693.1 392,693.5 391.5,692.8 391,691.9 390.5,693.4 390,694 389.5,692.9 389,692.7 388.5,693.6 388,693.2 387.5,693.2 387,693.7 386.5,693.1 386,693.2 385.5,692.7 385,693.6 384.5,692.9 384,692.6 383.5,692.8 383,693.6 382.5,693.9 382,693.1 381.5,692.1 381,693.1 380.5,694 380,692.9 379.5,691.8 379,692.6 378.5,692.5 378,692.7 377.5,692.9 377,692.8 376.5,692.3 376,693.1 375.5,693.6 375,693 374.5,693.1 374,692.3 373.5,692.9 373,693.7 372.5,693.2 372,692.1 371.5,693.1 371,693 370.5,693.1 370,692.6 369.5,693.4 369,693.8 368.5,693.2 368,692.5 367.5,692.6 367,692.3 366.5,691 366,689.9Z" fill="#484848"/><path d="M371,772.9 371.5,772.8 372,772.7 372.5,772.4 373,772.1 373.5,772 374,771.9 374.5,771.8 375,771.6 375.5,771.2 376,771.2 376.5,771.4 377,771.5 377.5,770.9 378,770.9 378.5,771.2 379,770.9 379.5,770.4 380,770.3 380.5,770.4 381,769.3 381.5,770.1 382,769.2 382.5,769.6 383,768.8 383.5,769 384,768.2 384.5,768.9 385,768.3 385.5,769.2 386,768.1 386.5,767.7 387,768.1 387.5,768.1 388,767.3 388.5,767.7 389,768.8 389.5,767.2 390,767.8 390.5,768.1 391,768 391.5,767.9 392,767.3 392.5,767.9 393,766.6 393.5,766.5 394,767 394.5,766.4 395,767.4 395.5,766.9 396,765.7 396.5,766.5 397,766.3 397.5,766.4 398,767.7 398.5,767 399,766.9 399.5,766.4 400,766.3 400.5,765.9 401,766.1 401.5,766 402,765.4 402.5,765.9 403,765.6 403.5,766.3 404,766 404.5,761.9 405,761 405.5,762.3 406,761.9 406.5,761.5 407,760.4 407.5,760.6 408,760.1 408.5,761.1 409,760.4 409.5,761 410,760.5 410.5,761.2 411,760.3 411.5,763.1 412,761.8 412.5,760.2 413,760.7 413.5,762.4 414,760.8 414.5,760.5 415,760.6 415.5,760.9 416,763 416.5,761.5 417,759.9 417.5,762.7 418,764.7 418.5,763 419,761.2 419.5,761.8 420,760.9 420.5,759.1 421,759.5 421.5,760.5 422,760.1 422.5,764 423,761.5 423.5,761.6 424,760.3 424.5,759.4 425,760.9 425.5,762 426,760.3 426.5,761.8 427,761.1 427.5,758.8 428,761.1 428.5,760.6 429,762 429.5,758.7 430,760.9 430.5,761.1 431,759.7 431.5,760.1 432,759.8 432.5,760.6 433,760.2 433.5,760.1 434,759.7 434.5,761.7 435,760.6 435.5,760.4 436,761.3 436.5,761 437,761.8 437.5,762 438,761.2 438.5,759.8 439,760.3 439.5,760.2 440,759.7 440.5,760.5 441,760.4 441.5,760.2 442,759.1 442.5,770.4 443,771.9 443.5,772.3 444,772.4 444.5,772.7 444.5,773.3 444,773.6 443.5,773.6 443,773.8 442.5,775.3 442,785.5 441.5,785.9 441,784.3 440.5,784.5 440,782.2 439.5,782.5 439,784.2 438.5,784.9 438,784.3 437.5,781.7 437,784.3 436.5,785 436,785.4 435.5,785.8 435,785.5 434.5,784 434,784.5 433.5,786.1 433,784.7 432.5,783.6 432,786.3 431.5,785.2 431,785.9 430.5,783.9 430,785.4 429.5,785.4 429,786.2 428.5,784.3 428,786 427.5,785.2 427,786.3 426.5,786.6 426,784.2 425.5,783.3 425,783.6 424.5,786 424,785.6 423.5,784.1 423,784.4 422.5,783.8 422,782.3 421.5,784.7 421,785.1 420.5,785.3 420,786 419.5,784.6 419,785.4 418.5,784.4 418,785.1 417.5,785.9 417,785.8 416.5,785.6 416,783.9 415.5,785.1 415,784.2 414.5,785.5 414,783.5 413.5,783.4 413,783.6 412.5,786 412,783.4 411.5,784.1 411,786.1 410.5,784.7 410,785.7 409.5,784.9 409,785.6 408.5,784.9 408,785.6 407.5,784.6 407,784.6 406.5,782.8 406,781.1 405.5,783.1 405,785.3 404.5,784.9 404,780.2 403.5,780 403,780.3 402.5,780.8 402,779.6 401.5,779.9 401,780.6 400.5,780.2 400,779.8 399.5,779.7 399,779 398.5,779 398,778.4 397.5,778.5 397,779.9 396.5,779.4 396,779.2 395.5,779.1 395,778.9 394.5,779.1 394,779 393.5,779.5 393,778.4 392.5,778 392,778.7 391.5,777.9 391,777.2 390.5,777.7 390,778.1 389.5,778.2 389,777.4 388.5,778.4 388,778 387.5,777.2 387,777.1 386.5,778.2 386,777.1 385.5,777.3 385,777.5 384.5,777.3 384,777.8 383.5,777.1 383,777.1 382.5,776.7 382,776.5 381.5,776 381,777 380.5,776.3 380,776.3 379.5,775.9 379,775.5 378.5,775.1 378,775.1 377.5,775.1 377,775.1 376.5,774.6 376,774.8 375.5,774.6 375,774.3 374.5,774.2 374,774.1 373.5,774 373,773.9 372.5,773.6 372,773.3 371.5,773.2 371,773.1Z" fill="#484848"/><path d="M511,773 511.5,768.9 512,763.6 512.5,762.7 513,761.3 513.5,762.7 514,762.4 514.5,760.3 515,761.8 515.5,761.1 516,757.8 516.5,761.8 517,760.3 517.5,761.2 518,762.3 518.5,763.3 519,762.9 519.5,761.8 520,762.7 520.5,763.7 521,765.2 521.5,768.7 522,769.5 522.5,772.1 522.5,774 522,776.2 521.5,777.3 521,779.4 520.5,781.4 520,781.6 519.5,784.4 519,783.3 518.5,782.1 518,783.6 517.5,782.9 517,784.1 516.5,784.2 516,785.2 515.5,784.8 515,783 514.5,783.1 514,783.6 513.5,784.4 513,785.1 512.5,783.8 512,780.3 511.5,777.6 511,773Z" fill="#484848"/><path d="M552,765.8 552.5,761.6 553,761.5 553.5,761.5 554,760.1 554.5,760.8 555,762.5 555.5,759.6 556,761.2 556.5,760.3 557,760.5 557.5,760.2 558,762.2 558.5,762.8 559,761.9 559.5,761.4 560,762.1 560.5,760.6 561,761.7 561.5,762.4 562,759.5 562.5,760.3 563,759.2 563.5,760.6 564,761.4 564.5,763 565,761.2 565.5,761.6 566,761.1 566.5,760.1 567,761.1 567.5,759.8 568,761.7 568.5,758.9 569,761.7 569.5,761.3 570,760 570.5,761.7 571,761.1 571.5,760.3 572,759.9 572.5,761 573,762.6 573.5,761.7 574,762.8 574.5,761.1 575,761.4 575.5,761.2 576,760.5 576.5,762 577,761.1 577.5,760.4 578,762.3 578.5,761.4 579,762.5 579.5,762.7 580,763.7 580.5,761.3 581,761.1 581.5,761.6 582,760.2 582.5,762.2 583,760.4 583.5,760.5 584,761.9 584.5,762.4 585,758.6 585.5,759.5 586,762.5 586.5,761.4 587,763.3 587.5,761.4 588,761.5 588.5,761 589,761.7 589.5,760.3 590,760.8 590.5,761.7 591,760.8 591.5,761.4 592,760.9 592.5,759.6 593,760.6 593.5,761.9 594,763.1 594.5,760.6 595,761.6 595.5,760.3 596,761.5 596.5,761 597,762.2 597.5,760.8 598,760.7 598.5,761.9 599,763.7 599.5,761.6 600,761.8 600.5,760.7 601,761.3 601.5,761.7 602,760.1 602.5,760.2 603,759.5 603.5,761.5 604,762.8 604.5,760.8 605,762 605.5,761 606,761.4 606.5,760.9 607,761 607.5,760.9 608,761.2 608.5,762 609,760.9 609.5,762.7 610,762.8 610.5,760.4 611,761.4 611.5,762.9 612,761 612.5,760.9 613,760.8 613.5,760.9 614,759.2 614.5,762 615,761.2 615.5,760.4 616,760.7 616.5,761.2 617,762.1 617.5,762.7 618,760.1 618.5,761.5 619,764.1 619.5,763.8 620,760.3 620.5,761.6 621,765.8 621.5,762.9 622,761.3 622.5,761.8 623,763.7 623.5,764.5 624,762.3 624.5,760.1 625,761.6 625.5,762.7 626,764.3 626.5,761.8 627,763.3 627.5,761.6 628,760.3 628.5,761.1 629,761 629.5,759.9 630,770.9 630.5,770.4 631,770.9 631.5,770.7 632,770.7 632.5,770.9 633,770.6 633.5,770.8 634,770.7 634.5,770.8 635,770.1 635.5,770.7 636,770.4 636.5,771.1 637,771.1 637.5,771.1 638,770.3 638.5,771 639,771.4 639.5,771.1 640,770.9 640.5,771 641,770.6 641.5,770 642,770.8 642.5,771.5 643,770.9 643.5,770.1 644,770.5 644.5,770.9 645,770.7 645.5,770.7 646,770.3 646.5,770.8 647,770.7 647.5,770.7 648,770.3 648.5,770.7 649,770.7 649.5,770.9 650,770.5 650.5,770 651,770.5 651.5,771.4 652,770.9 652.5,770.4 653,770.7 653.5,771.1 654,770.9 654.5,770.6 655,770 655.5,770.7 656,770.8 656.5,770.7 657,770.9 657.5,771 658,770.4 658.5,770.4 659,770.1 659.5,770.5 660,770.6 660.5,770.8 661,771.1 661.5,770.8 662,770.7 662.5,770.4 663,769.7 663.5,770.2 664,770.5 664.5,768.7 665,766.4 665.5,765.4 666,764.2 666.5,762.9 667,761.1 667.5,761.7 668,760.6 668.5,760 669,760.6 669.5,760.9 670,761.9 670.5,761.6 671,761.4 671.5,761.9 672,762.7 672.5,762.1 673,764.1 673.5,766.7 674,765.3 674.5,764.6 675,766 675.5,767.1 676,767.9 676.5,769 677,768.5 677.5,769.3 678,769.7 678.5,769.1 679,769.7 679.5,769.7 680,769.7 680.5,769.5 681,769.6 681.5,769.3 682,769.4 682.5,769 683,768.6 683.5,769 684,768.7 684.5,769.5 685,769.5 685.5,769.8 686,769.7 686.5,770.2 687,769 687.5,768.6 688,769.1 688.5,768.6 689,769.7 689.5,770.6 690,769.5 690.5,767.8 691,768.9 691.5,769.6 692,768.9 692.5,768.1 693,768.4 693.5,767.7 694,768.7 694.5,769.5 695,768.8 695.5,769.6 696,769.4 696.5,769.3 697,769.3 697.5,769 698,768.9 698.5,768.7 699,768.9 699.5,767.9 700,768.1 700.5,767.8 701,768.1 701.5,768.6 702,769 702.5,767.8 703,767.3 703.5,768.4 704,767.9 704.5,768.3 705,769.3 705.5,768.3 706,768.5 706.5,767.5 707,767.7 707.5,768.3 708,766.1 708.5,763.8 709,762.5 709.5,758 710,759.6 710.5,760.7 711,759.9 711.5,758.7 712,760.8 712.5,760.1 713,759.6 713.5,760.7 714,760.6 714.5,760.8 715,758.7 715.5,759.5 716,760.9 716.5,760.6 717,761.9 717.5,760.1 718,759.4 718.5,760.4 719,760.5 719.5,761.2 720,758.7 720.5,758.6 721,760 721.5,760.5 722,759.7 722.5,759.9 723,759.8 723.5,760.4 724,761.9 724.5,761.8 725,759.5 725.5,760.9 726,764.2 726.5,760.3 727,760 727.5,761.4 728,761 728.5,760.1 729,761 729.5,757.3 730,759.2 730.5,759.3 731,759.1 731.5,760.7 732,760.7 732.5,759.8 733,760.1 733.5,759.2 734,759.6 734.5,760.4 735,757.6 735.5,761.5 736,761.3 736.5,760.9 737,760.3 737.5,760.3 738,759.3 738.5,761.8 739,760.9 739.5,761.4 740,759.3 740.5,760.1 741,761.7 741.5,761.7 742,760.1 742.5,760.5 743,760.6 743.5,760.2 744,760.7 744.5,759.6 745,758.9 745.5,757.5 746,760.2 746.5,759.9 747,759.9 747.5,759.6 748,759.7 748.5,760.3 749,761.3 749.5,760.2 750,760.2 750.5,761.6 751,761.2 751.5,759 752,761.4 752.5,762 753,759.3 753.5,761.8 754,760.8 754.5,761.5 755,759.6 755.5,761 756,760 756.5,760.5 757,760.1 757.5,760.9 758,758.9 758.5,759.8 759,761.3 759.5,760.8 760,760.2 760.5,762.8 761,760.8 761.5,758.9 762,759.9 762.5,759.3 763,761.1 763.5,761.8 764,760.2 764.5,760.5 765,760 765.5,760.8 766,761 766.5,762.1 767,762.6 767.5,763.4 768,760.8 768.5,761.9 769,760.5 769.5,762.1 770,761.6 770.5,760.6 771,759.9 771.5,761.9 772,760.4 772.5,759.9 773,760.6 773.5,761.7 774,760.7 774.5,759.3 775,759.8 775.5,759.8 776,762.1 776.5,760.5 777,759.3 777.5,759.5 778,759.2 778.5,760.3 779,761.3 779.5,759.9 780,760.6 780.5,762.1 781,760.8 781.5,760.3 782,760.4 782.5,760.9 783,759.1 783.5,761.3 784,761.8 784.5,762.6 785,760.5 785.5,761.2 786,761.6 786.5,763.1 787,761 787.5,762.3 788,762.5 788.5,760.6 789,761.9 789.5,762.5 790,761.4 790.5,762.5 791,761.6 791.5,762.7 792,762.6 792.5,762.5 793,763.1 793.5,761.8 794,762.5 794.5,762 795,763 795.5,763.9 796,760.5 796.5,763.2 797,762.8 797.5,762 798,763.5 798.5,762.3 799,762.1 799.5,763.5 800,762.2 800.5,762.2 801,763.8 801.5,762.7 802,763.8 802.5,762.5 803,763.6 803.5,763.6 804,762.7 804.5,762.9 805,762.7 805.5,763.5 806,762.5 806.5,761.6 807,761.3 807.5,761.5 808,762.9 808.5,762.1 809,761.6 809.5,761.6 810,761.4 810.5,762.9 811,763.2 811.5,762 812,762.1 812.5,762.7 813,763.9 813.5,762.7 814,763.1 814.5,763 815,760.8 815.5,761.6 816,763.8 816.5,762.4 817,763.8 817.5,763.8 818,762.7 818.5,764.3 819,763.7 819.5,762.5 820,763.7 820.5,763.7 821,764.6 821.5,765.9 822,765.1 822.5,765.1 823,767.3 823.5,766.5 824,767.1 824.5,766.5 825,767.6 825.5,768.4 826,769.5 826.5,768.6 827,769.6 827.5,769.6 828,770.2 828.5,771.2 829,771.7 829.5,772.1 830,772.4 830,773.6 829.5,773.9 829,773.9 828.5,774.3 828,775.5 827.5,776 827,777 826.5,776.5 826,776.7 825.5,777.7 825,777.9 824.5,778.9 824,779 823.5,779.3 823,780.1 822.5,779.9 822,782.5 821.5,782.9 821,781.7 820.5,783.6 820,784.1 819.5,785 819,782.8 818.5,782.8 818,783.3 817.5,781.5 817,782.5 816.5,783.6 816,783 815.5,784.7 815,785.2 814.5,783.4 814,785.5 813.5,785.6 813,781.8 812.5,784.9 812,783.5 811.5,784.3 811,783.2 810.5,785 810,786.2 809.5,785.7 809,784.5 808.5,784 808,786.3 807.5,785.1 807,785.8 806.5,784.4 806,784.1 805.5,783.1 805,786 804.5,783.9 804,785.4 803.5,783.8 803,782.7 802.5,783.4 802,782.8 801.5,783.2 801,784.9 800.5,783.8 800,783.5 799.5,784.7 799,784.1 798.5,783.1 798,783.9 797.5,784.5 797,785 796.5,783.1 796,784.8 795.5,783.4 795,782.2 794.5,783.8 794,783.8 793.5,783.9 793,782.7 792.5,783.6 792,781.9 791.5,782.3 791,784.7 790.5,784.2 790,784.6 789.5,783.3 789,783.5 788.5,784.7 788,785.3 787.5,783.5 787,784.5 786.5,783.3 786,784.3 785.5,783.5 785,783.1 784.5,779.5 784,781.5 783.5,784.8 783,785.8 782.5,785.5 782,785.4 781.5,787.5 781,787.4 780.5,784.8 780,784.3 779.5,787.6 779,786 778.5,785.8 778,786.7 777.5,785.7 777,787.4 776.5,783.9 776,783.4 775.5,786.1 775,784.7 774.5,786.8 774,785.9 773.5,782.7 773,784.2 772.5,786.4 772,784.5 771.5,784.4 771,786.1 770.5,783.9 770,784.4 769.5,783.9 769,785.4 768.5,784.3 768,785.2 767.5,784 767,780.7 766.5,784.4 766,785 765.5,783.9 765,785.9 764.5,784.4 764,785.7 763.5,783.1 763,785 762.5,786.8 762,786.6 761.5,786.9 761,786.2 760.5,786.8 760,784.8 759.5,786.6 759,784.1 758.5,787.3 758,786.8 757.5,785.2 757,789.2 756.5,786.1 756,786.7 755.5,785.4 755,786.4 754.5,784 754,785.2 753.5,785.8 753,787.2 752.5,788.4 752,787.1 751.5,787.1 751,788.2 750.5,785.6 750,785.7 749.5,785.7 749,787.1 748.5,786.9 748,786.1 747.5,788 747,787.7 746.5,786.5 746,786.2 745.5,786.9 745,786.7 744.5,785.6 744,784.6 743.5,785.8 743,784.7 742.5,785.8 742,786.1 741.5,783.6 741,783.6 740.5,785.8 740,786.6 739.5,786 739,785.1 738.5,785.8 738,785.9 737.5,785.6 737,785.3 736.5,786.1 736,783.1 735.5,785.1 735,785.9 734.5,787.7 734,787.1 733.5,787.8 733,785.3 732.5,786.1 732,785.9 731.5,784.4 731,785.8 730.5,785 730,785.8 729.5,786.1 729,784.6 728.5,785.3 728,786.9 727.5,788.6 727,789.5 726.5,789.6 726,786.6 725.5,785.6 725,787.3 724.5,786.4 724,787.1 723.5,787.6 723,786.7 722.5,786.2 722,786.2 721.5,785.8 721,786 720.5,786.4 720,786.5 719.5,787.2 719,787.3 718.5,787.1 718,786.6 717.5,785.3 717,784.5 716.5,785.3 716,785.1 715.5,786.3 715,787.1 714.5,785.8 714,786.9 713.5,785.3 713,784.8 712.5,787.3 712,788 711.5,786.1 711,784.5 710.5,784.7 710,786.5 709.5,785 709,785.8 708.5,782.6 708,779.5 707.5,776.7 707,778 706.5,778.2 706,777.4 705.5,777 705,777.5 704.5,776.6 704,777 703.5,777.9 703,779.4 702.5,778.3 702,776.9 701.5,777.2 701,777.3 700.5,778 700,777.8 699.5,778.3 699,777.3 698.5,776.4 698,776.6 697.5,776.9 697,777 696.5,776.7 696,776.8 695.5,776.6 695,777.2 694.5,776.8 694,777.5 693.5,778.3 693,777.6 692.5,777.8 692,776.8 691.5,775.9 691,776.5 690.5,778.1 690,776.4 689.5,776.4 689,776.6 688.5,777.6 688,777.2 687.5,777.4 687,776.6 686.5,776.9 686,777.1 685.5,777 685,776.5 684.5,776.7 684,777.6 683.5,777.2 683,777.5 682.5,776.5 682,775.6 681.5,776.9 681,775.7 680.5,775.8 680,776.2 679.5,776 679,776 678.5,776.7 678,776.1 677.5,776.4 677,777.2 676.5,777.2 676,778.3 675.5,779.2 675,780.4 674.5,781.6 674,781.8 673.5,781.3 673,785.2 672.5,783.9 672,783.4 671.5,785.2 671,787.3 670.5,783.9 670,786.2 669.5,786 669,784.4 668.5,783.7 668,785.2 667.5,783.4 667,783.7 666.5,781.8 666,780.5 665.5,780.9 665,779 664.5,776.2 664,775.3 663.5,775.4 663,776.3 662.5,775.8 662,775.4 661.5,775.2 661,775.1 660.5,775.3 660,775 659.5,775.3 659,776 658.5,775.7 658,775.6 657.5,775.1 657,775.4 656.5,775.4 656,775.3 655.5,775.2 655,775.7 654.5,775.6 654,775.1 653.5,775.2 653,775.3 652.5,775.9 652,775.4 651.5,774.7 651,775 650.5,776.1 650,775.1 649.5,774.8 649,775.3 648.5,775.2 648,775.7 647.5,775.5 647,775.4 646.5,775.3 646,775.7 645.5,775.2 645,775.2 644.5,775.1 644,775.5 643.5,775.8 643,775.2 642.5,775.1 642,775 641.5,775.8 641,775 640.5,775 640,775.1 639.5,774.9 639,774.8 638.5,775 638,775.4 637.5,775.4 637,775.2 636.5,775.4 636,775.6 635.5,775.4 635,775.7 634.5,775.4 634,775.3 633.5,775.1 633,775.4 632.5,775.2 632,774.9 631.5,775.1 631,775.1 630.5,775.2 630,775 629.5,785.4 629,784.8 628.5,784.8 628,786.4 627.5,785.3 627,786.2 626.5,784.3 626,786 625.5,783.1 625,785.4 624.5,786.1 624,786.1 623.5,784.2 623,785 622.5,784.2 622,784.1 621.5,784.8 621,785.5 620.5,784.6 620,786.3 619.5,785 619,784.4 618.5,784.7 618,786.1 617.5,783.8 617,783.4 616.5,784.8 616,783.5 615.5,783.1 615,784.8 614.5,783.8 614,782.2 613.5,783.8 613,786.1 612.5,786 612,786.4 611.5,783.8 611,784.6 610.5,783.4 610,784.1 609.5,783 609,785.4 608.5,783.5 608,784.3 607.5,785.3 607,784.4 606.5,785.1 606,784.1 605.5,783.8 605,785.2 604.5,784.7 604,784.5 603.5,786.3 603,785.8 602.5,785 602,786.4 601.5,784.1 601,784.4 600.5,786.4 600,784.5 599.5,784.5 599,786.2 598.5,784.7 598,785.3 597.5,784.2 597,784.5 596.5,785.3 596,784.1 595.5,785.6 595,784.2 594.5,784.6 594,783.8 593.5,782.2 593,783.7 592.5,785.7 592,782.9 591.5,782.9 591,785 590.5,783.9 590,785.2 589.5,785.2 589,784.6 588.5,784.9 588,783.6 587.5,784.6 587,784.2 586.5,782 586,783.5 585.5,785 585,784.1 584.5,784.2 584,783.5 583.5,784.3 583,783.3 582.5,785.5 582,786.2 581.5,785.6 581,785.1 580.5,784.8 580,783.2 579.5,781.8 579,784.6 578.5,784.7 578,785.4 577.5,785.8 577,785.8 576.5,783.3 576,785.1 575.5,784.9 575,785 574.5,783.9 574,783.1 573.5,784.2 573,784.9 572.5,785.9 572,786.5 571.5,786.9 571,784.3 570.5,785.6 570,785.7 569.5,784.6 569,784.4 568.5,784 568,785.4 567.5,784.7 567,784.8 566.5,785 566,784.3 565.5,784.3 565,784.5 564.5,783.6 564,784.5 563.5,784.8 563,785.3 562.5,784.9 562,786.2 561.5,785.3 561,785.4 560.5,785.6 560,783.3 559.5,782.5 559,784.1 558.5,782.7 558,784.6 557.5,785.6 557,786.4 556.5,782.9 556,784 555.5,783.8 555,782.9 554.5,785.4 554,783.2 553.5,784.5 553,784.5 552.5,784.5 552,780.3Z" fill="#484848"/><path d="M852,773 852.5,762.1 853,761.5 853.5,760.5 854,761.3 854.5,764.7 855,764.3 855.5,761.9 856,764.1 856.5,761.9 857,761.3 857.5,760.9 858,762.2 858.5,761.1 859,761.4 859.5,760.3 860,761.8 860.5,759.7 861,761.2 861.5,759.2 862,759.8 862.5,760 863,761.5 863.5,761.5 864,760.9 864.5,761.6 865,760.4 865.5,761.4 866,762.8 866.5,760 867,761.2 867.5,761.2 868,760.6 868.5,761.2 869,758.5 869.5,761.3 870,762 870.5,762.4 871,761.7 871.5,761.1 872,760 872.5,761.4 873,760.8 873.5,762.8 874,761.8 874.5,760.2 875,761.3 875.5,760.9 876,761.1 876.5,759.3 877,762.4 877.5,759.5 878,759.7 878.5,762 879,760.8 879.5,761.2 880,759.7 880.5,760.6 881,760.7 881.5,762.9 882,762.2 882.5,759.6 883,761.9 883.5,761 884,759.5 884.5,762 885,759.7 885.5,761.5 886,761.2 886.5,762.8 887,764.3 887.5,762.9 888,760.9 888.5,762 889,759.7 889.5,759.3 890,759.3 890.5,759.7 891,761.7 891.5,761 892,761.4 892.5,761.1 893,759.5 893.5,762.5 894,763.6 894.5,763.2 895,760.7 895.5,761.5 896,764.5 896.5,763.1 897,762 897.5,762.6 898,762.5 898.5,762 899,763.2 899.5,762.8 900,761.8 900.5,762.4 901,760.9 901.5,760 902,760.6 902.5,759.5 903,760.2 903.5,760.8 904,760.4 904.5,762.6 905,762.8 905.5,761.5 906,761.8 906.5,760.5 907,761 907.5,761 908,763 908.5,764.3 909,764.1 909.5,765.7 910,766.9 910.5,766 911,767.1 911.5,768.5 912,767.8 912.5,768.6 913,769.5 913.5,770.5 914,770.9 914.5,771.2 915,772.3 915.5,772.6 916,772.6 916.5,772.5 917,772.5 917.5,762.7 918,760.2 918.5,760.6 919,761.4 919.5,761.2 920,761.8 920.5,761.8 921,762.2 921.5,763.9 922,761.2 922.5,760.3 923,761.2 923.5,760.8 924,763.3 924.5,763.8 925,761 925.5,759.8 926,760.3 926.5,761.4 927,764.8 927.5,761.1 928,760.8 928.5,761.6 929,760.2 929.5,759.4 930,758.5 930.5,761.6 931,760.9 931.5,761 932,762.3 932.5,759.9 933,761.3 933.5,760 934,758.9 934.5,761 935,759.1 935.5,761 936,762.9 936.5,760.8 937,760.4 937.5,763.1 938,763.6 938.5,760.9 939,760.2 939.5,763.7 940,761.9 940.5,759.7 941,760.7 941.5,759.7 942,761.4 942.5,760.3 943,761.6 943.5,763.1 944,760.2 944.5,759.7 945,760.5 945.5,761.1 946,761.6 946.5,761.3 947,759.8 947.5,761.9 948,763.4 948.5,762.1 949,760.8 949.5,762.5 950,764 950.5,761.5 951,762.1 951.5,760.7 952,762.5 952.5,761.3 953,761.3 953.5,760.9 954,761.6 954.5,760.9 955,761.5 955.5,764.1 956,761.2 956.5,760.8 957,761.9 957.5,762 958,762.3 958.5,759.8 959,759.2 959.5,761.3 960,760.5 960.5,759.9 961,761.6 961.5,763.2 962,760.4 962.5,761 963,760.2 963.5,761.5 964,760.2 964.5,760.5 965,759.5 965.5,760.9 966,760.6 966.5,761.5 967,760.9 967.5,762.5 968,761 968.5,762 969,762.3 969.5,760.1 970,759.6 970.5,761.2 971,760.2 971.5,760.9 972,762.2 972.5,760.7 973,761 973.5,760.1 974,760.2 974.5,762.1 975,761.4 975.5,760 976,762.4 976.5,761.4 977,761.6 977.5,760.8 978,760.9 978.5,760.2 979,761.3 979.5,763.2 980,761.6 980.5,761.6 981,762.7 981.5,761.9 982,760 982.5,761.6 983,761.3 983.5,760 984,761 984.5,761.6 985,761.2 985.5,759.6 986,760.9 986.5,760.9 987,760.9 987.5,761.7 988,761.2 988.5,761.5 989,763 989.5,761.7 990,762.1 990.5,761.1 991,760 991.5,760.1 992,759.7 992.5,761 993,759.8 993.5,761.9 994,763.8 994.5,764 995,763.5 995.5,764.2 996,764.7 996.5,764.8 997,766.2 997.5,767.1 998,767 998.5,767.3 999,768.2 999.5,769 1000,769.8 1000.5,770.5 1001,771.3 1001.5,771.6 1002,772.5 1002,773.6 1001.5,774.4 1001,774.9 1000.5,775.4 1000,776.7 999.5,777.1 999,777.9 998.5,778.9 998,779.2 997.5,779.1 997,779.8 996.5,781.3 996,780.9 995.5,782.7 995,782.4 994.5,784.4 994,783.7 993.5,784.1 993,785.7 992.5,785.7 992,785.4 991.5,785.1 991,786 990.5,784.6 990,783.8 989.5,786.2 989,784 988.5,786.9 988,786.4 987.5,786.4 987,784.9 986.5,785.5 986,785.8 985.5,786.4 985,787.7 984.5,786.7 984,786.1 983.5,785.6 983,786.3 982.5,784.3 982,785.6 981.5,785.5 981,783.3 980.5,783.6 980,784.4 979.5,785.7 979,786 978.5,786.4 978,785.8 977.5,785.5 977,782.5 976.5,781 976,783.7 975.5,785.9 975,785 974.5,785 974,785.9 973.5,785.7 973,784.7 972.5,785.5 972,783 971.5,783 971,784.3 970.5,785.2 970,786.5 969.5,784.5 969,785.1 968.5,783.8 968,785.4 967.5,784.5 967,785.3 966.5,784.7 966,785.2 965.5,784.1 965,785.9 964.5,784.3 964,783.9 963.5,786 963,786.1 962.5,786 962,782.5 961.5,782.7 961,784.6 960.5,784.6 960,785.5 959.5,784.2 959,785 958.5,783.6 958,781.8 957.5,784 957,782.8 956.5,785.2 956,782.1 955.5,781.9 955,784.2 954.5,785.1 954,784.1 953.5,784.4 953,783.7 952.5,783.3 952,784.9 951.5,785.5 951,784.9 950.5,785.6 950,783.8 949.5,784.4 949,785.2 948.5,784 948,784.5 947.5,785.1 947,786.2 946.5,785.4 946,785.7 945.5,784.9 945,785.9 944.5,786 944,784.5 943.5,785.6 943,784.8 942.5,785.7 942,785.4 941.5,786.6 941,785.7 940.5,786.3 940,785 939.5,786.2 939,785.4 938.5,785 938,787.1 937.5,786.6 937,785.9 936.5,784.7 936,783.7 935.5,784.5 935,784.4 934.5,784 934,785.5 933.5,784.5 933,784.1 932.5,784.4 932,784.3 931.5,785.3 931,784 930.5,783.6 930,785.7 929.5,785 929,786.1 928.5,784.5 928,784.6 927.5,781.6 927,781 926.5,784.5 926,785.5 925.5,785.9 925,783.5 924.5,783.8 924,784.2 923.5,784.9 923,784.9 922.5,785.8 922,783.8 921.5,783.2 921,784 920.5,784.2 920,785 919.5,784.3 919,784.2 918.5,785.3 918,785 917.5,786.8 917,773.6 916.5,773.6 916,773.6 915.5,773.6 915,773.6 914.5,774.7 914,775.1 913.5,775.7 913,776.4 912.5,776.9 912,778 911.5,777.7 911,779.6 910.5,780.3 910,780.1 909.5,781 909,782.7 908.5,783.8 908,783.4 907.5,784.8 907,784.2 906.5,785.4 906,785.2 905.5,784.7 905,783.1 904.5,783.5 904,785.4 903.5,784.4 903,784 902.5,785.5 902,783.5 901.5,782.5 901,784.5 900.5,783.6 900,784.2 899.5,783.7 899,782.5 898.5,784 898,783.8 897.5,783 897,784 896.5,783.4 896,781.6 895.5,783.3 895,785.7 894.5,783.4 894,781.7 893.5,784.2 893,786.3 892.5,784.6 892,784.5 891.5,783.3 891,783.4 890.5,785.1 890,784.2 889.5,784.8 889,783.1 888.5,783.9 888,784.3 887.5,783.5 887,782.7 886.5,782.2 886,785 885.5,784.8 885,786.4 884.5,785.8 884,785.4 883.5,786 883,784.2 882.5,785.7 882,783.4 881.5,783.4 881,784.6 880.5,785.7 880,785.4 879.5,783.2 879,780.3 878.5,783.3 878,786 877.5,785.1 877,785.6 876.5,784.4 876,784.5 875.5,785.5 875,784.7 874.5,786.3 874,782.9 873.5,783.3 873,785.5 872.5,785.4 872,786 871.5,784.7 871,784.3 870.5,783.2 870,783.9 869.5,784.3 869,786.2 868.5,785.1 868,787 867.5,786.5 867,785 866.5,785.7 866,785.1 865.5,784.3 865,786.5 864.5,785.1 864,786.4 863.5,786.4 863,784.4 862.5,786.9 862,784.2 861.5,786.7 861,784.9 860.5,783.4 860,783.5 859.5,785.5 859,783 858.5,784.4 858,784.7 857.5,785.3 857,786.5 856.5,783.7 856,785.9 855.5,784.1 855,782.7 854.5,780.6 854,783.8 853.5,785.8 853,783.7 852.5,785.2 852,773Z" fill="#484848"/><path d="M392,857 392.5,856.3 393,855.2 393.5,854 394,853.7 394.5,852.9 395,851.8 395.5,850.7 396,849.7 396.5,850.4 397,849.2 397.5,847.7 398,847.8 398.5,847.6 399,845.3 399.5,846.5 400,844.9 400.5,845.5 401,845.2 401.5,844.8 402,845 402.5,843.9 403,845.8 403.5,843.5 404,843.7 404.5,838.2 405,834.5 405.5,835.6 406,838.1 406.5,835.4 407,833.8 407.5,836.1 408,837.6 408.5,836.8 409,838.8 409.5,836.5 410,836 410.5,835.1 411,835.5 411.5,832 412,834.6 412.5,836 413,830.8 413.5,834.2 414,834.8 414.5,833.9 415,837.5 415.5,836.2 416,833.9 416.5,838.7 417,838.8 417.5,835.7 418,834.7 418.5,836.8 419,836.5 419.5,840.6 420,839.9 420.5,836.8 421,837.8 421.5,840 422,836.6 422.5,837.6 423,837.8 423.5,837.1 424,836.1 424.5,833.9 425,838 425.5,837.9 426,838.6 426.5,837.5 427,838.1 427.5,839.9 428,837.6 428.5,833.8 429,835.6 429.5,835.1 430,835.8 430.5,835.8 431,835.5 431.5,835.6 432,838.7 432.5,837.1 433,834.4 433.5,836.3 434,837.5 434.5,835.8 435,837.8 435.5,836.2 436,837.3 436.5,836.1 437,840.8 437.5,838.6 438,836.3 438.5,837.2 439,835.6 439.5,836.4 440,839.2 440.5,836.4 441,837.8 441.5,844.7 442,847.2 442.5,850 443,857 443,857 442.5,864 442,868.8 441.5,871.7 441,876.2 440.5,877.6 440,876.4 439.5,875 439,878.8 438.5,876.6 438,877.8 437.5,875.9 437,878.7 436.5,877.8 436,876.9 435.5,877.6 435,877.7 434.5,878.2 434,876.8 433.5,878.1 433,880.3 432.5,879.7 432,877.3 431.5,878.7 431,877.1 430.5,878.5 430,877.5 429.5,878.5 429,876.6 428.5,879.2 428,877.2 427.5,873.2 427,874.4 426.5,876.5 426,875.4 425.5,872.6 425,878.7 424.5,880.2 424,878.3 423.5,876.2 423,872.8 422.5,877.8 422,877.3 421.5,877.5 421,876.9 420.5,877.6 420,874.6 419.5,875.1 419,878.7 418.5,877.6 418,879.9 417.5,878.6 417,881 416.5,876.8 416,877.3 415.5,880.9 415,877.6 414.5,880.3 414,879.3 413.5,875.3 413,878.9 412.5,877.6 412,878.3 411.5,877.1 411,877.3 410.5,878.9 410,877.5 409.5,877.8 409,877.5 408.5,878.4 408,876.4 407.5,876.7 407,879.3 406.5,878.3 406,879.8 405.5,878.3 405,879.1 404.5,878.5 404,872.5 403.5,872 403,872 402.5,870.2 402,869.9 401.5,869.2 401,868.5 400.5,868 400,869.5 399.5,869.7 399,866.5 398.5,866.4 398,865.7 397.5,866.5 397,864.5 396.5,864.1 396,864.7 395.5,863.8 395,862.3 394.5,860.7 394,860.3 393.5,859.8 393,859 392.5,857.9 392,857Z" fill="#484848"/><path d="M513,856.2 513.5,855.3 514,854.3 514.5,852 515,850.7 515.5,850.8 516,847.9 516.5,845.1 517,844.4 517.5,843.4 518,839.7 518.5,836.4 519,840.2 519.5,841.2 520,836.6 520.5,834.5 521,836.1 521.5,838.4 522,837.1 522.5,841.1 523,842.8 523.5,840.3 524,834.3 524.5,839.4 525,840.7 525.5,835.4 526,835.7 526.5,834.8 527,836.5 527.5,835.6 528,838.1 528.5,836.9 529,837.4 529.5,838.8 530,838.4 530.5,837 531,840 531.5,836.5 532,837.2 532.5,838 533,837.8 533.5,837.2 534,835.7 534.5,839.3 535,839.3 535.5,837.1 536,837.3 536.5,835.3 537,838.7 537.5,836.1 538,834.2 538.5,832.9 539,838 539.5,834.6 540,836 540.5,837.4 541,839.5 541.5,837.7 542,842.4 542.5,839.7 543,837.3 543.5,838.4 544,836.4 544.5,837 545,838.3 545.5,840.5 546,838.6 546.5,837.8 547,837.7 547.5,839.6 548,840.7 548.5,838.6 549,836.1 549.5,838.6 550,841.7 550.5,839 551,836.3 551.5,839 552,842 552.5,840.5 553,838.3 553.5,836.3 554,837 554.5,835.4 555,833.7 555.5,834.4 556,833.1 556.5,834.2 557,835.4 557.5,834.3 558,833.8 558.5,834.1 559,835.5 559.5,834 560,836.3 560.5,833.9 561,837.6 561.5,835.5 562,833.2 562.5,835.3 563,840.5 563.5,838.1 564,840.5 564.5,834.2 565,838.5 565.5,834 566,838.4 566.5,838 567,835.3 567.5,837.8 568,836.1 568.5,832.8 569,834.6 569.5,834.7 570,834 570.5,834.6 571,836.6 571.5,834.1 572,837.2 572.5,836 573,838.1 573.5,837.4 574,835.7 574.5,837.6 575,839.4 575.5,836.4 576,840.3 576.5,843.2 577,836.7 577.5,834.2 578,837.1 578.5,836.7 579,838.1 579.5,838.7 580,836.2 580.5,837.4 581,835.8 581.5,835.4 582,832.9 582.5,836.4 583,835.9 583.5,835.7 584,833.5 584.5,837.8 585,837 585.5,834.7 586,835.7 586.5,835.7 587,833.5 587.5,836.1 588,835.8 588.5,837.9 589,836.8 589.5,837.9 590,835.8 590.5,838 591,835.9 591.5,834 592,834.4 592.5,837.3 593,833.8 593.5,832.7 594,836.6 594.5,834 595,838.1 595.5,837.7 596,835.3 596.5,836.8 597,842.8 597.5,836.6 598,833.4 598.5,836.7 599,838.7 599.5,836.5 600,839.5 600.5,841.3 601,836.9 601.5,834.7 602,836.4 602.5,840.5 603,833.1 603.5,833.9 604,833.6 604.5,831.2 605,832.5 605.5,833 606,835.1 606.5,836.3 607,835 607.5,830.9 608,833.1 608.5,835 609,832.7 609.5,835.1 610,833.2 610.5,835.6 611,835.4 611.5,838.2 612,838.1 612.5,837 613,839.8 613.5,839 614,835.3 614.5,835 615,833.2 615.5,836.3 616,837.5 616.5,834.6 617,835.6 617.5,835.6 618,837.2 618.5,832.6 619,835.8 619.5,838.6 620,832.9 620.5,834.1 621,834.1 621.5,833.2 622,833 622.5,835.6 623,833.3 623.5,832 624,832.3 624.5,836.4 625,834.4 625.5,836.6 626,836 626.5,833.3 627,835 627.5,834.4 628,835.7 628.5,833.8 629,835.6 629.5,848.8 630,857 630,857 629.5,866 629,879.2 628.5,880.2 628,880.9 627.5,880.9 627,880.5 626.5,876.5 626,877.9 625.5,876.5 625,875.8 624.5,880.7 624,882 623.5,879.8 623,880.7 622.5,878.3 622,879.7 621.5,880.9 621,879.8 620.5,877.9 620,881.8 619.5,877.2 619,880.5 618.5,882.1 618,878.9 617.5,877 617,878.7 616.5,880.1 616,877.9 615.5,879.9 615,881 614.5,879.1 614,878.7 613.5,875.8 613,880.4 612.5,876.9 612,874.6 611.5,877.4 611,878.9 610.5,877.6 610,882.1 609.5,878.1 609,880.9 608.5,878.8 608,876.2 607.5,880.8 607,877.9 606.5,876.6 606,876.9 605.5,876.4 605,876.5 604.5,882.2 604,880.3 603.5,879.8 603,877.8 602.5,877.8 602,877 601.5,879.7 601,878.1 600.5,873.5 600,876.3 599.5,877.8 599,875 598.5,876.7 598,880.9 597.5,877.5 597,878.3 596.5,875 596,877.5 595.5,877.6 595,877 594.5,880.2 594,877.7 593.5,876.9 593,874.5 592.5,875.8 592,876 591.5,879.4 591,878 590.5,876.5 590,879.5 589.5,875.6 589,877.3 588.5,873.9 588,873.4 587.5,877.5 587,880.5 586.5,879.8 586,877.3 585.5,881.7 585,876.4 584.5,877.1 584,880.5 583.5,877.6 583,878.3 582.5,877.6 582,877.8 581.5,877.3 581,874.8 580.5,875.3 580,878 579.5,876.8 579,874.5 578.5,877 578,876.7 577.5,879.3 577,877.3 576.5,872.2 576,873.4 575.5,877.3 575,873.5 574.5,875.7 574,878.5 573.5,879.5 573,875.9 572.5,877.6 572,876.8 571.5,879.6 571,878.1 570.5,876 570,876.8 569.5,878.7 569,877.1 568.5,881.1 568,875.9 567.5,875.6 567,876.6 566.5,873.6 566,875.2 565.5,880.2 565,876.4 564.5,870.4 564,875.5 563.5,875.9 563,880.4 562.5,878.7 562,879.7 561.5,878.9 561,879.6 560.5,879.9 560,876.1 559.5,879.5 559,876.7 558.5,877.6 558,880.1 557.5,879.7 557,878.7 556.5,878.7 556,875.6 555.5,875.3 555,877 554.5,876.7 554,876.9 553.5,874.8 553,876.3 552.5,875.4 552,877.1 551.5,878.2 551,877.9 550.5,876.9 550,877.1 549.5,875.5 549,877.4 548.5,875.1 548,868.3 547.5,873.2 547,875.8 546.5,872.4 546,870.3 545.5,871.6 545,875.6 544.5,874.9 544,877.1 543.5,875.3 543,876.7 542.5,873.4 542,874.2 541.5,876.1 541,876.1 540.5,876.3 540,875.3 539.5,878 539,875.7 538.5,876.1 538,878.9 537.5,878.3 537,879.4 536.5,879.7 536,876.9 535.5,876.6 535,875.7 534.5,879.7 534,877.9 533.5,875.3 533,876.1 532.5,875.5 532,877 531.5,874.9 531,873 530.5,876.7 530,874.8 529.5,874.2 529,876.2 528.5,874.4 528,875.6 527.5,879.4 527,877.4 526.5,878.3 526,877 525.5,876.1 525,873.7 524.5,877.1 524,879.7 523.5,876.9 523,875 522.5,873.9 522,876.9 521.5,873.3 521,877.4 520.5,879.2 520,876.8 519.5,870.4 519,872.9 518.5,877 518,874.1 517.5,870.6 517,869.6 516.5,868.9 516,866.3 515.5,866.1 515,863.9 514.5,863 514,860.4 513.5,858.7 513,857.8Z" fill="#484848"/><path d="M700,857 700.5,853.1 701,850.8 701.5,850.8 702,844.8 702.5,842.2 703,841.9 703.5,837.4 704,835.6 704.5,830.7 705,832.7 705.5,834.2 706,842.5 706.5,837.1 707,831.4 707.5,836 708,837.8 708.5,834.3 709,833.1 709.5,838.6 710,836.8 710.5,834.1 711,832.8 711.5,830.4 712,833.5 712.5,835.6 713,834 713.5,836.5 714,836.6 714.5,834.6 715,831.1 715.5,834 716,835.1 716.5,835.7 717,834.3 717.5,837.3 718,837 718.5,834.4 719,833.6 719.5,831.7 720,835.4 720.5,833.1 721,835.5 721.5,832.4 722,834.6 722.5,832.9 723,832.6 723.5,832.2 724,833.6 724.5,835.1 725,837.1 725.5,838 726,836.3 726.5,836.9 727,835 727.5,835.7 728,836.4 728.5,836.4 729,840.9 729.5,835.4 730,834.6 730.5,836.1 731,836.7 731.5,836.4 732,837 732.5,833 733,832.2 733.5,837.3 734,838.1 734.5,835.8 735,830.6 735.5,836.1 736,837.3 736.5,832.1 737,834.9 737.5,836.1 738,835.6 738.5,838.7 739,834 739.5,834.3 740,832.9 740.5,834.5 741,834.6 741.5,833.7 742,833.6 742.5,829.8 743,834.1 743.5,834.3 744,835.7 744.5,833.4 745,836.4 745.5,835.9 746,835.9 746.5,836 747,838.7 747.5,837 748,832.3 748.5,834.8 749,833.4 749.5,833.4 750,831.9 750.5,833.7 751,837.3 751.5,834.3 752,837.1 752.5,835.9 753,833.4 753.5,834.6 754,834.8 754.5,832 755,836.8 755.5,831.7 756,835.6 756.5,834.3 757,834.9 757.5,832.6 758,836.1 758.5,834.7 759,833 759.5,833.8 760,834.5 760.5,835.3 761,835.7 761.5,834.6 762,838.5 762.5,838.5 763,834.4 763.5,837.4 764,832.1 764.5,830 765,835.8 765.5,835.3 766,832 766.5,835.7 767,835.1 767.5,831.8 768,835.6 768.5,838.4 769,835.2 769.5,837.2 770,833.2 770.5,836.2 771,836.3 771.5,832.9 772,831.2 772.5,835.3 773,837.2 773.5,836.7 774,838.9 774.5,834 775,833.1 775.5,834.8 776,833.7 776.5,833.8 777,831.5 777.5,836.4 778,843.8 778.5,838.8 779,833.1 779.5,836.7 780,835.1 780.5,830.7 781,833.8 781.5,832.9 782,833.6 782.5,833.2 783,833.7 783.5,834.8 784,831.8 784.5,832 785,836.5 785.5,833.7 786,831.5 786.5,836.1 787,832.7 787.5,834.7 788,832.1 788.5,835.9 789,834.2 789.5,838.4 790,836.4 790.5,832.4 791,835.3 791.5,835.2 792,834.4 792.5,835.1 793,839 793.5,834.9 794,832.1 794.5,833.6 795,837.7 795.5,833.5 796,837.4 796.5,836.5 797,839.3 797.5,836 798,834.4 798.5,836.2 799,831.7 799.5,835.9 800,832.1 800.5,834.1 801,834.1 801.5,833.6 802,834.7 802.5,832.5 803,833.6 803.5,832.7 804,832.7 804.5,831.3 805,832.7 805.5,837.7 806,836.9 806.5,833.9 807,831.2 807.5,835.3 808,836.5 808.5,836.9 809,835.9 809.5,837.2 810,834.4 810.5,833.9 811,836.8 811.5,841.4 812,837 812.5,840.7 813,839.4 813.5,833.9 814,839.2 814.5,838.8 815,833.8 815.5,837.1 816,839 816.5,836.2 817,838.7 817.5,836.6 818,833.1 818.5,834.6 819,834.3 819.5,830 820,833.1 820.5,833.3 821,835 821.5,842.2 822,843.4 822.5,847.2 823,857 823,857 822.5,865.5 822,869.8 821.5,873.3 821,877.4 820.5,880.4 820,879.6 819.5,882.5 819,879.8 818.5,877.2 818,880 817.5,878.8 817,876.8 816.5,878 816,875.8 815.5,876.4 815,880.1 814.5,879.2 814,879.9 813.5,881.6 813,876.9 812.5,880.8 812,877 811.5,874.7 811,879 810.5,879.9 810,879.4 809.5,876.7 809,879.6 808.5,879.6 808,876.1 807.5,879.7 807,883.5 806.5,879.8 806,880.2 805.5,879 805,877.7 804.5,881.8 804,881.6 803.5,881 803,877.1 802.5,878.2 802,877.5 801.5,880.1 801,879.3 800.5,879.7 800,877.4 799.5,878 799,882.6 798.5,878.5 798,880.1 797.5,877.2 797,876.2 796.5,877.6 796,876.3 795.5,877.4 795,876.2 794.5,877 794,881.2 793.5,878.7 793,873.9 792.5,876 792,879.5 791.5,876 791,879.2 790.5,880.3 790,879.9 789.5,877 789,880.4 788.5,878.8 788,881.8 787.5,877 787,877.6 786.5,877.6 786,880.6 785.5,879.7 785,876.2 784.5,877.7 784,883 783.5,878.4 783,874 782.5,879.2 782,880.9 781.5,882.3 781,879.9 780.5,882.4 780,878 779.5,875.9 779,880.6 778.5,879.2 778,873.5 777.5,878.6 777,882.2 776.5,879.7 776,879.8 775.5,879.8 775,880.8 774.5,878.2 774,879.8 773.5,878.1 773,876.2 772.5,879.1 772,882 771.5,880.9 771,879 770.5,878.4 770,880.5 769.5,878.6 769,879.1 768.5,876.3 768,876.8 767.5,881.7 767,878.8 766.5,876.1 766,881.6 765.5,877.6 765,879.9 764.5,883.9 764,881.8 763.5,879.6 763,880.3 762.5,876.7 762,878.1 761.5,880 761,878.7 760.5,878.7 760,878.7 759.5,877.7 759,881.3 758.5,880 758,877.6 757.5,881.1 757,880.4 756.5,880.4 756,878.8 755.5,877.1 755,877.2 754.5,879 754,879.1 753.5,877.6 753,880.4 752.5,877.7 752,876.9 751.5,880.1 751,877.8 750.5,877.9 750,881.5 749.5,879.6 749,880.1 748.5,878.9 748,882 747.5,881.5 747,872.7 746.5,877.4 746,878 745.5,874.6 745,874.5 744.5,880.7 744,878.9 743.5,876.9 743,881.8 742.5,882.6 742,880 741.5,880.4 741,877 740.5,878.4 740,882.8 739.5,876.3 739,877.7 738.5,877.3 738,877 737.5,880.7 737,878.9 736.5,883.1 736,876.6 735.5,874.2 735,882.6 734.5,874.4 734,874.7 733.5,875.8 733,883.3 732.5,881.5 732,878.2 731.5,877.6 731,876.7 730.5,874.3 730,879.1 729.5,874.8 729,876.9 728.5,876.4 728,877.9 727.5,875.8 727,878.4 726.5,879.3 726,877.7 725.5,876.3 725,878.1 724.5,878.7 724,877.5 723.5,881.3 723,878.1 722.5,878.3 722,880 721.5,881.9 721,880 720.5,879 720,879.9 719.5,880.8 719,877.8 718.5,879.9 718,879.3 717.5,877.1 717,880.2 716.5,876.7 716,878.4 715.5,879 715,877.1 714.5,876.6 714,877.2 713.5,877.6 713,877.3 712.5,878.1 712,877.9 711.5,883.1 711,879.9 710.5,877 710,877.2 709.5,878.7 709,878.2 708.5,880.7 708,880.2 707.5,881.8 707,884.4 706.5,880.4 706,877.1 705.5,874.7 705,880.2 704.5,883.9 704,880 703.5,874.1 703,870.6 702.5,871.8 702,869.4 701.5,864.6 701,863.2 700.5,861.1 700,857Z" fill="#484848"/><path d="M852,857 852.5,853.7 853,845.5 853.5,840.7 854,838.8 854.5,841.5 855,843 855.5,839.4 856,831 856.5,829.8 857,835.4 857.5,838.6 858,837 858.5,835.6 859,834.1 859.5,837.1 860,834.9 860.5,837.6 861,836 861.5,836.6 862,834.5 862.5,838.1 863,837.3 863.5,840.6 864,836.5 864.5,837.6 865,835.6 865.5,841 866,837.6 866.5,837 867,836.3 867.5,834.2 868,834.3 868.5,839.8 869,840.3 869.5,836 870,836.1 870.5,829.9 871,834.8 871.5,832.6 872,835.6 872.5,832.6 873,835.2 873.5,837.4 874,841 874.5,835.5 875,837.1 875.5,833.9 876,837.7 876.5,834.5 877,833.2 877.5,836.1 878,833.9 878.5,833.7 879,838.8 879.5,841.9 880,836.6 880.5,835.1 881,837.2 881.5,840.5 882,833.7 882.5,838.2 883,839.1 883.5,835 884,833.5 884.5,832.8 885,832.2 885.5,837.4 886,832.9 886.5,834.3 887,831.7 887.5,834.9 888,835.6 888.5,837.3 889,837.8 889.5,834.4 890,835.5 890.5,831.8 891,829.7 891.5,834.7 892,837 892.5,835.2 893,834.3 893.5,836.5 894,836.1 894.5,840 895,837.9 895.5,834.5 896,836.3 896.5,835.2 897,836.8 897.5,836 898,838.4 898.5,835.8 899,832.8 899.5,835.1 900,834.3 900.5,834.6 901,833.8 901.5,830.7 902,832.5 902.5,832 903,835.1 903.5,832.1 904,836.9 904.5,832.7 905,836.8 905.5,839.6 906,836.5 906.5,833.1 907,835 907.5,836.5 908,836.5 908.5,836.6 909,837.7 909.5,835.4 910,835.6 910.5,836.7 911,834.7 911.5,845.2 912,852.2 912,862 911.5,869.2 911,877.6 910.5,881.1 910,879.6 909.5,879 909,879.8 908.5,877.2 908,877.4 907.5,878.8 907,878 906.5,880.5 906,878.2 905.5,880.8 905,877.3 904.5,876.9 904,879.2 903.5,877.9 903,880.7 902.5,880.7 902,880.6 901.5,881.8 901,880.9 900.5,880.1 900,881 899.5,878.8 899,880.6 898.5,876.9 898,875.7 897.5,878 897,877.5 896.5,879.6 896,878 895.5,879.2 895,876.8 894.5,875.8 894,877.8 893.5,877.8 893,879.3 892.5,879.1 892,876.2 891.5,877.6 891,882.3 890.5,881.2 890,878.2 889.5,879.4 889,875.5 888.5,876.6 888,874.5 887.5,877.7 887,882.5 886.5,877.9 886,876.5 885.5,877.1 885,879.7 884.5,875.4 884,876.2 883.5,873.6 883,874.2 882.5,875.3 882,880.7 881.5,874.7 881,877.9 880.5,878.9 880,874.7 879.5,877.5 879,880.9 878.5,880.5 878,880.1 877.5,878.9 877,881.4 876.5,877.2 876,878.8 875.5,880.8 875,881.3 874.5,878.3 874,877.7 873.5,881.9 873,878.2 872.5,880.1 872,879.3 871.5,881.1 871,879.6 870.5,882 870,881.8 869.5,877.6 869,877 868.5,874.7 868,878.5 867.5,880.2 867,876.4 866.5,877 866,875.4 865.5,874.2 865,877.6 864.5,877.3 864,874.5 863.5,873.7 863,876.6 862.5,875.1 862,878.1 861.5,875 861,877.5 860.5,876.7 860,880.3 859.5,878.4 859,879.6 858.5,878.3 858,875.4 857.5,874.6 857,878.8 856.5,882.4 856,882 855.5,875.5 855,868 854.5,872.4 854,875.2 853.5,873.3 853,867.9 852.5,860.9 852,857Z" fill="#484848"/><path d="M917,846.5 917.5,832.3 918,838.1 918.5,838.4 919,836.9 919.5,838.1 920,838.1 920.5,837.2 921,832.2 921.5,835.5 922,834.6 922.5,837.7 923,837.1 923.5,836.5 924,836.6 924.5,834.2 925,833.6 925.5,834.8 926,836 926.5,836 927,832 927.5,832 928,836.1 928.5,836.1 929,836.8 929.5,834.2 930,836.5 930.5,838.4 931,836.9 931.5,834.4 932,835.7 932.5,833.6 933,834.2 933.5,834.7 934,833.7 934.5,835.5 935,833 935.5,832.9 936,837.4 936.5,836.4 937,835.9 937.5,835.8 938,831.6 938.5,836.9 939,839.8 939.5,835.4 940,836.5 940.5,832.4 941,834.4 941.5,837.3 942,832.7 942.5,833.4 943,832.7 943.5,831.4 944,836.3 944.5,830.8 945,833.9 945.5,834.9 946,836.3 946.5,835 947,831.2 947.5,834.4 948,841.4 948.5,838.3 949,835.8 949.5,839.3 950,837.4 950.5,835.1 951,837 951.5,836.1 952,836.7 952.5,836.5 953,839.3 953.5,831 954,833.2 954.5,836.6 955,835.7 955.5,836.8 956,833.8 956.5,837.2 957,834.4 957.5,833.1 958,835.6 958.5,835.1 959,836.9 959.5,835.2 960,835.8 960.5,834.8 961,835.3 961.5,832.8 962,835.2 962.5,832 963,833.5 963.5,831.6 964,837.9 964.5,840 965,836 965.5,835.2 966,834.3 966.5,832.2 967,838.1 967.5,838.8 968,833.4 968.5,835.8 969,834.3 969.5,836 970,835.6 970.5,835.8 971,837.5 971.5,834.6 972,839.7 972.5,840.6 973,836.8 973.5,831.2 974,833 974.5,832.8 975,832.1 975.5,836 976,836.6 976.5,832.4 977,832.2 977.5,834.2 978,834.1 978.5,834.1 979,832.4 979.5,834.7 980,836.3 980.5,838.4 981,832.8 981.5,832 982,836 982.5,834.2 983,831.7 983.5,832.4 984,832.9 984.5,835.1 985,833.8 985.5,835.5 986,836.3 986.5,836.7 987,836.6 987.5,834.5 988,834.6 988.5,832.4 989,837.8 989.5,837.6 990,836.5 990.5,835.5 991,835.5 991.5,833.5 992,830.8 992.5,834.2 993,831.4 993.5,838.7 994,841.1 994.5,851.7 995,854.4 995,859.6 994.5,862 994,870.2 993.5,876.1 993,877.7 992.5,879.7 992,882.7 991.5,881.3 991,878 990.5,882 990,881.5 989.5,876 989,881.6 988.5,881.3 988,879.5 987.5,875.4 987,874.5 986.5,878.2 986,877.9 985.5,878.5 985,880.1 984.5,878 984,880.7 983.5,879.7 983,882 982.5,879.3 982,878.8 981.5,881.8 981,877.2 980.5,873 980,877.7 979.5,877.5 979,881.7 978.5,879.3 978,878.1 977.5,879.7 977,882 976.5,881.2 976,877.3 975.5,879 975,878.2 974.5,880.9 974,880.4 973.5,883 973,877.1 972.5,872.1 972,873.9 971.5,879.6 971,878.1 970.5,878.2 970,878.9 969.5,879.3 969,880.4 968.5,879.4 968,881.1 967.5,878.6 967,876.3 966.5,883.2 966,880.4 965.5,879.4 965,879.4 964.5,882.4 964,882.8 963.5,883 963,880.3 962.5,881.8 962,880.3 961.5,881.6 961,880.4 960.5,879.7 960,878.8 959.5,879.1 959,876.1 958.5,876.3 958,879.2 957.5,881.9 957,878.4 956.5,877.8 956,880.3 955.5,876.9 955,877.8 954.5,876.8 954,878.2 953.5,874.8 953,871.7 952.5,875.4 952,877.3 951.5,878 951,877.9 950.5,879.2 950,879.7 949.5,880.1 949,878.8 948.5,880.5 948,873.3 947.5,878.9 947,881.2 946.5,879.4 946,877.5 945.5,877.3 945,879.9 944.5,876.8 944,877.7 943.5,878.1 943,881.2 942.5,879.4 942,879.2 941.5,879.6 941,875.9 940.5,881.9 940,876.8 939.5,878.6 939,877.4 938.5,878 938,882.5 937.5,880.1 937,877.9 936.5,879.8 936,878 935.5,880 935,880.3 934.5,879.3 934,879.1 933.5,879.3 933,877.5 932.5,880.1 932,877.7 931.5,880 931,876.7 930.5,875.6 930,877.6 929.5,879.1 929,878.4 928.5,873.7 928,879.1 927.5,882.1 927,877.2 926.5,876.8 926,877.9 925.5,880.5 925,881.3 924.5,878.8 924,877.7 923.5,877.5 923,876.4 922.5,877 922,879 921.5,878.8 921,882.8 920.5,877.7 920,877.2 919.5,881 919,877.8 918.5,881.3 918,877.3 917.5,882.1 917,867.7Z" fill="#484848"/><path d="M826 521H848" stroke="#444" stroke-width="1.6" stroke-dasharray="2.200 1.600" fill="none"/><path d="M358.5 179V311M367.5 179V311M377.5 179V311M386.5 179V311M395.5 179V311M404.5 179V311M414.5 179V311M423.5 179V311M432.5 179V311M441.5 179V311M451.5 179V311M460.5 179V311M469.5 179V311M478.5 179V311M488.5 179V311M497.5 179V311M506.5 179V311M515.5 179V311M525.5 179V311M534.5 179V311M543.5 179V311M552.5 179V311M562.5 179V311M571.5 179V311M580.5 179V311M589.5 179V311M599.5 179V311M608.5 179V311M617.5 179V311M626.5 179V311M636.5 179V311M645.5 179V311M654.5 179V311M663.5 179V311M672.5 179V311M682.5 179V311M691.5 179V311M700.5 179V311M709.5 179V311M719.5 179V311M728.5 179V311M737.5 179V311M746.5 179V311M756.5 179V311M765.5 179V311M774.5 179V311M783.5 179V311M793.5 179V311M802.5 179V311M811.5 179V311M820.5 179V311M830.5 179V311M839.5 179V311M848.5 179V311M857.5 179V311M867.5 179V311M876.5 179V311M885.5 179V311M894.5 179V311M904.5 179V311M913.5 179V311M922.5 179V311M931.5 179V311M941.5 179V311M950.5 179V311M959.5 179V311M968.5 179V311M977.5 179V311M987.5 179V311M996.5 179V311M1005.5 179V311M1014.5 179V311M1024.5 179V311M1033.5 179V311M1042.5 179V311M1051.5 179V311M1061.5 179V311M1070.5 179V311M1079.5 179V311M1088.5 179V311M1098.5 179V311M1107.5 179V311M1116.5 179V311M1125.5 179V311M1135.5 179V311M1144.5 179V311M1153.5 179V311M1162.5 179V311M1172.5 179V311M1181.5 179V311M1190.5 179V311M1199.5 179V311M1209.5 179V311M1218.5 179V311M1227.5 179V311M1236.5 179V311M1245.5 179V311M1255.5 179V311M1264.5 179V311M1273.5 179V311M1282.5 179V311M1292.5 179V311M1301.5 179V311M1310.5 179V311M1319.5 179V311M1329.5 179V311M1338.5 179V311M1347.5 179V311M1356.5 179V311M1366.5 179V311M1375.5 179V311M1384.5 179V311M1393.5 179V311M1403.5 179V311M1412.5 179V311M1421.5 179V311M1430.5 179V311M1440.5 179V311M1449.5 179V311M1458.5 179V311M1467.5 179V311M1477.5 179V311M1486.5 179V311M1495.5 179V311M1504.5 179V311M1514.5 179V311M1523.5 179V311M1532.5 179V311M1541.5 179V311" stroke="#ffffff" stroke-opacity="0.25" stroke-width="1" fill="none"/><path d="M1024.5 311V848M1033.5 311V848M1042.5 311V848M1051.5 311V848M1061.5 311V848M1070.5 311V848M1079.5 311V848M1088.5 311V848M1098.5 311V848M1107.5 311V848M1116.5 311V848M1125.5 311V848M1135.5 311V848M1144.5 311V848M1153.5 311V848M1162.5 311V848M1172.5 311V848M1181.5 311V848M1190.5 311V848M1199.5 311V848M1209.5 311V848M1218.5 311V848M1227.5 311V848M1236.5 311V848M1245.5 311V848M1255.5 311V848M1264.5 311V848M1273.5 311V848M1282.5 311V848M1292.5 311V848M1301.5 311V848M1310.5 311V848M1319.5 311V848M1329.5 311V848M1338.5 311V848M1347.5 311V848M1356.5 311V848M1366.5 311V848M1375.5 311V848M1384.5 311V848M1393.5 311V848M1403.5 311V848M1412.5 311V848M1421.5 311V848M1430.5 311V848M1440.5 311V848M1449.5 311V848M1458.5 311V848M1467.5 311V848M1477.5 311V848M1486.5 311V848M1495.5 311V848M1504.5 311V848M1514.5 311V848M1523.5 311V848M1532.5 311V848M1541.5 311V848" stroke="#ffffff" stroke-opacity="0.215" stroke-width="1" fill="none"/><path d="M358.5 311V848M367.5 311V848M377.5 311V848M386.5 311V848M395.5 311V848M404.5 311V848M414.5 311V848M423.5 311V848M432.5 311V848M441.5 311V848M451.5 311V848M460.5 311V848M469.5 311V848M478.5 311V848M488.5 311V848M497.5 311V848M506.5 311V848M515.5 311V848M525.5 311V848M534.5 311V848M543.5 311V848M552.5 311V848M562.5 311V848M571.5 311V848M580.5 311V848M589.5 311V848M599.5 311V848M608.5 311V848M617.5 311V848M626.5 311V848M636.5 311V848M645.5 311V848M654.5 311V848M663.5 311V848M672.5 311V848M682.5 311V848M691.5 311V848M700.5 311V848M709.5 311V848M719.5 311V848M728.5 311V848M737.5 311V848M746.5 311V848M756.5 311V848M765.5 311V848M774.5 311V848M783.5 311V848M793.5 311V848M802.5 311V848M811.5 311V848M820.5 311V848M830.5 311V848M839.5 311V848M848.5 311V848M857.5 311V848M867.5 311V848M876.5 311V848M885.5 311V848M894.5 311V848M904.5 311V848M913.5 311V848M922.5 311V848M931.5 311V848M941.5 311V848M950.5 311V848M959.5 311V848M968.5 311V848M977.5 311V848M987.5 311V848M996.5 311V848M1005.5 311V848M1014.5 311V848" stroke="#ffffff" stroke-opacity="0.065" stroke-width="1" fill="none"/><rect x="355" y="315" width="95.500" height="18" rx="1.500" fill="#dcdddd" opacity="0.93"/><rect x="355" y="399" width="95.500" height="18" rx="1.500" fill="#dcdddd" opacity="0.93"/><rect x="355" y="483" width="95.500" height="18" rx="1.500" fill="#dcdddd" opacity="0.93"/><rect x="355" y="567" width="95.500" height="18" rx="1.500" fill="#dcdddd" opacity="0.93"/><rect x="355" y="651" width="95.500" height="18" rx="1.500" fill="#dcdddd" opacity="0.93"/><rect x="355" y="735" width="95.500" height="18" rx="1.500" fill="#dcdddd" opacity="0.93"/><rect x="355" y="819" width="95.500" height="18" rx="1.500" fill="#dcdddd" opacity="0.93"/><rect x="349" y="179" width="1.300" height="132" fill="#4aa99a"/><rect x="349" y="311" width="1.300" height="537" fill="#5be0ca"/><path d="M349 179H354.500L349 184.500Z" fill="#4fd8c4"/></svg>
<span class="t s" style="top:185.09px;font-size:9.7px;line-height:9.7px;color:#eadcc0;font-weight:700;letter-spacing:0.1px;left:356px;">Poema de Salvacion</span>
<span class="t s" style="top:202.58px;font-size:9px;line-height:9px;color:#ececec;font-weight:700;letter-spacing:-0.1px;left:353.0px;">1.1.00</span>
<span class="t s" style="top:214.58px;font-size:9px;line-height:9px;color:#4fd1c0;font-weight:400;letter-spacing:0.396px;left:353.0px;-webkit-text-stroke:0.25px #4fd1c0;">0:00.000</span>
<span class="t s" style="top:202.58px;font-size:9px;line-height:9px;color:#ececec;font-weight:700;letter-spacing:-0.1px;left:426.9px;">9.1.00</span>
<span class="t s" style="top:214.58px;font-size:9px;line-height:9px;color:#4fd1c0;font-weight:400;letter-spacing:0.396px;left:426.9px;-webkit-text-stroke:0.25px #4fd1c0;">0:21.099</span>
<span class="t s" style="top:202.58px;font-size:9px;line-height:9px;color:#ececec;font-weight:700;letter-spacing:-0.1px;left:500.9px;">17.1.00</span>
<span class="t s" style="top:214.58px;font-size:9px;line-height:9px;color:#4fd1c0;font-weight:400;letter-spacing:0.396px;left:500.9px;-webkit-text-stroke:0.25px #4fd1c0;">0:42.197</span>
<span class="t s" style="top:202.58px;font-size:9px;line-height:9px;color:#ececec;font-weight:700;letter-spacing:-0.1px;left:574.8px;">25.1.00</span>
<span class="t s" style="top:214.58px;font-size:9px;line-height:9px;color:#4fd1c0;font-weight:400;letter-spacing:0.396px;left:574.8px;-webkit-text-stroke:0.25px #4fd1c0;">1:03.296</span>
<span class="t s" style="top:202.58px;font-size:9px;line-height:9px;color:#ececec;font-weight:700;letter-spacing:-0.1px;left:648.8px;">33.1.00</span>
<span class="t s" style="top:214.58px;font-size:9px;line-height:9px;color:#4fd1c0;font-weight:400;letter-spacing:0.396px;left:648.8px;-webkit-text-stroke:0.25px #4fd1c0;">1:24.395</span>
<span class="t s" style="top:202.58px;font-size:9px;line-height:9px;color:#ececec;font-weight:700;letter-spacing:-0.1px;left:722.7px;">41.1.00</span>
<span class="t s" style="top:214.58px;font-size:9px;line-height:9px;color:#4fd1c0;font-weight:400;letter-spacing:0.396px;left:722.7px;-webkit-text-stroke:0.25px #4fd1c0;">1:45.493</span>
<span class="t s" style="top:202.58px;font-size:9px;line-height:9px;color:#ececec;font-weight:700;letter-spacing:-0.1px;left:796.6px;">49.1.00</span>
<span class="t s" style="top:214.58px;font-size:9px;line-height:9px;color:#4fd1c0;font-weight:400;letter-spacing:0.396px;left:796.6px;-webkit-text-stroke:0.25px #4fd1c0;">2:06.592</span>
<span class="t s" style="top:202.58px;font-size:9px;line-height:9px;color:#ececec;font-weight:700;letter-spacing:-0.1px;left:870.6px;">57.1.00</span>
<span class="t s" style="top:214.58px;font-size:9px;line-height:9px;color:#4fd1c0;font-weight:400;letter-spacing:0.396px;left:870.6px;-webkit-text-stroke:0.25px #4fd1c0;">2:27.691</span>
<span class="t s" style="top:202.58px;font-size:9px;line-height:9px;color:#ececec;font-weight:700;letter-spacing:-0.1px;left:944.5px;">65.1.00</span>
<span class="t s" style="top:214.58px;font-size:9px;line-height:9px;color:#4fd1c0;font-weight:400;letter-spacing:0.396px;left:944.5px;-webkit-text-stroke:0.25px #4fd1c0;">2:48.789</span>
<span class="t s" style="top:202.58px;font-size:9px;line-height:9px;color:#ececec;font-weight:700;letter-spacing:-0.1px;left:1018.4px;">73.1.00</span>
<span class="t s" style="top:214.58px;font-size:9px;line-height:9px;color:#4fd1c0;font-weight:400;letter-spacing:0.396px;left:1018.4px;-webkit-text-stroke:0.25px #4fd1c0;">3:09.888</span>
<span class="t s" style="top:202.58px;font-size:9px;line-height:9px;color:#ececec;font-weight:700;letter-spacing:-0.1px;left:1092.4px;">81.1.00</span>
<span class="t s" style="top:214.58px;font-size:9px;line-height:9px;color:#4fd1c0;font-weight:400;letter-spacing:0.396px;left:1092.4px;-webkit-text-stroke:0.25px #4fd1c0;">3:30.987</span>
<span class="t s" style="top:202.58px;font-size:9px;line-height:9px;color:#ececec;font-weight:700;letter-spacing:-0.1px;left:1166.3px;">89.1.00</span>
<span class="t s" style="top:214.58px;font-size:9px;line-height:9px;color:#4fd1c0;font-weight:400;letter-spacing:0.396px;left:1166.3px;-webkit-text-stroke:0.25px #4fd1c0;">3:52.085</span>
<span class="t s" style="top:202.58px;font-size:9px;line-height:9px;color:#ececec;font-weight:700;letter-spacing:-0.1px;left:1240.3px;">97.1.00</span>
<span class="t s" style="top:214.58px;font-size:9px;line-height:9px;color:#4fd1c0;font-weight:400;letter-spacing:0.396px;left:1240.3px;-webkit-text-stroke:0.25px #4fd1c0;">4:13.184</span>
<span class="t s" style="top:202.58px;font-size:9px;line-height:9px;color:#ececec;font-weight:700;letter-spacing:-0.1px;left:1314.2px;">105.1.00</span>
<span class="t s" style="top:214.58px;font-size:9px;line-height:9px;color:#4fd1c0;font-weight:400;letter-spacing:0.396px;left:1314.2px;-webkit-text-stroke:0.25px #4fd1c0;">4:34.283</span>
<span class="t s" style="top:202.58px;font-size:9px;line-height:9px;color:#ececec;font-weight:700;letter-spacing:-0.1px;left:1388.1px;">113.1.00</span>
<span class="t s" style="top:214.58px;font-size:9px;line-height:9px;color:#4fd1c0;font-weight:400;letter-spacing:0.396px;left:1388.1px;-webkit-text-stroke:0.25px #4fd1c0;">4:55.381</span>
<span class="t s" style="top:202.58px;font-size:9px;line-height:9px;color:#ececec;font-weight:700;letter-spacing:-0.1px;left:1462.1px;">121.1.00</span>
<span class="t s" style="top:214.58px;font-size:9px;line-height:9px;color:#4fd1c0;font-weight:400;letter-spacing:0.396px;left:1462.1px;-webkit-text-stroke:0.25px #4fd1c0;">5:16.480</span>
<span class="t s" style="top:202.58px;font-size:9px;line-height:9px;color:#ececec;font-weight:700;letter-spacing:-0.1px;left:1536.0px;width:15.0px;overflow:hidden;">129.1.00</span>
<span class="t s" style="top:214.58px;font-size:9px;line-height:9px;color:#4fd1c0;font-weight:400;letter-spacing:0.396px;left:1536.0px;width:15.0px;overflow:hidden;-webkit-text-stroke:0.25px #4fd1c0;">5:37.579</span>
<span class="t s" style="top:318.84px;font-size:10px;line-height:10px;color:#2e2e2e;font-weight:400;letter-spacing:0.3px;left:361px;-webkit-text-stroke:0.15px #2e2e2e;">Click 02</span>
<span class="t s" style="top:402.84px;font-size:10px;line-height:10px;color:#2e2e2e;font-weight:400;letter-spacing:0.3px;left:361px;-webkit-text-stroke:0.15px #2e2e2e;">Acustica 1 01</span>
<span class="t s" style="top:486.84px;font-size:10px;line-height:10px;color:#2e2e2e;font-weight:400;letter-spacing:0.3px;left:361px;-webkit-text-stroke:0.15px #2e2e2e;">Acustica 2 01</span>
<span class="t s" style="top:570.83px;font-size:10px;line-height:10px;color:#2e2e2e;font-weight:400;letter-spacing:0.3px;left:361px;-webkit-text-stroke:0.15px #2e2e2e;">Chorus 04</span>
<span class="t s" style="top:654.83px;font-size:10px;line-height:10px;color:#2e2e2e;font-weight:400;letter-spacing:0.3px;left:361px;-webkit-text-stroke:0.15px #2e2e2e;">Coalo 01</span>
<span class="t s" style="top:738.83px;font-size:10px;line-height:10px;color:#2e2e2e;font-weight:400;letter-spacing:0.3px;left:361px;-webkit-text-stroke:0.15px #2e2e2e;">Distor 1 06</span>
<span class="t s" style="top:822.83px;font-size:10px;line-height:10px;color:#2e2e2e;font-weight:400;letter-spacing:0.3px;left:361px;-webkit-text-stroke:0.15px #2e2e2e;">Distorsion 12</span>
<div style="left:89px;top:848px;width:260px;height:20px;background:#262626"></div>
<div style="left:349px;top:848px;width:1210px;height:20px;background:#1d1d1d"></div>
<div style="left:361px;top:859px;width:108px;height:6px;background:#2f8b7f;border-radius:3px"></div>
<svg style="left:351px;top:858px" width="7" height="8" viewBox="0 0 7 8"><path d="M6.500 0.500 V7.500 L0.800 4Z" fill="#2f8b7f"/></svg>
<svg style="left:1552px;top:858px" width="7" height="8" viewBox="0 0 7 8"><path d="M0.500 0.500 V7.500 L6.200 4Z" fill="#2f8b7f"/></svg>
<div style="left:1551px;top:179px;width:8px;height:669px;background:#0f0f0f"></div>
<div style="left:1551px;top:179px;width:8px;height:318.5px;background:#383838;border-radius:0 0 2px 2px"></div>
<div style="left:1327px;top:820px;width:216px;height:29px;background:#0f0f0f;border:1px solid #1d3532;border-radius:2px"></div>
<span class="t s" style="top:829.53px;font-size:10px;line-height:10px;color:#b4bcb6;font-weight:700;letter-spacing:0.898px;left:1338px;">Desktop session ready for editing.</span>
<div style="left:0px;top:866px;width:1559px;height:2px;background:#2a3140"></div>
</body></html>
